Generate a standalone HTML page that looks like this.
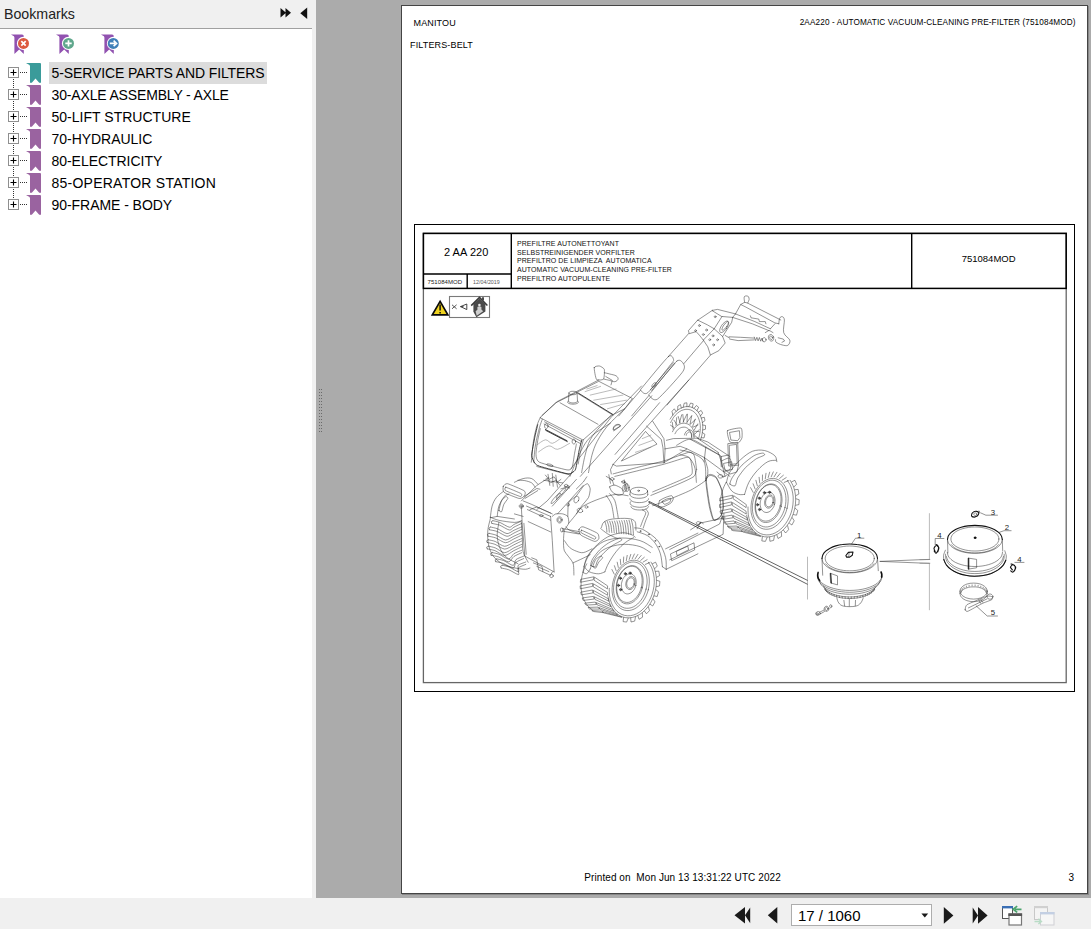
<!DOCTYPE html>
<html>
<head>
<meta charset="utf-8">
<title>Bookmarks</title>
<style>
html,body{margin:0;padding:0;}
body{width:1091px;height:929px;position:relative;overflow:hidden;background:#ababab;font-family:"Liberation Sans",sans-serif;color:#000;}
.abs{position:absolute;}
#side{position:absolute;left:0;top:0;width:312px;height:929px;background:#fff;}
#sidehead{position:absolute;left:0;top:0;width:312px;height:28px;background:#f0f0f0;border-bottom:1px solid #a0a0a0;box-sizing:content-box;}
#sidehead .t{position:absolute;left:4px;top:4.6px;font-size:14.2px;line-height:18px;color:#222;white-space:nowrap;}
#split{position:absolute;left:312px;top:0;width:4px;height:929px;background:#f0f0f0;}
#bottombar{position:absolute;left:0;top:898px;width:1091px;height:31px;background:#f0f0f0;}
.row{position:absolute;left:0;height:22px;width:312px;}
.row .lbl{position:absolute;left:49px;top:0;height:22px;line-height:22px;font-size:14px;padding:0 2px 0 2.5px;white-space:nowrap;color:#000;font-family:"Liberation Sans",sans-serif;}
.row.sel .lbl{background:#dcdcdc;}
#page{position:absolute;left:401px;top:5px;width:685px;height:887px;background:#fff;border:1px solid #444;box-shadow:1px 1px 0 #888;}
.ar{position:absolute;white-space:nowrap;font-family:"Liberation Sans",sans-serif;color:#000;}
</style>
</head>
<body>
<!-- sidebar -->
<div id="side"></div>
<div id="split"></div>
<div id="sidehead"><div class="t">Bookmarks</div></div>
<!-- header arrows -->
<svg class="abs" style="left:276px;top:4px" width="36" height="20" viewBox="276 4 36 20">
<path d="M280.5 8 L286 12.8 L280.5 17.6 Z M285.5 8 L291 12.8 L285.5 17.6 Z" fill="#111"/>
<path d="M307.2 7.6 V19 L300.3 13.3 Z" fill="#111"/>
</svg>
<!-- toolbar icons -->
<svg class="abs" style="left:0;top:30px" width="130" height="28" viewBox="0 30 130 28">
<defs>
<linearGradient id="pg" x1="0" y1="0" x2="1" y2="0"><stop offset="0" stop-color="#8f4fb0"/><stop offset="1" stop-color="#a060b8"/></linearGradient>
<g id="tb"><path d="M0 4.4 H11 Q12.8 4.4 12.8 6.2 V24 L8.2 19.6 L3.4 24 V7.6 Q3.4 5.8 1.6 5.4 Z" fill="#9152b0"/><circle cx="12.5" cy="13.4" r="6.6" fill="#fff"/></g>
</defs>
<use href="#tb" x="11" y="30"/>
<circle cx="23.5" cy="43.4" r="5.5" fill="#dc5a40"/>
<path d="M21.3 41.2 L25.7 45.6 M25.7 41.2 L21.3 45.6" stroke="#fff" stroke-width="1.7" fill="none"/>
<use href="#tb" x="56" y="30"/>
<circle cx="68.5" cy="43.4" r="5.5" fill="#5fa78c"/>
<path d="M65.3 43.4 H71.7 M68.5 40.2 V46.6" stroke="#fff" stroke-width="1.7" fill="none"/>
<use href="#tb" x="101" y="30"/>
<circle cx="113.3" cy="43.4" r="5.5" fill="#3f7fb8"/>
<path d="M109.8 43.4 H115 M113.6 40.6 L116.6 43.4 L113.6 46.2" stroke="#fff" stroke-width="1.6" fill="none"/>
</svg>
<!-- tree -->
<svg class="abs" style="left:0;top:58px" width="60" height="160" viewBox="0 58 60 160">
<defs><g id="rb"><path d="M26 0 H40 Q41 0 41 1 V19.8 L39.2 19.8 L35.5 15.6 L31.8 19.8 L30 19.8 V3.2 Q30 1.6 28.2 1.3 Z"/></g></defs>
<path d="M13.5 79 V205" stroke="#333" stroke-width="1" stroke-dasharray="1 1" fill="none" shape-rendering="crispEdges"/>
<path d="M20 72.5 H27" stroke="#333" stroke-width="1" stroke-dasharray="1 1" fill="none" shape-rendering="crispEdges"/>
<rect x="8.5" y="67.5" width="10" height="10" fill="#fff" stroke="#8f8f8f" stroke-width="1"/>
<path d="M10.5 72.5 H16.5 M13.5 69.5 V75.5" stroke="#000" stroke-width="1.1" fill="none"/>
<use href="#rb" x="0" y="63" fill="#3a9b9a"/>
<path d="M20 94.5 H27" stroke="#333" stroke-width="1" stroke-dasharray="1 1" fill="none" shape-rendering="crispEdges"/>
<rect x="8.5" y="89.5" width="10" height="10" fill="#fff" stroke="#8f8f8f" stroke-width="1"/>
<path d="M10.5 94.5 H16.5 M13.5 91.5 V97.5" stroke="#000" stroke-width="1.1" fill="none"/>
<use href="#rb" x="0" y="85" fill="#9a63a0"/>
<path d="M20 116.5 H27" stroke="#333" stroke-width="1" stroke-dasharray="1 1" fill="none" shape-rendering="crispEdges"/>
<rect x="8.5" y="111.5" width="10" height="10" fill="#fff" stroke="#8f8f8f" stroke-width="1"/>
<path d="M10.5 116.5 H16.5 M13.5 113.5 V119.5" stroke="#000" stroke-width="1.1" fill="none"/>
<use href="#rb" x="0" y="107" fill="#9a63a0"/>
<path d="M20 138.5 H27" stroke="#333" stroke-width="1" stroke-dasharray="1 1" fill="none" shape-rendering="crispEdges"/>
<rect x="8.5" y="133.5" width="10" height="10" fill="#fff" stroke="#8f8f8f" stroke-width="1"/>
<path d="M10.5 138.5 H16.5 M13.5 135.5 V141.5" stroke="#000" stroke-width="1.1" fill="none"/>
<use href="#rb" x="0" y="129" fill="#9a63a0"/>
<path d="M20 160.5 H27" stroke="#333" stroke-width="1" stroke-dasharray="1 1" fill="none" shape-rendering="crispEdges"/>
<rect x="8.5" y="155.5" width="10" height="10" fill="#fff" stroke="#8f8f8f" stroke-width="1"/>
<path d="M10.5 160.5 H16.5 M13.5 157.5 V163.5" stroke="#000" stroke-width="1.1" fill="none"/>
<use href="#rb" x="0" y="151" fill="#9a63a0"/>
<path d="M20 182.5 H27" stroke="#333" stroke-width="1" stroke-dasharray="1 1" fill="none" shape-rendering="crispEdges"/>
<rect x="8.5" y="177.5" width="10" height="10" fill="#fff" stroke="#8f8f8f" stroke-width="1"/>
<path d="M10.5 182.5 H16.5 M13.5 179.5 V185.5" stroke="#000" stroke-width="1.1" fill="none"/>
<use href="#rb" x="0" y="173" fill="#9a63a0"/>
<path d="M20 204.5 H27" stroke="#333" stroke-width="1" stroke-dasharray="1 1" fill="none" shape-rendering="crispEdges"/>
<rect x="8.5" y="199.5" width="10" height="10" fill="#fff" stroke="#8f8f8f" stroke-width="1"/>
<path d="M10.5 204.5 H16.5 M13.5 201.5 V207.5" stroke="#000" stroke-width="1.1" fill="none"/>
<use href="#rb" x="0" y="195" fill="#9a63a0"/>
</svg>
<div class="row sel" style="top:62px"><span class="lbl" style="letter-spacing:-0.112px">5-SERVICE PARTS AND FILTERS</span></div>
<div class="row" style="top:84px"><span class="lbl" style="letter-spacing:-0.153px">30-AXLE ASSEMBLY - AXLE</span></div>
<div class="row" style="top:106px"><span class="lbl" style="letter-spacing:0.019px">50-LIFT STRUCTURE</span></div>
<div class="row" style="top:128px"><span class="lbl" style="letter-spacing:-0.028px">70-HYDRAULIC</span></div>
<div class="row" style="top:150px"><span class="lbl" style="letter-spacing:-0.039px">80-ELECTRICITY</span></div>
<div class="row" style="top:172px"><span class="lbl" style="letter-spacing:0.242px">85-OPERATOR STATION</span></div>
<div class="row" style="top:194px"><span class="lbl" style="letter-spacing:-0.051px">90-FRAME - BODY</span></div>

<!-- page -->
<div id="page"></div>
<div class="ar" style="left:413.5px;top:16.8px;font-size:9px;line-height:12px;letter-spacing:0.137px">MANITOU</div>
<div class="ar" style="left:410px;top:39px;font-size:9px;line-height:12px;letter-spacing:0.143px">FILTERS-BELT</div>
<div class="ar" style="left:799.7px;top:16.6px;font-size:8.2px;line-height:12px;letter-spacing:0.127px">2AA220 - AUTOMATIC VACUUM-CLEANING PRE-FILTER (751084MOD)</div>
<div class="ar" style="left:584.3px;top:870.5px;font-size:10px;line-height:13px;letter-spacing:0.076px;white-space:pre">Printed on  Mon Jun 13 13:31:22 UTC 2022</div>
<div class="ar" style="left:1068.5px;top:870.5px;font-size:10px;line-height:13px">3</div>
<!-- frames -->
<svg class="abs" style="left:410px;top:220px" width="670" height="476" viewBox="410 220 670 476">
<rect x="414.5" y="224.5" width="660" height="467" fill="none" stroke="#000" stroke-width="1"/>
<rect x="423.4" y="233.4" width="642.8" height="449.2" fill="none" stroke="#666" stroke-width="1.3"/>
<rect x="423.4" y="233.4" width="642.8" height="55" fill="none" stroke="#000" stroke-width="1.5"/>
<path d="M511.3 233.4 V288.4 M911.7 233.4 V288.4 M423.4 274 H511.3 M467.2 274 V288.4" stroke="#000" stroke-width="1.4" fill="none"/>
</svg>
<div class="ar" style="left:443.9px;top:245.6px;font-size:11px;line-height:13px;letter-spacing:0.069px;white-space:pre">2 AA 220</div>
<div class="ar" style="left:427.5px;top:277.5px;font-size:6px;line-height:8px;letter-spacing:0.074px;color:#222">751084MOD</div>
<div class="ar" style="left:473px;top:277.8px;font-size:5.3px;line-height:8px;letter-spacing:0.028px;color:#555">12/04/2019</div>
<div class="ar" style="left:961.8px;top:252.6px;font-size:9.5px;line-height:12px;letter-spacing:-0.019px">751084MOD</div>
<div class="ar" style="left:517px;top:240.2px;font-size:7px;line-height:8.62px;letter-spacing:0.063px;white-space:pre;color:#111">PREFILTRE AUTONETTOYANT<br>SELBSTREINIGENDER VORFILTER<br>PREFILTRO DE LIMPIEZA  AUTOMATICA<br>AUTOMATIC VACUUM-CLEANING PRE-FILTER<br>PREFILTRO AUTOPULENTE</div>

<!-- warning icons -->
<svg class="abs" style="left:428px;top:293px" width="66" height="28" viewBox="428 293 66 28">
<path d="M440.1 301.4 L447.9 314.9 H432.3 Z" fill="#efd21f" stroke="#0a0a0a" stroke-width="1.7" stroke-linejoin="miter"/>
<path d="M440.1 304.6 V310.6 M440.1 312 V313.4" stroke="#111" stroke-width="1.5" fill="none"/>
<rect x="449.5" y="296.5" width="40" height="21" fill="#fff" stroke="#7a7a7a" stroke-width="1.1"/>
<path d="M452 304.8 L456.6 308.8 M456.6 304.8 L452 308.8" stroke="#444" stroke-width="0.9" fill="none"/>
<path d="M460.5 306.6 L466.8 304 V309.6 Z M460.5 306.6 H463.5" stroke="#333" stroke-width="0.9" fill="none"/>
<path d="M473.4 304 L479.5 298.4 L485.4 304 V311.6 L476.4 317.3 L473.4 311.8 Z" fill="#4a4a4a"/>
<path d="M471.2 305.6 L479.5 297.4 L487.4 305.6" stroke="#3a3a3a" stroke-width="1.5" fill="none" stroke-linejoin="miter"/>
<path d="M482 297.2 h2 v3.4 h-2 z" fill="#4a4a4a"/>
<path d="M477.4 307 q2 -1.6 4 0 v2.6 l1.8 1.6 L476.7 315.8 L475.6 311.2 l1.8 -1.4 z" fill="#cfcfcf"/>
<circle cx="479.4" cy="305" r="1.3" fill="#e8e8e8"/>
</svg>
<!--DRAW-START-->
<svg class="abs" style="left:424px;top:289px" width="642" height="393" viewBox="424 289 642 393" fill="none" stroke-linecap="round" stroke-linejoin="round">
<path stroke="#303030" stroke-width="0.52" d="M712.3 310.4 L717.5 309.4 L735.5 313.9 L732.7 317.4 L722 316.5Z M712.3 310.4 L697.4 320.4 M697.4 320.4 L688.4 330.7 L689.3 333.7 L696.1 331.6 L699.4 335.2 L703.3 340.1 L714.2 328.8 L707.8 325.1Z M714.2 328.8 L722.6 336.5 L725.2 343 L718.8 350.7 L710.4 355 L707.8 346.8 L703.3 340.1 M714.2 328.8 L722 316.5 M722.6 336.5 L731.7 322.3 L732.7 317.4 M726.5 328.4 C726.2 328.9 725.8 329.4 725.4 329.8 C725.1 330.2 724.7 330.6 724.3 331 C723.9 331.3 723.5 331.6 723.1 331.9 C722.7 332.1 722.3 332.3 722 332.4 C721.7 332.5 721.3 332.6 721.1 332.6 C720.8 332.5 720.5 332.5 720.3 332.3 C720.1 332.2 720 332 719.9 331.7 C719.7 331.4 719.7 331.1 719.7 330.8 C719.7 330.4 719.7 330 719.8 329.6 C719.9 329.1 720 328.6 720.2 328.2 C720.4 327.7 720.7 327.2 720.9 326.7 C721.2 326.2 721.5 325.7 721.8 325.2 C722.2 324.7 722.6 324.2 722.9 323.8 C723.3 323.4 723.7 323 724.1 322.7 C724.5 322.3 724.9 322 725.3 321.8 C725.6 321.5 726 321.3 726.3 321.2 C726.7 321.1 727 321.1 727.3 321.1 C727.6 321.1 727.8 321.2 728 321.3 C728.2 321.5 728.4 321.7 728.5 321.9 C728.6 322.2 728.7 322.5 728.7 322.9 C728.7 323.2 728.6 323.6 728.5 324.1 C728.5 324.5 728.3 325 728.1 325.5 C727.9 326 727.7 326.5 727.4 327 C727.2 327.5 726.8 328 726.5 328.4Z M726.5 326.8 C726.2 327.2 725.9 327.5 725.7 327.9 C725.4 328.2 725.1 328.5 724.8 328.8 C724.6 329.1 724.3 329.3 724 329.5 C723.8 329.7 723.5 329.9 723.3 330 C723.1 330.1 722.8 330.2 722.7 330.2 C722.5 330.2 722.4 330.2 722.2 330.1 C722.1 330.1 722.1 329.9 722 329.8 C722 329.6 722 329.4 722 329.1 C722 328.9 722.1 328.6 722.2 328.3 C722.3 328 722.5 327.6 722.6 327.3 C722.8 326.9 723 326.5 723.2 326.1 C723.4 325.8 723.7 325.4 723.9 325 C724.2 324.7 724.5 324.3 724.8 324 C725 323.6 725.3 323.3 725.6 323 C725.9 322.7 726.1 322.5 726.4 322.3 C726.7 322.1 726.9 321.9 727.1 321.8 C727.4 321.7 727.6 321.6 727.7 321.6 C727.9 321.6 728.1 321.6 728.2 321.7 C728.3 321.8 728.4 321.9 728.4 322.1 C728.4 322.2 728.4 322.4 728.4 322.7 C728.4 322.9 728.3 323.2 728.2 323.5 C728.1 323.9 728 324.2 727.8 324.6 C727.6 324.9 727.4 325.3 727.2 325.7 C727 326 726.7 326.4 726.5 326.8Z M700.3 325.5 C700.3 325.6 700.3 325.7 700.2 325.8 C700.2 325.8 700.2 325.9 700.2 326 C700.1 326 700.1 326.1 700 326.2 C700 326.2 699.9 326.3 699.8 326.3 C699.8 326.3 699.7 326.4 699.6 326.4 C699.5 326.4 699.5 326.4 699.4 326.4 C699.3 326.4 699.2 326.4 699.1 326.4 C699.1 326.4 699 326.3 698.9 326.3 C698.9 326.3 698.8 326.2 698.7 326.2 C698.7 326.1 698.6 326 698.6 326 C698.6 325.9 698.5 325.8 698.5 325.8 C698.5 325.7 698.5 325.6 698.5 325.5 C698.5 325.4 698.5 325.4 698.5 325.3 C698.5 325.2 698.6 325.1 698.6 325.1 C698.6 325 698.7 324.9 698.7 324.9 C698.8 324.8 698.9 324.8 698.9 324.7 C699 324.7 699.1 324.7 699.1 324.6 C699.2 324.6 699.3 324.6 699.4 324.6 C699.5 324.6 699.5 324.6 699.6 324.6 C699.7 324.7 699.8 324.7 699.8 324.7 C699.9 324.8 700 324.8 700 324.9 C700.1 324.9 700.1 325 700.2 325.1 C700.2 325.1 700.2 325.2 700.2 325.3 C700.3 325.4 700.3 325.4 700.3 325.5Z M707.4 330 C707.4 330.1 707.4 330.2 707.4 330.3 C707.3 330.4 707.3 330.4 707.3 330.5 C707.2 330.6 707.2 330.6 707.1 330.7 C707.1 330.7 707 330.8 706.9 330.8 C706.9 330.9 706.8 330.9 706.7 330.9 C706.6 330.9 706.6 330.9 706.5 330.9 C706.4 330.9 706.3 330.9 706.2 330.9 C706.2 330.9 706.1 330.9 706 330.8 C706 330.8 705.9 330.7 705.8 330.7 C705.8 330.6 705.7 330.6 705.7 330.5 C705.7 330.4 705.6 330.4 705.6 330.3 C705.6 330.2 705.6 330.1 705.6 330 C705.6 330 705.6 329.9 705.6 329.8 C705.6 329.7 705.7 329.7 705.7 329.6 C705.7 329.5 705.8 329.5 705.8 329.4 C705.9 329.3 706 329.3 706 329.3 C706.1 329.2 706.2 329.2 706.2 329.2 C706.3 329.1 706.4 329.1 706.5 329.1 C706.6 329.1 706.6 329.1 706.7 329.2 C706.8 329.2 706.9 329.2 706.9 329.3 C707 329.3 707.1 329.3 707.1 329.4 C707.2 329.5 707.2 329.5 707.3 329.6 C707.3 329.7 707.3 329.7 707.4 329.8 C707.4 329.9 707.4 330 707.4 330Z M696.4 330.7 C696.4 330.8 696.4 330.8 696.4 330.9 C696.4 331 696.3 331.1 696.3 331.1 C696.2 331.2 696.2 331.3 696.1 331.3 C696.1 331.4 696 331.4 696 331.5 C695.9 331.5 695.8 331.5 695.7 331.6 C695.7 331.6 695.6 331.6 695.5 331.6 C695.4 331.6 695.3 331.6 695.3 331.6 C695.2 331.5 695.1 331.5 695 331.5 C695 331.4 694.9 331.4 694.9 331.3 C694.8 331.3 694.8 331.2 694.7 331.1 C694.7 331.1 694.6 331 694.6 330.9 C694.6 330.8 694.6 330.8 694.6 330.7 C694.6 330.6 694.6 330.5 694.6 330.5 C694.6 330.4 694.7 330.3 694.7 330.2 C694.8 330.2 694.8 330.1 694.9 330 C694.9 330 695 329.9 695 329.9 C695.1 329.9 695.2 329.8 695.3 329.8 C695.3 329.8 695.4 329.8 695.5 329.8 C695.6 329.8 695.7 329.8 695.7 329.8 C695.8 329.8 695.9 329.9 696 329.9 C696 329.9 696.1 330 696.1 330 C696.2 330.1 696.2 330.2 696.3 330.2 C696.3 330.3 696.4 330.4 696.4 330.5 C696.4 330.5 696.4 330.6 696.4 330.7Z M704.2 334.6 C704.2 334.6 704.1 334.7 704.1 334.8 C704.1 334.9 704.1 334.9 704 335 C704 335.1 703.9 335.1 703.9 335.2 C703.8 335.3 703.8 335.3 703.7 335.3 C703.6 335.4 703.6 335.4 703.5 335.4 C703.4 335.5 703.3 335.5 703.3 335.5 C703.2 335.5 703.1 335.5 703 335.4 C702.9 335.4 702.9 335.4 702.8 335.3 C702.7 335.3 702.7 335.3 702.6 335.2 C702.6 335.1 702.5 335.1 702.5 335 C702.4 334.9 702.4 334.9 702.4 334.8 C702.4 334.7 702.3 334.6 702.3 334.6 C702.3 334.5 702.4 334.4 702.4 334.3 C702.4 334.3 702.4 334.2 702.5 334.1 C702.5 334 702.6 334 702.6 333.9 C702.7 333.9 702.7 333.8 702.8 333.8 C702.9 333.7 702.9 333.7 703 333.7 C703.1 333.7 703.2 333.7 703.3 333.7 C703.3 333.7 703.4 333.7 703.5 333.7 C703.6 333.7 703.6 333.7 703.7 333.8 C703.8 333.8 703.8 333.9 703.9 333.9 C703.9 334 704 334 704 334.1 C704.1 334.2 704.1 334.3 704.1 334.3 C704.1 334.4 704.2 334.5 704.2 334.6Z M713.8 335.9 C713.8 335.9 713.8 336 713.8 336.1 C713.8 336.2 713.8 336.2 713.7 336.3 C713.7 336.4 713.6 336.4 713.6 336.5 C713.5 336.6 713.5 336.6 713.4 336.6 C713.3 336.7 713.2 336.7 713.2 336.7 C713.1 336.7 713 336.8 712.9 336.8 C712.9 336.8 712.8 336.7 712.7 336.7 C712.6 336.7 712.6 336.7 712.5 336.6 C712.4 336.6 712.4 336.6 712.3 336.5 C712.2 336.4 712.2 336.4 712.2 336.3 C712.1 336.2 712.1 336.2 712.1 336.1 C712 336 712 335.9 712 335.9 C712 335.8 712 335.7 712.1 335.6 C712.1 335.5 712.1 335.5 712.2 335.4 C712.2 335.3 712.2 335.3 712.3 335.2 C712.4 335.2 712.4 335.1 712.5 335.1 C712.6 335 712.6 335 712.7 335 C712.8 335 712.9 335 712.9 335 C713 335 713.1 335 713.2 335 C713.2 335 713.3 335 713.4 335.1 C713.5 335.1 713.5 335.2 713.6 335.2 C713.6 335.3 713.7 335.3 713.7 335.4 C713.8 335.5 713.8 335.5 713.8 335.6 C713.8 335.7 713.8 335.8 713.8 335.9Z M718.4 339.7 C718.4 339.8 718.4 339.9 718.3 340 C718.3 340 718.3 340.1 718.2 340.2 C718.2 340.3 718.2 340.3 718.1 340.4 C718 340.4 718 340.5 717.9 340.5 C717.8 340.6 717.8 340.6 717.7 340.6 C717.6 340.6 717.5 340.6 717.5 340.6 C717.4 340.6 717.3 340.6 717.2 340.6 C717.2 340.6 717.1 340.6 717 340.5 C716.9 340.5 716.9 340.4 716.8 340.4 C716.8 340.3 716.7 340.3 716.7 340.2 C716.6 340.1 716.6 340 716.6 340 C716.6 339.9 716.6 339.8 716.6 339.7 C716.6 339.7 716.6 339.6 716.6 339.5 C716.6 339.4 716.6 339.3 716.7 339.3 C716.7 339.2 716.8 339.1 716.8 339.1 C716.9 339 716.9 339 717 338.9 C717.1 338.9 717.2 338.9 717.2 338.9 C717.3 338.8 717.4 338.8 717.5 338.8 C717.5 338.8 717.6 338.8 717.7 338.9 C717.8 338.9 717.8 338.9 717.9 338.9 C718 339 718 339 718.1 339.1 C718.2 339.1 718.2 339.2 718.2 339.3 C718.3 339.3 718.3 339.4 718.3 339.5 C718.4 339.6 718.4 339.7 718.4 339.7Z M710.6 339.7 C710.6 339.8 710.6 339.9 710.6 340 C710.6 340 710.5 340.1 710.5 340.2 C710.5 340.3 710.4 340.3 710.3 340.4 C710.3 340.4 710.2 340.5 710.2 340.5 C710.1 340.6 710 340.6 709.9 340.6 C709.9 340.6 709.8 340.6 709.7 340.6 C709.6 340.6 709.6 340.6 709.5 340.6 C709.4 340.6 709.3 340.6 709.3 340.5 C709.2 340.5 709.1 340.4 709.1 340.4 C709 340.3 709 340.3 708.9 340.2 C708.9 340.1 708.9 340 708.8 340 C708.8 339.9 708.8 339.8 708.8 339.7 C708.8 339.7 708.8 339.6 708.8 339.5 C708.9 339.4 708.9 339.3 708.9 339.3 C709 339.2 709 339.1 709.1 339.1 C709.1 339 709.2 339 709.3 338.9 C709.3 338.9 709.4 338.9 709.5 338.9 C709.6 338.8 709.6 338.8 709.7 338.8 C709.8 338.8 709.9 338.8 709.9 338.9 C710 338.9 710.1 338.9 710.2 338.9 C710.2 339 710.3 339 710.3 339.1 C710.4 339.1 710.5 339.2 710.5 339.3 C710.5 339.3 710.6 339.4 710.6 339.5 C710.6 339.6 710.6 339.7 710.6 339.7Z M714.5 344.9 C714.5 345 714.5 345.1 714.5 345.1 C714.4 345.2 714.4 345.3 714.4 345.3 C714.3 345.4 714.3 345.5 714.2 345.5 C714.2 345.6 714.1 345.6 714 345.7 C714 345.7 713.9 345.8 713.8 345.8 C713.7 345.8 713.7 345.8 713.6 345.8 C713.5 345.8 713.4 345.8 713.4 345.8 C713.3 345.8 713.2 345.7 713.1 345.7 C713.1 345.6 713 345.6 712.9 345.5 C712.9 345.5 712.8 345.4 712.8 345.3 C712.8 345.3 712.7 345.2 712.7 345.1 C712.7 345.1 712.7 345 712.7 344.9 C712.7 344.8 712.7 344.7 712.7 344.7 C712.7 344.6 712.8 344.5 712.8 344.4 C712.8 344.4 712.9 344.3 712.9 344.3 C713 344.2 713.1 344.2 713.1 344.1 C713.2 344.1 713.3 344 713.4 344 C713.4 344 713.5 344 713.6 344 C713.7 344 713.7 344 713.8 344 C713.9 344 714 344.1 714 344.1 C714.1 344.2 714.2 344.2 714.2 344.3 C714.3 344.3 714.3 344.4 714.4 344.4 C714.4 344.5 714.4 344.6 714.5 344.7 C714.5 344.7 714.5 344.8 714.5 344.9Z M716 316.7 C716 316.8 716 316.9 716 317 C716 317 716 317.1 715.9 317.2 C715.9 317.3 715.8 317.3 715.8 317.4 C715.7 317.4 715.7 317.5 715.6 317.5 C715.5 317.6 715.4 317.6 715.4 317.6 C715.3 317.6 715.2 317.6 715.1 317.6 C715.1 317.6 715 317.6 714.9 317.6 C714.8 317.6 714.8 317.6 714.7 317.5 C714.6 317.5 714.6 317.4 714.5 317.4 C714.4 317.3 714.4 317.3 714.4 317.2 C714.3 317.1 714.3 317 714.3 317 C714.2 316.9 714.2 316.8 714.2 316.7 C714.2 316.7 714.2 316.6 714.3 316.5 C714.3 316.4 714.3 316.4 714.4 316.3 C714.4 316.2 714.4 316.2 714.5 316.1 C714.6 316 714.6 316 714.7 316 C714.8 315.9 714.8 315.9 714.9 315.9 C715 315.8 715.1 315.8 715.1 315.8 C715.2 315.8 715.3 315.8 715.4 315.9 C715.4 315.9 715.5 315.9 715.6 316 C715.7 316 715.7 316 715.8 316.1 C715.8 316.2 715.9 316.2 715.9 316.3 C716 316.4 716 316.4 716 316.5 C716 316.6 716 316.7 716 316.7Z M688.8 333.4 L668.4 356.5 M703.5 340.6 L683.9 363.6 M710.4 355.2 L667.1 405 M735.5 313.9 L740.7 304.5 L744.6 302.3 L747.2 302.9 L780.8 320 M740.7 304.5 L745.9 307.1 L774.9 322.9 L778.8 323.8 M732.7 317.4 L752.3 323.8 L769.1 330.7 M735.5 313.9 L754.9 321.6 L770.4 328.8 M744.6 302.3 C744.5 301.4 743.9 298.2 744.2 297.1 C744.5 296 745.4 296 746.1 295.9 C746.8 295.9 748 296.1 748.5 296.7 C749 297.3 749.2 298.7 749.1 299.7 C749 300.7 747.9 302.4 747.7 302.9 M750.4 315.8 L751 317.8 L758.8 319.1 L759.4 321.6 L765.3 321.6 L765.9 323.8 M778.8 323.8 C779 322.9 779.1 319.3 779.7 318.2 C780.3 317 781.5 316.4 782.3 316.7 C783.1 317 784.1 317.3 784.4 320 C784.6 322.6 782.8 329.3 783.7 332.6 C784.6 336 789.1 338 789.8 340.1 C790.5 342.2 789.1 344.5 787.9 345.3 C786.6 346.1 784 345.4 782 344.9 C780.1 344.4 777.3 343.2 776.2 342.3 C775.2 341.5 775.7 340.2 775.6 339.7 M770.4 328.8 L774.9 323.8 M729.1 336.8 L740.7 337.3 L754.3 338.1 M729.7 339.1 L738.1 340.6 L754.3 339.9 M725.2 335.5 L729.7 338.1 M754.3 337.1 L755.6 340.6 L756.9 337.3 L758.1 340.9 L759.4 337.5 L760.7 341.2 L762 338.1 L762.9 341.2 M773.5 336.9 C773.6 337.2 773.7 337.5 773.7 337.8 C773.7 338 773.8 338.3 773.7 338.6 C773.7 338.9 773.7 339.2 773.6 339.4 C773.5 339.6 773.4 339.9 773.3 340.1 C773.1 340.3 773 340.5 772.8 340.6 C772.6 340.8 772.4 340.9 772.2 340.9 C772 341 771.8 341.1 771.5 341.1 C771.3 341.1 771.1 341 770.8 341 C770.6 340.9 770.4 340.8 770.2 340.6 C769.9 340.5 769.7 340.3 769.5 340.1 C769.3 339.9 769.2 339.7 769 339.5 C768.9 339.2 768.7 338.9 768.6 338.7 C768.5 338.4 768.5 338.1 768.4 337.8 C768.4 337.5 768.4 337.3 768.4 337 C768.4 336.7 768.5 336.4 768.5 336.2 C768.6 335.9 768.7 335.7 768.9 335.5 C769 335.3 769.2 335.1 769.3 335 C769.5 334.8 769.7 334.7 769.9 334.6 C770.1 334.6 770.4 334.5 770.6 334.5 C770.8 334.5 771.1 334.5 771.3 334.6 C771.5 334.7 771.8 334.8 772 334.9 C772.2 335.1 772.4 335.3 772.6 335.5 C772.8 335.6 773 335.9 773.1 336.1 C773.3 336.4 773.4 336.6 773.5 336.9Z M772.3 337.4 C772.3 337.5 772.4 337.7 772.4 337.8 C772.4 338 772.4 338.1 772.4 338.3 C772.4 338.4 772.4 338.6 772.4 338.7 C772.3 338.8 772.3 338.9 772.2 339 C772.1 339.2 772.1 339.2 772 339.3 C771.9 339.4 771.8 339.5 771.7 339.5 C771.6 339.5 771.5 339.6 771.3 339.5 C771.2 339.5 771.1 339.5 771 339.5 C770.9 339.4 770.8 339.4 770.6 339.3 C770.5 339.2 770.4 339.1 770.3 339 C770.2 338.9 770.1 338.8 770.1 338.7 C770 338.5 769.9 338.4 769.9 338.2 C769.8 338.1 769.8 337.9 769.7 337.8 C769.7 337.6 769.7 337.5 769.7 337.3 C769.7 337.2 769.7 337 769.8 336.9 C769.8 336.8 769.9 336.6 769.9 336.5 C770 336.4 770.1 336.3 770.2 336.3 C770.2 336.2 770.3 336.1 770.4 336.1 C770.6 336.1 770.7 336 770.8 336 C770.9 336 771 336.1 771.1 336.1 C771.3 336.1 771.4 336.2 771.5 336.3 C771.6 336.4 771.7 336.5 771.8 336.6 C771.9 336.7 772 336.8 772.1 336.9 C772.2 337.1 772.2 337.2 772.3 337.4Z M766 339.7 C766 339.9 766 340.1 766 340.3 C765.9 340.4 765.9 340.6 765.8 340.8 C765.7 340.9 765.6 341.1 765.5 341.2 C765.4 341.3 765.3 341.4 765.1 341.5 C765 341.6 764.8 341.7 764.7 341.7 C764.5 341.8 764.4 341.8 764.2 341.8 C764.1 341.8 763.9 341.8 763.8 341.7 C763.6 341.7 763.5 341.6 763.3 341.5 C763.2 341.4 763.1 341.3 762.9 341.2 C762.8 341.1 762.7 340.9 762.7 340.8 C762.6 340.6 762.5 340.4 762.5 340.3 C762.4 340.1 762.4 339.9 762.4 339.7 C762.4 339.6 762.4 339.4 762.5 339.2 C762.5 339 762.6 338.9 762.7 338.7 C762.7 338.5 762.8 338.4 762.9 338.3 C763.1 338.1 763.2 338 763.3 337.9 C763.5 337.9 763.6 337.8 763.8 337.7 C763.9 337.7 764.1 337.7 764.2 337.7 C764.4 337.7 764.5 337.7 764.7 337.7 C764.8 337.8 765 337.9 765.1 337.9 C765.3 338 765.4 338.1 765.5 338.3 C765.6 338.4 765.7 338.5 765.8 338.7 C765.9 338.9 765.9 339 766 339.2 C766 339.4 766 339.6 766 339.7Z M765.3 332.6 L769.1 330.3 L773 332.6 M778.2 337.8 L783.3 339.1 L784.6 341 L782 342.3 M668.5 356.5 C672 353.4 673.4 358.8 673.6 359.8 C673.9 360.7 673.4 361.1 670.4 364.9 C667.4 368.8 651.3 389.8 647.8 392.7 C644.3 395.6 641.2 390.9 640.7 390.1 C640.2 389.4 640.1 390.2 643.3 386.2 C646.5 382.3 664.9 359.6 668.5 356.5Z M676.9 361 C680.6 358 683.4 363.6 684 364.9 C684.6 366.3 685.1 368.7 682 372.7 C679 376.7 661.3 396.5 657.5 399.1 C653.7 401.8 649.7 396.3 649.1 395.3 C648.5 394.3 649.1 394.7 652.3 390.8 C655.6 386.8 673.2 364.1 676.9 361Z M673.6 362.6 L650.4 389.7 M674.9 363.4 L651.7 390.5 M654.9 385.8 C654.7 386 654.5 386.1 654.4 386.3 C654.2 386.5 654 386.6 653.8 386.7 C653.7 386.9 653.5 387 653.3 387.1 C653.1 387.1 653 387.2 652.8 387.2 C652.6 387.3 652.5 387.3 652.4 387.3 C652.3 387.2 652.1 387.2 652.1 387.1 C652 387 651.9 386.9 651.9 386.8 C651.8 386.7 651.8 386.6 651.8 386.4 C651.8 386.3 651.8 386.1 651.9 385.9 C651.9 385.7 652 385.5 652.1 385.3 C652.2 385.1 652.3 384.9 652.5 384.7 C652.6 384.5 652.7 384.3 652.9 384.1 C653.1 383.9 653.2 383.7 653.4 383.6 C653.6 383.4 653.8 383.3 653.9 383.1 C654.1 383 654.3 382.9 654.5 382.8 C654.6 382.7 654.8 382.7 655 382.6 C655.1 382.6 655.3 382.6 655.4 382.6 C655.5 382.6 655.6 382.7 655.7 382.8 C655.8 382.8 655.9 382.9 655.9 383.1 C655.9 383.2 656 383.3 656 383.5 C656 383.6 655.9 383.8 655.9 384 C655.8 384.2 655.7 384.4 655.7 384.6 C655.6 384.8 655.4 385 655.3 385.2 C655.2 385.4 655 385.6 654.9 385.8Z M640.7 390.1 L618.8 415.9 M649.1 395.3 L631.7 415.9 M594.2 367.5 C594.5 366.2 598.4 365.8 599.4 366 C600.4 366.1 603.9 368.1 604.3 369.4 C604.7 370.8 604.3 378.1 603.5 379.1 C602.7 380.1 597.5 380.5 596.5 379.4 C595.6 378.2 593.9 368.8 594.2 367.5Z M604.3 372.7 C605.2 372.9 607.7 373.4 609.7 374 C611.7 374.5 614.8 375 616.2 375.9 C617.6 376.8 618.3 378.2 618.1 379.1 C617.9 380.1 616.3 381.5 614.9 381.7 C613.5 381.9 611.5 380.9 609.7 380.4 C607.9 380 604.9 379.3 603.9 379.1 M605.8 376.5 L612.3 380.4 L611 384.9 M540.3 417.4 L555.8 402.8 L598.8 381.3 L632.4 398.5 L624.7 408.8 L610.9 415.7 L598.8 426.1 L583.3 439.8Z M560.1 402.8 L598 424.3 M578.5 393.9 L613 415.2 M542 415.4 L557.2 401.6 L598.8 379.9 M577.1 393 C577.1 393.1 577.1 393.3 577 393.4 C576.9 393.6 576.8 393.7 576.6 393.9 C576.4 394 576.2 394.1 575.9 394.2 C575.7 394.3 575.4 394.4 575.1 394.5 C574.8 394.6 574.4 394.6 574.1 394.7 C573.7 394.7 573.4 394.7 573 394.7 C572.6 394.7 572.3 394.7 571.9 394.7 C571.6 394.6 571.2 394.6 570.9 394.5 C570.6 394.4 570.3 394.3 570.1 394.2 C569.8 394.1 569.6 394 569.4 393.9 C569.2 393.7 569.1 393.6 569 393.4 C568.9 393.3 568.9 393.1 568.9 393 C568.9 392.8 568.9 392.7 569 392.5 C569.1 392.4 569.2 392.3 569.4 392.1 C569.6 392 569.8 391.9 570.1 391.8 C570.3 391.7 570.6 391.6 570.9 391.5 C571.2 391.4 571.6 391.4 571.9 391.3 C572.3 391.3 572.6 391.3 573 391.3 C573.4 391.3 573.7 391.3 574.1 391.3 C574.4 391.4 574.8 391.4 575.1 391.5 C575.4 391.6 575.7 391.7 575.9 391.8 C576.2 391.9 576.4 392 576.6 392.1 C576.8 392.3 576.9 392.4 577 392.5 C577.1 392.7 577.1 392.8 577.1 393Z M577.5 401.1 C577.5 401.2 577.4 401.4 577.3 401.6 C577.2 401.7 577.1 401.9 576.9 402 C576.7 402.2 576.4 402.3 576.2 402.4 C575.9 402.5 575.6 402.6 575.2 402.7 C574.9 402.8 574.5 402.9 574.2 402.9 C573.8 403 573.4 403 573 403 C572.6 403 572.2 403 571.8 402.9 C571.5 402.9 571.1 402.8 570.8 402.7 C570.4 402.6 570.1 402.5 569.8 402.4 C569.6 402.3 569.3 402.2 569.1 402 C568.9 401.9 568.8 401.7 568.7 401.6 C568.6 401.4 568.6 401.2 568.5 401.1 M568.9 393 L568.5 401.1 M577.1 393 L577.5 401.1 M578.5 401.9 C578.5 402 578.4 402.3 578.3 402.5 C578.2 402.7 578 402.9 577.8 403.1 C577.5 403.2 577.2 403.4 576.9 403.5 C576.6 403.7 576.2 403.8 575.8 403.9 C575.3 404 574.9 404.1 574.4 404.1 C574 404.2 573.5 404.2 573 404.2 C572.5 404.2 572 404.2 571.6 404.1 C571.1 404.1 570.7 404 570.2 403.9 C569.8 403.8 569.4 403.7 569.1 403.5 C568.8 403.4 568.5 403.2 568.2 403.1 C568 402.9 567.8 402.7 567.7 402.5 C567.6 402.3 567.5 402 567.5 401.9 M540.3 417.4 C539.7 418.9 538 422 536.8 426.1 C535.7 430.1 534.3 435.5 533.4 441.6 C532.5 447.6 531.7 458.8 531.3 462.2 M542.3 419.2 C541.9 420.6 540.6 423.5 539.4 427.8 C538.3 432.1 536.4 439.3 535.5 445 C534.5 450.7 534 459.4 533.7 462.2 M544.6 421.8 L581.6 441.6 M544.1 424 L580.8 443.8 M548 426.1 C548 426.3 548 426.5 548 426.7 C547.9 426.9 547.9 427.1 547.8 427.3 C547.7 427.4 547.6 427.6 547.5 427.8 C547.4 427.9 547.3 428 547.2 428.1 C547 428.3 546.9 428.3 546.8 428.4 C546.6 428.4 546.5 428.5 546.3 428.5 C546.2 428.5 546 428.4 545.9 428.4 C545.7 428.3 545.6 428.3 545.4 428.1 C545.3 428 545.2 427.9 545.1 427.8 C545 427.6 544.9 427.4 544.8 427.3 C544.7 427.1 544.7 426.9 544.6 426.7 C544.6 426.5 544.6 426.3 544.6 426.1 C544.6 425.9 544.6 425.6 544.6 425.4 C544.7 425.2 544.7 425 544.8 424.9 C544.9 424.7 545 424.5 545.1 424.4 C545.2 424.2 545.3 424.1 545.4 424 C545.6 423.9 545.7 423.8 545.9 423.7 C546 423.7 546.2 423.6 546.3 423.6 C546.5 423.6 546.6 423.7 546.8 423.7 C546.9 423.8 547 423.9 547.2 424 C547.3 424.1 547.4 424.2 547.5 424.4 C547.6 424.5 547.7 424.7 547.8 424.9 C547.9 425 547.9 425.2 548 425.4 C548 425.6 548 425.9 548 426.1Z M575.6 441.6 C575.6 441.8 575.6 442 575.5 442.2 C575.5 442.4 575.4 442.6 575.4 442.8 C575.3 442.9 575.2 443.1 575.1 443.3 C575 443.4 574.9 443.5 574.7 443.6 C574.6 443.8 574.5 443.8 574.3 443.9 C574.2 443.9 574 444 573.9 444 C573.7 444 573.6 443.9 573.4 443.9 C573.3 443.8 573.1 443.8 573 443.6 C572.9 443.5 572.8 443.4 572.6 443.3 C572.5 443.1 572.4 442.9 572.4 442.8 C572.3 442.6 572.2 442.4 572.2 442.2 C572.2 442 572.1 441.8 572.1 441.6 C572.1 441.4 572.2 441.1 572.2 440.9 C572.2 440.7 572.3 440.5 572.4 440.4 C572.4 440.2 572.5 440 572.6 439.9 C572.8 439.7 572.9 439.6 573 439.5 C573.1 439.4 573.3 439.3 573.4 439.2 C573.6 439.2 573.7 439.1 573.9 439.1 C574 439.1 574.2 439.2 574.3 439.2 C574.5 439.3 574.6 439.4 574.7 439.5 C574.9 439.6 575 439.7 575.1 439.9 C575.2 440 575.3 440.2 575.4 440.4 C575.4 440.5 575.5 440.7 575.5 440.9 C575.6 441.1 575.6 441.4 575.6 441.6Z M583.3 439.8 C582.9 441.6 581.6 446.2 580.8 450.2 C579.9 454.2 578.6 461.7 578.2 464 M610.9 415.7 C609.2 417.4 604 422 600.6 426.1 C597.1 430.1 592.8 435 590.2 439.8 C587.6 444.7 586.5 449.9 585.1 455.3 C583.6 460.8 582.2 469.7 581.6 472.6 M624.7 408.8 C621.8 411.7 612 420.6 607.4 426.1 C602.9 431.5 599.7 436.7 597.1 441.6 C594.5 446.4 593.4 450.2 591.9 455.3 C590.5 460.5 589.1 469.7 588.5 472.6 M613.6 429.3 C613.6 429.2 613.4 428.9 613.4 428.7 C613.4 428.4 613.4 428.1 613.4 427.9 C613.4 427.6 613.5 427.4 613.6 427.1 C613.7 426.8 613.9 426.6 614.1 426.3 C614.3 426.1 614.5 425.8 614.7 425.6 C615 425.4 615.3 425.2 615.5 425.1 C615.8 424.9 616.1 424.7 616.4 424.6 C616.7 424.5 617.1 424.5 617.4 424.4 C617.7 424.4 618 424.4 618.3 424.4 C618.6 424.4 618.8 424.5 619.1 424.6 C619.3 424.7 619.5 424.8 619.7 425 C619.9 425.1 620.1 425.5 620.2 425.5 M614 429.8 L620.4 426.1 M540.3 428.6 C540 429.8 538.1 438.1 537.7 440.7 C537.3 443.3 535.8 452.3 536 454.4 C536.1 456.6 536.3 460.6 539.4 462.2 C542.5 463.7 563.7 469.4 567 469.9 C570.2 470.5 571.4 468.9 572.1 467.4 C572.9 465.8 574 456.8 574.4 454.4 C574.8 452.1 576.2 445.1 576.4 444.1 M536.8 466.5 L569.6 474.8 M552.7 465.9 C552.7 466 552.7 466.1 552.6 466.2 C552.5 466.2 552.4 466.3 552.2 466.3 C552.1 466.4 551.9 466.4 551.7 466.4 C551.5 466.4 551.3 466.4 551 466.4 C550.8 466.4 550.5 466.3 550.3 466.3 C550 466.3 549.7 466.2 549.5 466.1 C549.2 466.1 549 466 548.7 465.9 C548.5 465.8 548.2 465.7 548 465.6 C547.8 465.5 547.6 465.4 547.4 465.3 C547.3 465.2 547.1 465 547 464.9 C546.9 464.8 546.8 464.7 546.8 464.6 C546.7 464.5 546.7 464.4 546.8 464.3 C546.8 464.2 546.8 464.2 546.9 464.1 C547 464 547.1 464 547.3 463.9 C547.4 463.9 547.6 463.9 547.8 463.9 C548 463.8 548.3 463.8 548.5 463.9 C548.7 463.9 549 463.9 549.2 464 C549.5 464 549.8 464.1 550 464.1 C550.3 464.2 550.5 464.3 550.8 464.4 C551 464.5 551.3 464.6 551.5 464.7 C551.7 464.8 551.9 464.9 552.1 465 C552.2 465.1 552.4 465.2 552.5 465.3 C552.6 465.4 552.7 465.5 552.7 465.6 C552.8 465.7 552.8 465.8 552.7 465.9Z M545.4 475.1 L548.9 479.4 L554.1 476.8 L557.5 482 L560.9 479.4 M546.3 478.6 L550.6 482.9 L555.8 480.3 L560.1 485.4 M548 474.3 L549.8 485.4 M552.3 473.4 L553.2 486.3 M555.8 475.1 L557.5 487.2 M543.7 480.3 L562.7 482.9 M573 471.7 L547.2 500.9 L536.8 509.6 M576.4 479.4 L552.3 506.1 M583.3 485.4 L557.5 513.9 M560.9 488.9 L569.6 486.3 L566.1 490.6 M556.8 499.3 C556.4 499.7 556 500.2 555.6 500.6 C555.2 501 554.8 501.4 554.4 501.7 C554 502.1 553.6 502.4 553.2 502.6 C552.9 502.9 552.6 503.1 552.3 503.3 C552 503.4 551.8 503.5 551.6 503.5 C551.4 503.6 551.3 503.6 551.2 503.5 C551.1 503.4 551 503.3 551.1 503.1 C551.1 502.9 551.2 502.6 551.3 502.3 C551.4 502 551.6 501.7 551.8 501.3 C552 501 552.3 500.5 552.6 500.1 C552.9 499.7 553.2 499.2 553.6 498.8 C554 498.4 554.4 497.9 554.8 497.4 C555.2 497 555.6 496.6 556 496.1 C556.4 495.7 556.8 495.3 557.2 495 C557.6 494.7 558 494.3 558.3 494.1 C558.7 493.8 559 493.6 559.3 493.5 C559.5 493.3 559.8 493.2 560 493.2 C560.2 493.1 560.3 493.2 560.4 493.2 C560.5 493.3 560.5 493.5 560.5 493.7 C560.5 493.8 560.4 494.1 560.3 494.4 C560.2 494.7 560 495 559.8 495.4 C559.5 495.8 559.3 496.2 559 496.6 C558.7 497 558.3 497.5 558 497.9 C557.6 498.4 557.2 498.8 556.8 499.3Z M562 494.1 C561.6 494.6 561.2 495 560.7 495.4 C560.3 495.8 559.9 496.2 559.5 496.6 C559.1 496.9 558.8 497.2 558.4 497.5 C558.1 497.7 557.7 497.9 557.5 498.1 C557.2 498.2 556.9 498.3 556.8 498.4 C556.6 498.4 556.4 498.4 556.3 498.3 C556.2 498.2 556.2 498.1 556.2 497.9 C556.2 497.7 556.3 497.5 556.4 497.2 C556.6 496.9 556.7 496.5 557 496.2 C557.2 495.8 557.5 495.4 557.8 495 C558.1 494.5 558.4 494.1 558.8 493.6 C559.1 493.2 559.5 492.7 559.9 492.3 C560.3 491.8 560.7 491.4 561.2 491 C561.6 490.6 562 490.2 562.4 489.8 C562.8 489.5 563.1 489.2 563.5 488.9 C563.8 488.7 564.2 488.5 564.4 488.3 C564.7 488.2 564.9 488.1 565.1 488 C565.3 488 565.5 488 565.6 488.1 C565.6 488.2 565.7 488.3 565.7 488.5 C565.6 488.7 565.6 488.9 565.5 489.2 C565.3 489.5 565.1 489.9 564.9 490.2 C564.7 490.6 564.4 491 564.1 491.4 C563.8 491.9 563.5 492.3 563.1 492.8 C562.8 493.2 562.4 493.7 562 494.1Z M521.3 500.9 L536.8 485.4 L548.9 477.7 M526.5 506.1 L550.6 516.4 M527.4 509.6 L550.6 520.2 M528.2 521.6 L550.6 531.9 M521.3 506.1 L522.2 523.3 L524.8 556.1 L554.1 571.9 M523.9 523.3 L526.2 554.3 M550.6 516.4 L552.3 540.6 L554.1 571.9 M514.4 513.9 L523.1 516.4 M523.4 506.1 C523.4 506.3 523.4 506.5 523.3 506.6 C523.3 506.8 523.2 507 523.1 507.1 C523 507.3 522.9 507.4 522.8 507.6 C522.7 507.7 522.5 507.8 522.4 507.9 C522.2 508 522 508.1 521.9 508.1 C521.7 508.2 521.5 508.2 521.3 508.2 C521.2 508.2 521 508.2 520.8 508.1 C520.6 508.1 520.5 508 520.3 507.9 C520.1 507.8 520 507.7 519.9 507.6 C519.7 507.4 519.6 507.3 519.5 507.1 C519.5 507 519.4 506.8 519.3 506.6 C519.3 506.5 519.3 506.3 519.3 506.1 C519.3 505.9 519.3 505.8 519.3 505.6 C519.4 505.4 519.5 505.2 519.5 505.1 C519.6 504.9 519.7 504.8 519.9 504.7 C520 504.5 520.1 504.4 520.3 504.3 C520.5 504.2 520.6 504.2 520.8 504.1 C521 504.1 521.2 504 521.3 504 C521.5 504 521.7 504.1 521.9 504.1 C522 504.2 522.2 504.2 522.4 504.3 C522.5 504.4 522.7 504.5 522.8 504.7 C522.9 504.8 523 504.9 523.1 505.1 C523.2 505.2 523.3 505.4 523.3 505.6 C523.4 505.8 523.4 505.9 523.4 506.1Z M522.4 506.1 C522.4 506.2 522.4 506.3 522.3 506.4 C522.3 506.5 522.3 506.6 522.2 506.6 C522.2 506.7 522.1 506.8 522.1 506.8 C522 506.9 521.9 507 521.9 507 C521.8 507.1 521.7 507.1 521.6 507.1 C521.5 507.1 521.4 507.1 521.3 507.1 C521.2 507.1 521.2 507.1 521.1 507.1 C521 507.1 520.9 507.1 520.8 507 C520.7 507 520.7 506.9 520.6 506.8 C520.5 506.8 520.5 506.7 520.4 506.6 C520.4 506.6 520.4 506.5 520.3 506.4 C520.3 506.3 520.3 506.2 520.3 506.1 C520.3 506 520.3 505.9 520.3 505.8 C520.4 505.8 520.4 505.7 520.4 505.6 C520.5 505.5 520.5 505.4 520.6 505.4 C520.7 505.3 520.7 505.3 520.8 505.2 C520.9 505.2 521 505.1 521.1 505.1 C521.2 505.1 521.2 505.1 521.3 505.1 C521.4 505.1 521.5 505.1 521.6 505.1 C521.7 505.1 521.8 505.2 521.9 505.2 C521.9 505.3 522 505.3 522.1 505.4 C522.1 505.4 522.2 505.5 522.2 505.6 C522.3 505.7 522.3 505.8 522.3 505.8 C522.4 505.9 522.4 506 522.4 506.1Z M542.9 515.6 C542.9 515.7 542.8 515.8 542.8 515.9 C542.8 515.9 542.7 516 542.6 516.1 C542.6 516.2 542.5 516.3 542.4 516.3 C542.3 516.4 542.1 516.4 542 516.5 C541.9 516.5 541.7 516.6 541.6 516.6 C541.4 516.6 541.3 516.6 541.1 516.6 C541 516.6 540.8 516.6 540.7 516.6 C540.6 516.6 540.4 516.5 540.3 516.5 C540.2 516.4 540 516.4 539.9 516.3 C539.8 516.3 539.7 516.2 539.6 516.1 C539.6 516 539.5 515.9 539.5 515.9 C539.4 515.8 539.4 515.7 539.4 515.6 C539.4 515.5 539.4 515.4 539.5 515.3 C539.5 515.2 539.6 515.1 539.6 515.1 C539.7 515 539.8 514.9 539.9 514.9 C540 514.8 540.2 514.7 540.3 514.7 C540.4 514.6 540.6 514.6 540.7 514.6 C540.8 514.6 541 514.6 541.1 514.6 C541.3 514.6 541.4 514.6 541.6 514.6 C541.7 514.6 541.9 514.6 542 514.7 C542.1 514.7 542.3 514.8 542.4 514.9 C542.5 514.9 542.6 515 542.6 515.1 C542.7 515.1 542.8 515.2 542.8 515.3 C542.8 515.4 542.9 515.5 542.9 515.6Z M529.9 509.6 L536.8 507 L550.6 513 M523.1 500.9 L531.7 504.4 L552.3 513.9 M531.7 557.8 L536.8 559.8 L538.6 569.8 L550.6 575.3 L552.3 571.9 M533.4 562.9 L542 566.4 L542.9 571.6 M536.8 566.4 L548.9 571.6 M553.2 575.9 C553.2 576 553.2 576.2 553.1 576.3 C553.1 576.5 553 576.6 553 576.7 C552.9 576.9 552.8 577 552.7 577.1 C552.6 577.2 552.5 577.3 552.3 577.4 C552.2 577.4 552.1 577.5 551.9 577.5 C551.8 577.6 551.6 577.6 551.5 577.6 C551.3 577.6 551.2 577.6 551 577.5 C550.9 577.5 550.7 577.4 550.6 577.4 C550.5 577.3 550.4 577.2 550.3 577.1 C550.2 577 550.1 576.9 550 576.7 C549.9 576.6 549.8 576.5 549.8 576.3 C549.8 576.2 549.8 576 549.8 575.9 C549.8 575.7 549.8 575.6 549.8 575.4 C549.8 575.3 549.9 575.1 550 575 C550.1 574.9 550.2 574.8 550.3 574.6 C550.4 574.5 550.5 574.4 550.6 574.4 C550.7 574.3 550.9 574.2 551 574.2 C551.2 574.2 551.3 574.1 551.5 574.1 C551.6 574.1 551.8 574.2 551.9 574.2 C552.1 574.2 552.2 574.3 552.3 574.4 C552.5 574.4 552.6 574.5 552.7 574.6 C552.8 574.8 552.9 574.9 553 575 C553 575.1 553.1 575.3 553.1 575.4 C553.2 575.6 553.2 575.7 553.2 575.9Z M503.3 486.3 C503.6 485.4 505.5 483.3 507.6 483.7 C509.6 484.2 522.2 489.6 523.9 490.6 C525.7 491.6 525.2 493.4 525.1 494.1 C525 494.7 523.7 496.7 523.1 497.2 C522.4 497.6 520.6 498.8 518.8 498.4 C516.9 497.9 505.7 493.5 504.1 492.3 C502.6 491.1 502.9 487.2 503.3 486.3Z M505.8 487.2 C506.9 487.4 520.4 493.1 521.3 493.7 C522.3 494.3 521.5 496.8 520.5 496.6 C519.4 496.4 506.5 491.2 505.5 490.6 C504.5 490 504.8 487 505.8 487.2Z M523.9 496.6 L536.8 488.5 L539.9 489.2 M525.1 498.4 L537.7 490.6 M490.3 517.8 C490.6 515.9 491.1 509.5 492.1 506.1 C493.1 502.7 494.5 499.9 496.4 497.5 C498.2 495.1 502.1 492.5 503.3 491.5 M514.4 482.3 C515.9 481.7 520.2 479.2 523.1 478.6 C525.9 477.9 529.2 477.6 531.7 478.6 C534.1 479.5 536.7 483.2 537.7 484.1 M497.2 516.4 C497.5 514.7 497.8 509.4 498.9 506.1 C500.1 502.8 502.4 498.7 504.1 496.6 C505.8 494.6 508.1 494.5 508.9 494.1 M498.9 510.4 C498.9 509.4 500.8 502.3 501.5 500.9 C502.2 499.6 505.2 496.9 505.8 496.6 C506.5 496.4 508.1 497.6 507.9 498.4 C507.7 499.1 504.4 503.1 503.8 504.4 C503.1 505.7 502.2 511 501.7 511.6 C501.2 512.2 499 511.5 498.9 510.4Z M517.9 480.3 C519 480.3 522.5 480.2 524.8 480.6 C527.1 481.1 529.9 481.8 531.7 482.9 C533.4 484 534.5 486.5 535.1 487.2 M490.3 517.8 L497.2 516.4 L514.4 519 M552.3 516.4 C552.7 516.2 554.7 514.1 555.8 513.9 C556.8 513.6 561.5 513.6 562.7 513.9 C563.9 514.1 567.2 515.5 567.8 516.4 C568.4 517.4 569 522 568.7 523.3 C568.4 524.7 564.9 528.5 564.4 530.2 C563.9 531.9 563.5 538.5 563.5 540.6 C563.5 542.6 563.4 548.7 564.4 550.9 C565.3 553.1 572.1 560.5 573 562.9 C574 565.4 573.8 573.8 573.9 575 M562.2 519.9 C562.2 520.2 562.1 520.4 562.1 520.7 C562 521 561.9 521.2 561.8 521.4 C561.7 521.7 561.6 521.9 561.4 522.1 C561.2 522.3 561.1 522.4 560.9 522.6 C560.7 522.7 560.5 522.8 560.2 522.9 C560 523 559.8 523 559.6 523 C559.3 523 559.1 523 558.9 522.9 C558.7 522.8 558.5 522.7 558.3 522.6 C558.1 522.4 557.9 522.3 557.7 522.1 C557.6 521.9 557.4 521.7 557.3 521.4 C557.2 521.2 557.1 521 557.1 520.7 C557 520.4 557 520.2 557 519.9 C557 519.6 557 519.3 557.1 519.1 C557.1 518.8 557.2 518.6 557.3 518.3 C557.4 518.1 557.6 517.9 557.7 517.7 C557.9 517.5 558.1 517.3 558.3 517.2 C558.5 517.1 558.7 517 558.9 516.9 C559.1 516.8 559.3 516.8 559.6 516.8 C559.8 516.8 560 516.8 560.2 516.9 C560.5 517 560.7 517.1 560.9 517.2 C561.1 517.3 561.2 517.5 561.4 517.7 C561.6 517.9 561.7 518.1 561.8 518.3 C561.9 518.6 562 518.8 562.1 519.1 C562.1 519.3 562.2 519.6 562.2 519.9Z M561.1 519.9 C561.1 520.1 561.1 520.2 561.1 520.4 C561 520.5 561 520.7 560.9 520.8 C560.8 521 560.8 521.1 560.7 521.2 C560.6 521.3 560.5 521.5 560.3 521.5 C560.2 521.6 560.1 521.7 560 521.7 C559.8 521.8 559.7 521.8 559.6 521.8 C559.4 521.8 559.3 521.8 559.2 521.7 C559 521.7 558.9 521.6 558.8 521.5 C558.7 521.5 558.6 521.3 558.5 521.2 C558.4 521.1 558.3 521 558.2 520.8 C558.2 520.7 558.1 520.5 558.1 520.4 C558 520.2 558 520.1 558 519.9 C558 519.7 558 519.6 558.1 519.4 C558.1 519.2 558.2 519.1 558.2 518.9 C558.3 518.8 558.4 518.7 558.5 518.6 C558.6 518.4 558.7 518.3 558.8 518.3 C558.9 518.2 559 518.1 559.2 518.1 C559.3 518 559.4 518 559.6 518 C559.7 518 559.8 518 560 518.1 C560.1 518.1 560.2 518.2 560.3 518.3 C560.5 518.3 560.6 518.4 560.7 518.6 C560.8 518.7 560.8 518.8 560.9 518.9 C561 519.1 561 519.2 561.1 519.4 C561.1 519.6 561.1 519.7 561.1 519.9Z M562.3 528.5 L579 531.6 M562.3 531.1 L579 534 M563.2 529.9 C563.2 530.1 563.2 530.2 563.1 530.4 C563.1 530.6 563.1 530.8 563 530.9 C562.9 531.1 562.9 531.2 562.8 531.3 C562.7 531.5 562.6 531.6 562.5 531.7 C562.4 531.8 562.3 531.8 562.2 531.9 C562.1 531.9 561.9 531.9 561.8 531.9 C561.7 531.9 561.6 531.9 561.5 531.9 C561.3 531.8 561.2 531.8 561.1 531.7 C561 531.6 560.9 531.5 560.8 531.3 C560.8 531.2 560.7 531.1 560.6 530.9 C560.6 530.8 560.5 530.6 560.5 530.4 C560.4 530.2 560.4 530.1 560.4 529.9 C560.4 529.7 560.4 529.5 560.5 529.3 C560.5 529.2 560.6 529 560.6 528.8 C560.7 528.7 560.8 528.5 560.8 528.4 C560.9 528.3 561 528.2 561.1 528.1 C561.2 528 561.3 527.9 561.5 527.9 C561.6 527.8 561.7 527.8 561.8 527.8 C561.9 527.8 562.1 527.8 562.2 527.9 C562.3 527.9 562.4 528 562.5 528.1 C562.6 528.2 562.7 528.3 562.8 528.4 C562.9 528.5 562.9 528.7 563 528.8 C563.1 529 563.1 529.2 563.1 529.3 C563.2 529.5 563.2 529.7 563.2 529.9Z M567.8 516.4 C567.9 515.1 567.8 504.7 568.7 502.7 C569.6 500.6 575 497.4 576.4 495.8 C577.9 494.1 582.2 487.5 583.3 486.3 C584.5 485.1 587 483.5 587.6 483.7 C588.3 484 590.1 487.5 590.2 488.9 C590.3 490.3 589.4 495.8 588.5 497.5 C587.6 499.2 582.8 504.5 581.6 506.1 C580.4 507.8 577.7 512.1 576.4 513.9 C575.2 515.6 569.5 522.4 568.7 523.3 M578.5 500.5 C578.4 500.8 578.2 501.1 578 501.3 C577.9 501.5 577.7 501.8 577.5 501.9 C577.3 502.1 577.1 502.3 576.9 502.4 C576.6 502.6 576.4 502.7 576.2 502.7 C576 502.8 575.8 502.8 575.6 502.8 C575.4 502.8 575.2 502.8 575 502.7 C574.8 502.6 574.7 502.5 574.5 502.3 C574.4 502.2 574.3 502 574.2 501.8 C574.1 501.6 574 501.4 574 501.1 C573.9 500.9 573.9 500.6 574 500.3 C574 500 574 499.7 574.1 499.5 C574.2 499.2 574.3 498.9 574.4 498.6 C574.5 498.4 574.7 498.1 574.9 497.8 C575 497.6 575.2 497.4 575.4 497.2 C575.6 497 575.8 496.8 576 496.7 C576.3 496.6 576.5 496.5 576.7 496.4 C576.9 496.3 577.1 496.3 577.3 496.3 C577.5 496.3 577.7 496.4 577.9 496.4 C578.1 496.5 578.2 496.7 578.4 496.8 C578.5 496.9 578.6 497.1 578.7 497.3 C578.8 497.5 578.9 497.8 578.9 498 C578.9 498.3 579 498.6 578.9 498.8 C578.9 499.1 578.9 499.4 578.8 499.7 C578.7 500 578.6 500.2 578.5 500.5Z M569.1 505.2 C569.1 505.3 569 505.4 568.9 505.5 C568.8 505.6 568.8 505.7 568.7 505.8 C568.6 505.9 568.5 506 568.4 506 C568.3 506.1 568.2 506.1 568.1 506.2 C568 506.2 567.9 506.2 567.8 506.2 C567.7 506.2 567.6 506.2 567.5 506.1 C567.4 506.1 567.4 506 567.3 506 C567.2 505.9 567.2 505.8 567.1 505.7 C567.1 505.6 567.1 505.5 567.1 505.4 C567 505.3 567 505.2 567 505.1 C567.1 504.9 567.1 504.8 567.1 504.7 C567.1 504.6 567.2 504.4 567.2 504.3 C567.3 504.2 567.4 504.1 567.4 504 C567.5 503.8 567.6 503.7 567.7 503.7 C567.8 503.6 567.9 503.5 568 503.4 C568.1 503.4 568.2 503.3 568.3 503.3 C568.4 503.3 568.5 503.3 568.6 503.3 C568.7 503.3 568.8 503.3 568.8 503.3 C568.9 503.4 569 503.4 569.1 503.5 C569.1 503.6 569.2 503.6 569.2 503.7 C569.3 503.8 569.3 503.9 569.3 504.1 C569.3 504.2 569.3 504.3 569.3 504.4 C569.3 504.5 569.3 504.7 569.3 504.8 C569.2 504.9 569.2 505.1 569.1 505.2Z M582.5 511.4 C582.4 511.5 582.3 511.7 582.2 511.8 C582.1 512 581.9 512.1 581.8 512.2 C581.6 512.3 581.4 512.4 581.2 512.5 C581 512.5 580.8 512.6 580.6 512.6 C580.4 512.6 580.1 512.6 579.9 512.5 C579.6 512.5 579.4 512.4 579.2 512.4 C579 512.3 578.7 512.2 578.5 512.1 C578.3 511.9 578.1 511.8 578 511.6 C577.8 511.5 577.7 511.3 577.6 511.1 C577.4 511 577.4 510.8 577.3 510.6 C577.2 510.4 577.2 510.2 577.2 510 C577.2 509.8 577.2 509.6 577.3 509.5 C577.4 509.3 577.5 509.1 577.6 509 C577.7 508.9 577.8 508.7 578 508.6 C578.2 508.5 578.4 508.4 578.6 508.4 C578.8 508.3 579 508.3 579.2 508.3 C579.4 508.3 579.7 508.3 579.9 508.3 C580.1 508.3 580.4 508.4 580.6 508.5 C580.8 508.6 581 508.7 581.2 508.8 C581.4 508.9 581.6 509.1 581.8 509.2 C582 509.4 582.1 509.5 582.2 509.7 C582.3 509.9 582.4 510.1 582.5 510.3 C582.5 510.5 582.6 510.6 582.6 510.8 C582.6 511 582.5 511.2 582.5 511.4Z M587.8 507 C587.8 507.1 587.8 507.2 587.8 507.3 C587.7 507.4 587.7 507.5 587.6 507.6 C587.6 507.7 587.5 507.8 587.4 507.8 C587.3 507.9 587.2 508 587.1 508 C587 508.1 586.9 508.1 586.8 508.1 C586.7 508.2 586.6 508.2 586.4 508.2 C586.3 508.2 586.2 508.2 586.1 508.1 C586 508.1 585.9 508.1 585.7 508 C585.6 508 585.5 507.9 585.5 507.8 C585.4 507.8 585.3 507.7 585.2 507.6 C585.2 507.5 585.1 507.4 585.1 507.3 C585.1 507.2 585.1 507.1 585.1 507 C585.1 506.9 585.1 506.8 585.1 506.7 C585.1 506.6 585.2 506.5 585.2 506.4 C585.3 506.3 585.4 506.2 585.5 506.1 C585.5 506 585.6 506 585.7 505.9 C585.9 505.9 586 505.8 586.1 505.8 C586.2 505.8 586.3 505.8 586.4 505.8 C586.6 505.8 586.7 505.8 586.8 505.8 C586.9 505.8 587 505.9 587.1 505.9 C587.2 506 587.3 506 587.4 506.1 C587.5 506.2 587.6 506.3 587.6 506.4 C587.7 506.5 587.7 506.6 587.8 506.7 C587.8 506.8 587.8 506.9 587.8 507Z M576.4 488.9 L583.3 482 L586.8 476.8 M564.4 486.3 L569.6 488 M567.8 485.4 C567.8 485.5 567.8 485.6 567.8 485.7 C567.7 485.8 567.7 485.9 567.6 486 C567.5 486 567.4 486.1 567.3 486.2 C567.2 486.2 567.1 486.3 567 486.3 C566.8 486.4 566.7 486.4 566.6 486.4 C566.4 486.5 566.3 486.5 566.1 486.5 C566 486.5 565.8 486.5 565.7 486.4 C565.5 486.4 565.4 486.4 565.3 486.3 C565.1 486.3 565 486.2 564.9 486.2 C564.8 486.1 564.7 486 564.6 486 C564.5 485.9 564.5 485.8 564.5 485.7 C564.4 485.6 564.4 485.5 564.4 485.4 C564.4 485.4 564.4 485.3 564.5 485.2 C564.5 485.1 564.5 485 564.6 484.9 C564.7 484.9 564.8 484.8 564.9 484.7 C565 484.7 565.1 484.6 565.3 484.6 C565.4 484.5 565.5 484.5 565.7 484.4 C565.8 484.4 566 484.4 566.1 484.4 C566.3 484.4 566.4 484.4 566.6 484.4 C566.7 484.5 566.8 484.5 567 484.6 C567.1 484.6 567.2 484.7 567.3 484.7 C567.4 484.8 567.5 484.9 567.6 484.9 C567.7 485 567.7 485.1 567.8 485.2 C567.8 485.3 567.8 485.4 567.8 485.4Z M576.4 513.9 C577.6 512.6 579.3 508.7 583.3 506.1 C587.4 503.5 595.1 500.3 600.6 498.4 C606 496.4 611.5 494.8 616.1 494.4 C620.7 494 626.1 495.6 628.1 495.8 M564.4 540.6 C565.3 541.7 567.5 545.7 569.6 547.4 C571.6 549.2 574.2 550.4 576.4 551.2 C578.7 552.1 580.8 553 583.3 552.6 C585.9 552.2 590.5 549.5 591.9 548.8 M573 562.9 C574.7 562.1 580.5 559.5 583.3 558.1 C586.2 556.7 589.1 555.3 590.2 554.7 M566.1 526.8 C566.7 527.4 567.3 529.1 569.6 530.2 C571.9 531.4 578.2 533.1 579.9 533.7 M579 529.4 C579.3 528.5 581.1 526.4 583 526.8 C584.8 527.2 595.9 532.1 597.5 533.3 C599 534.5 599.1 538 598.8 538.8 C598.5 539.6 596.3 541.8 594.5 541.4 C592.7 541 582.3 536.3 580.8 535 C579.2 533.8 578.8 530.2 579 529.4Z M581.6 530.2 C582.6 530.5 594.5 536.2 595.4 536.8 C596.3 537.4 595.5 539.4 594.5 539.2 C593.6 538.9 582.1 533.4 581.3 532.8 C580.4 532.2 580.7 530 581.6 530.2Z M583 572.4 C583.3 570.8 583.6 566.5 585.1 562.9 C586.6 559.4 588.8 554.5 591.9 550.9 C595.1 547.3 599.1 543.6 604 541.4 C608.9 539.3 615.2 538.1 621.2 538 C627.2 537.8 634.8 539 640 540.6 C645.2 542.1 650.2 546.3 652.2 547.4 M590.2 569 C590.8 567.5 591.9 563.2 593.7 560.4 C595.4 557.5 597.7 554.1 600.6 551.8 C603.4 549.5 606.9 547.8 610.9 546.6 C614.9 545.4 619.8 544.3 624.7 544.3 C629.5 544.3 635.7 545.2 640 546.6 C644.3 548 648.8 551.6 650.5 552.6 M583 572.4 C583.6 572.6 585.6 574.2 586.8 573.6 C588 573.1 589.7 569.8 590.2 569 M592.8 566.4 C592.8 565.5 595 560.5 595.7 559.5 C596.5 558.5 599.9 556.2 600.6 556.1 C601.2 555.9 602.8 557.2 602.6 557.8 C602.5 558.4 599.5 561.1 598.8 562.1 C598.1 563.1 596.3 567.7 595.7 568.1 C595.1 568.5 592.8 567.3 592.8 566.4Z M601.4 527.6 C601.9 526.7 602.1 523.4 604 522 C605.9 520.5 608.6 519.6 612.6 519 C616.6 518.5 624.4 518.1 628.1 518.5 C631.8 518.9 633.7 519.7 635 521.6 C636.3 523.6 635.7 528.8 635.9 530.2 M604.9 521.6 C605.1 522.3 605.9 524.2 606.2 525.9 C606.6 527.6 606.8 530.9 606.9 531.9 M607.3 521.5 C607.5 522.2 608.3 524.1 608.7 525.9 C609 527.7 609.2 531.2 609.3 532.2 M609.7 521.3 C609.9 522.1 610.7 524.1 611.1 525.9 C611.4 527.8 611.6 531.4 611.8 532.5 M612.1 521.2 C612.3 522 613.1 524 613.5 525.9 C613.8 527.8 614.1 531.6 614.2 532.7 M614.5 521.1 C614.7 521.9 615.5 523.9 615.9 525.9 C616.2 527.9 616.5 531.8 616.6 533 M616.9 520.9 C617.2 521.8 618 523.9 618.3 525.9 C618.6 528 618.9 532 619 533.2 M619.3 520.8 C619.6 521.6 620.4 523.8 620.7 525.9 C621.1 528 621.3 532.2 621.4 533.5 M621.7 520.7 C622 521.5 622.8 523.7 623.1 525.9 C623.5 528.1 623.7 532.5 623.8 533.8 M624.2 520.5 C624.4 521.4 625.2 523.7 625.5 525.9 C625.9 528.2 626.1 532.7 626.2 534 M626.6 520.4 C626.8 521.3 627.6 523.6 627.9 525.9 C628.3 528.2 628.5 532.9 628.6 534.3 M629 520.2 C629.2 521.2 630 523.5 630.4 525.9 C630.7 528.3 630.9 533.1 631 534.5 M631.4 520.1 C631.6 521.1 632.4 523.5 632.8 525.9 C633.1 528.4 633.3 533.3 633.5 534.8 M600.6 528.5 C601.7 529.4 604.6 531.9 607.4 533.7 C610.3 535.4 616.1 538 617.8 538.8 M648.3 589.8 C647.7 591.9 647 594.1 646.1 596 C645.2 598 644 599.9 642.8 601.6 C641.6 603.3 640.2 604.8 638.7 606 C637.3 607.3 635.7 608.3 634.1 609.1 C632.5 609.8 630.9 610.3 629.3 610.5 C627.7 610.7 626 610.6 624.5 610.2 C623 609.8 621.5 609.2 620.2 608.2 C618.9 607.3 617.6 606.1 616.6 604.7 C615.5 603.3 614.6 601.6 613.9 599.9 C613.2 598.1 612.7 596.1 612.4 594 C612.1 592 612 589.8 612.2 587.6 C612.3 585.4 612.6 583.2 613.2 581 C613.7 578.9 614.5 576.7 615.4 574.7 C616.3 572.8 617.4 570.9 618.6 569.2 C619.8 567.5 621.2 566 622.7 564.8 C624.1 563.5 625.7 562.5 627.3 561.7 C628.9 561 630.5 560.5 632.1 560.3 C633.7 560.1 635.4 560.2 636.9 560.6 C638.4 561 639.9 561.6 641.2 562.6 C642.6 563.5 643.8 564.7 644.8 566.1 C645.9 567.5 646.8 569.2 647.5 570.9 C648.2 572.7 648.7 574.7 649 576.8 C649.3 578.8 649.4 581 649.3 583.2 C649.1 585.4 648.8 587.6 648.3 589.8Z M646.1 589.1 C645.6 591 644.9 593 644.1 594.9 C643.3 596.7 642.3 598.4 641.2 600 C640 601.5 638.8 602.9 637.5 604.1 C636.2 605.2 634.7 606.2 633.3 606.9 C631.9 607.6 630.4 608 628.9 608.2 C627.5 608.4 626 608.3 624.6 608 C623.3 607.6 621.9 607 620.7 606.2 C619.5 605.3 618.4 604.2 617.5 602.9 C616.6 601.7 615.7 600.1 615.1 598.5 C614.5 596.9 614.1 595 613.8 593.1 C613.5 591.3 613.5 589.2 613.6 587.2 C613.7 585.3 614 583.2 614.5 581.2 C615 579.2 615.7 577.2 616.5 575.4 C617.4 573.6 618.4 571.9 619.5 570.3 C620.6 568.8 621.9 567.4 623.2 566.2 C624.5 565.1 625.9 564.1 627.4 563.4 C628.8 562.7 630.3 562.2 631.7 562.1 C633.2 561.9 634.7 562 636 562.3 C637.4 562.6 638.7 563.3 639.9 564.1 C641.1 564.9 642.2 566.1 643.1 567.3 C644.1 568.6 644.9 570.1 645.5 571.8 C646.1 573.4 646.6 575.3 646.8 577.1 C647.1 579 647.2 581 647.1 583 C646.9 585 646.6 587.1 646.1 589.1Z M642.3 587.9 C641.9 589.5 641.3 591.2 640.7 592.7 C640 594.2 639.2 595.6 638.3 596.9 C637.4 598.2 636.3 599.4 635.3 600.3 C634.2 601.3 633.1 602.1 631.9 602.7 C630.8 603.2 629.6 603.6 628.4 603.8 C627.2 603.9 626.1 603.9 625 603.6 C623.9 603.3 622.8 602.8 621.9 602.2 C620.9 601.5 620 600.6 619.3 599.5 C618.5 598.5 617.9 597.2 617.4 595.9 C616.9 594.5 616.6 593 616.4 591.5 C616.2 589.9 616.1 588.2 616.3 586.6 C616.4 584.9 616.6 583.2 617 581.6 C617.4 580 618 578.3 618.7 576.8 C619.4 575.3 620.2 573.9 621.1 572.6 C622 571.3 623 570.1 624.1 569.2 C625.1 568.2 626.3 567.4 627.4 566.8 C628.6 566.3 629.8 565.9 630.9 565.7 C632.1 565.6 633.3 565.6 634.4 565.9 C635.5 566.2 636.5 566.7 637.5 567.4 C638.4 568 639.3 568.9 640.1 570 C640.8 571 641.5 572.3 641.9 573.6 C642.4 575 642.8 576.5 643 578.1 C643.2 579.6 643.2 581.3 643.1 582.9 C643 584.6 642.7 586.3 642.3 587.9Z M641.4 587.3 C641 588.9 640.4 590.4 639.8 591.9 C639.2 593.3 638.4 594.7 637.5 595.9 C636.7 597.1 635.7 598.2 634.7 599.1 C633.7 600 632.6 600.8 631.5 601.3 C630.4 601.9 629.3 602.2 628.2 602.4 C627.1 602.5 626 602.5 625 602.2 C623.9 602 622.9 601.5 622 600.9 C621.1 600.2 620.3 599.3 619.6 598.4 C618.9 597.4 618.3 596.2 617.8 594.9 C617.4 593.6 617 592.2 616.9 590.7 C616.7 589.3 616.6 587.7 616.7 586.1 C616.8 584.6 617.1 582.9 617.5 581.4 C617.9 579.8 618.4 578.3 619 576.9 C619.7 575.4 620.5 574.1 621.3 572.9 C622.2 571.6 623.1 570.5 624.1 569.6 C625.1 568.7 626.2 568 627.3 567.4 C628.4 566.9 629.5 566.5 630.6 566.3 C631.7 566.2 632.8 566.2 633.9 566.5 C634.9 566.8 635.9 567.2 636.8 567.9 C637.7 568.5 638.5 569.4 639.2 570.4 C639.9 571.4 640.5 572.6 641 573.8 C641.5 575.1 641.8 576.5 642 578 C642.2 579.5 642.2 581.1 642.1 582.6 C642 584.2 641.7 585.8 641.4 587.3Z M635.8 585.6 C635.6 586.5 635.3 587.3 634.9 588.1 C634.5 588.9 634.1 589.7 633.6 590.3 C633.1 591 632.6 591.6 632 592.1 C631.4 592.6 630.8 593 630.1 593.3 C629.5 593.6 628.8 593.8 628.2 593.9 C627.6 594 626.9 593.9 626.3 593.8 C625.7 593.6 625.1 593.4 624.6 593 C624 592.6 623.5 592.1 623.1 591.6 C622.7 591 622.3 590.3 622.1 589.6 C621.8 588.9 621.6 588.1 621.5 587.3 C621.3 586.5 621.3 585.6 621.4 584.7 C621.4 583.9 621.5 583 621.8 582.1 C622 581.2 622.3 580.4 622.6 579.6 C623 578.8 623.4 578 623.9 577.4 C624.4 576.7 625 576.1 625.6 575.6 C626.1 575.1 626.8 574.7 627.4 574.4 C628 574.1 628.7 573.9 629.3 573.8 C630 573.7 630.6 573.8 631.2 573.9 C631.9 574.1 632.5 574.3 633 574.7 C633.5 575.1 634 575.6 634.4 576.1 C634.8 576.7 635.2 577.4 635.5 578.1 C635.8 578.8 636 579.6 636.1 580.4 C636.2 581.2 636.2 582.1 636.2 583 C636.1 583.8 636 584.7 635.8 585.6Z M634.8 584.2 C634.7 584.7 634.5 585.3 634.3 585.8 C634 586.3 633.8 586.8 633.4 587.2 C633.1 587.7 632.8 588.1 632.4 588.4 C632.1 588.7 631.6 589 631.3 589.2 C630.9 589.4 630.4 589.5 630 589.6 C629.6 589.6 629.2 589.6 628.8 589.5 C628.5 589.4 628.1 589.3 627.8 589 C627.4 588.8 627.1 588.5 626.9 588.1 C626.6 587.8 626.4 587.3 626.2 586.9 C626 586.4 625.9 585.9 625.8 585.4 C625.8 584.8 625.8 584.2 625.8 583.7 C625.8 583.1 625.9 582.5 626.1 582 C626.2 581.4 626.4 580.9 626.6 580.3 C626.9 579.8 627.1 579.3 627.5 578.9 C627.8 578.5 628.1 578.1 628.5 577.7 C628.9 577.4 629.3 577.1 629.7 576.9 C630 576.7 630.5 576.6 630.9 576.6 C631.3 576.5 631.7 576.5 632.1 576.6 C632.4 576.7 632.8 576.9 633.1 577.1 C633.5 577.4 633.8 577.7 634 578 C634.3 578.4 634.5 578.8 634.7 579.3 C634.9 579.7 635 580.3 635.1 580.8 C635.1 581.3 635.1 581.9 635.1 582.5 C635.1 583 635 583.6 634.8 584.2Z M634 583.9 C633.8 584.4 633.7 584.9 633.5 585.3 C633.3 585.7 633.1 586.1 632.8 586.4 C632.6 586.8 632.3 587.1 632 587.4 C631.7 587.6 631.4 587.9 631.1 588 C630.8 588.2 630.4 588.3 630.1 588.3 C629.8 588.4 629.5 588.4 629.2 588.3 C628.8 588.2 628.6 588.1 628.3 587.9 C628 587.7 627.8 587.4 627.6 587.1 C627.4 586.9 627.2 586.5 627.1 586.1 C626.9 585.8 626.8 585.3 626.8 584.9 C626.7 584.5 626.7 584 626.7 583.6 C626.8 583.1 626.8 582.6 626.9 582.2 C627.1 581.7 627.2 581.3 627.4 580.9 C627.6 580.5 627.8 580.1 628.1 579.7 C628.3 579.4 628.6 579 628.9 578.8 C629.2 578.5 629.5 578.3 629.8 578.1 C630.1 578 630.5 577.9 630.8 577.8 C631.1 577.8 631.4 577.8 631.8 577.9 C632.1 577.9 632.4 578.1 632.6 578.3 C632.9 578.5 633.1 578.7 633.3 579 C633.5 579.3 633.7 579.6 633.9 580 C634 580.4 634.1 580.8 634.1 581.2 C634.2 581.7 634.2 582.1 634.2 582.6 C634.1 583 634.1 583.5 634 583.9Z M626.4 573.8 C626.4 573.9 626.4 574 626.4 574.1 C626.4 574.2 626.3 574.3 626.3 574.4 C626.2 574.4 626.2 574.5 626.1 574.6 C626 574.7 626 574.7 625.9 574.8 C625.8 574.8 625.7 574.9 625.6 574.9 C625.5 574.9 625.4 574.9 625.3 574.9 C625.2 574.9 625.1 574.9 625 574.9 C624.9 574.9 624.8 574.8 624.7 574.8 C624.6 574.7 624.5 574.7 624.5 574.6 C624.4 574.5 624.3 574.4 624.3 574.4 C624.2 574.3 624.2 574.2 624.2 574.1 C624.1 574 624.1 573.9 624.1 573.8 C624.1 573.7 624.1 573.6 624.2 573.5 C624.2 573.4 624.2 573.3 624.3 573.2 C624.3 573.1 624.4 573 624.5 573 C624.5 572.9 624.6 572.8 624.7 572.8 C624.8 572.7 624.9 572.7 625 572.6 C625.1 572.6 625.2 572.6 625.3 572.6 C625.4 572.6 625.5 572.6 625.6 572.6 C625.7 572.7 625.8 572.7 625.9 572.8 C626 572.8 626 572.9 626.1 573 C626.2 573 626.2 573.1 626.3 573.2 C626.3 573.3 626.4 573.4 626.4 573.5 C626.4 573.6 626.4 573.7 626.4 573.8Z M625.8 573.8 C625.8 573.8 625.8 573.9 625.8 573.9 C625.8 573.9 625.8 574 625.7 574 C625.7 574.1 625.7 574.1 625.7 574.1 C625.6 574.2 625.6 574.2 625.5 574.2 C625.5 574.2 625.5 574.3 625.4 574.3 C625.4 574.3 625.3 574.3 625.3 574.3 C625.2 574.3 625.2 574.3 625.2 574.3 C625.1 574.3 625.1 574.2 625 574.2 C625 574.2 625 574.2 624.9 574.1 C624.9 574.1 624.9 574.1 624.8 574 C624.8 574 624.8 573.9 624.8 573.9 C624.8 573.9 624.8 573.8 624.8 573.8 C624.8 573.7 624.8 573.7 624.8 573.6 C624.8 573.6 624.8 573.6 624.8 573.5 C624.9 573.5 624.9 573.4 624.9 573.4 C625 573.4 625 573.3 625 573.3 C625.1 573.3 625.1 573.3 625.2 573.3 C625.2 573.3 625.2 573.3 625.3 573.3 C625.3 573.3 625.4 573.3 625.4 573.3 C625.5 573.3 625.5 573.3 625.5 573.3 C625.6 573.3 625.6 573.4 625.7 573.4 C625.7 573.4 625.7 573.5 625.7 573.5 C625.8 573.6 625.8 573.6 625.8 573.6 C625.8 573.7 625.8 573.7 625.8 573.8Z M626.1 573.8 C626.1 573.8 626.1 573.9 626 574 C626 574 626 574.1 626 574.2 C625.9 574.2 625.9 574.3 625.8 574.3 C625.8 574.4 625.7 574.4 625.7 574.4 C625.6 574.5 625.6 574.5 625.5 574.5 C625.4 574.5 625.4 574.5 625.3 574.5 C625.2 574.5 625.1 574.5 625.1 574.5 C625 574.5 625 574.5 624.9 574.4 C624.8 574.4 624.8 574.4 624.7 574.3 C624.7 574.3 624.6 574.2 624.6 574.2 C624.6 574.1 624.6 574 624.5 574 C624.5 573.9 624.5 573.8 624.5 573.8 C624.5 573.7 624.5 573.6 624.5 573.6 C624.6 573.5 624.6 573.4 624.6 573.4 C624.6 573.3 624.7 573.3 624.7 573.2 C624.8 573.2 624.8 573.1 624.9 573.1 C625 573.1 625 573 625.1 573 C625.1 573 625.2 573 625.3 573 C625.4 573 625.4 573 625.5 573 C625.6 573 625.6 573.1 625.7 573.1 C625.7 573.1 625.8 573.2 625.8 573.2 C625.9 573.3 625.9 573.3 626 573.4 C626 573.4 626 573.5 626 573.6 C626.1 573.6 626.1 573.7 626.1 573.8Z M631.2 573.1 C631.2 573.2 631.2 573.3 631.2 573.4 C631.2 573.5 631.1 573.6 631.1 573.7 C631 573.8 631 573.9 630.9 573.9 C630.8 574 630.7 574.1 630.6 574.1 C630.6 574.2 630.5 574.2 630.4 574.2 C630.3 574.3 630.2 574.3 630.1 574.3 C630 574.3 629.9 574.3 629.8 574.2 C629.7 574.2 629.6 574.2 629.5 574.1 C629.4 574.1 629.3 574 629.2 573.9 C629.2 573.9 629.1 573.8 629.1 573.7 C629 573.6 629 573.5 628.9 573.4 C628.9 573.3 628.9 573.2 628.9 573.1 C628.9 573 628.9 572.9 628.9 572.8 C629 572.7 629 572.6 629.1 572.5 C629.1 572.5 629.2 572.4 629.2 572.3 C629.3 572.2 629.4 572.2 629.5 572.1 C629.6 572.1 629.7 572 629.8 572 C629.9 572 630 572 630.1 572 C630.2 572 630.3 572 630.4 572 C630.5 572 630.6 572.1 630.6 572.1 C630.7 572.2 630.8 572.2 630.9 572.3 C631 572.4 631 572.5 631.1 572.5 C631.1 572.6 631.2 572.7 631.2 572.8 C631.2 572.9 631.2 573 631.2 573.1Z M630.6 573.1 C630.6 573.2 630.6 573.2 630.6 573.3 C630.6 573.3 630.5 573.3 630.5 573.4 C630.5 573.4 630.5 573.5 630.4 573.5 C630.4 573.5 630.4 573.6 630.3 573.6 C630.3 573.6 630.2 573.6 630.2 573.6 C630.2 573.6 630.1 573.6 630.1 573.6 C630 573.6 630 573.6 629.9 573.6 C629.9 573.6 629.8 573.6 629.8 573.6 C629.8 573.6 629.7 573.5 629.7 573.5 C629.7 573.5 629.6 573.4 629.6 573.4 C629.6 573.3 629.6 573.3 629.6 573.3 C629.6 573.2 629.5 573.2 629.5 573.1 C629.5 573.1 629.6 573 629.6 573 C629.6 573 629.6 572.9 629.6 572.9 C629.6 572.8 629.7 572.8 629.7 572.8 C629.7 572.7 629.8 572.7 629.8 572.7 C629.8 572.7 629.9 572.6 629.9 572.6 C630 572.6 630 572.6 630.1 572.6 C630.1 572.6 630.2 572.6 630.2 572.6 C630.2 572.6 630.3 572.7 630.3 572.7 C630.4 572.7 630.4 572.7 630.4 572.8 C630.5 572.8 630.5 572.8 630.5 572.9 C630.5 572.9 630.6 573 630.6 573 C630.6 573 630.6 573.1 630.6 573.1Z M630.8 573.1 C630.8 573.2 630.8 573.3 630.8 573.3 C630.8 573.4 630.8 573.5 630.7 573.5 C630.7 573.6 630.7 573.6 630.6 573.7 C630.6 573.7 630.5 573.8 630.5 573.8 C630.4 573.8 630.3 573.9 630.3 573.9 C630.2 573.9 630.1 573.9 630.1 573.9 C630 573.9 629.9 573.9 629.9 573.9 C629.8 573.9 629.7 573.8 629.7 573.8 C629.6 573.8 629.6 573.7 629.5 573.7 C629.5 573.6 629.4 573.6 629.4 573.5 C629.4 573.5 629.3 573.4 629.3 573.3 C629.3 573.3 629.3 573.2 629.3 573.1 C629.3 573.1 629.3 573 629.3 572.9 C629.3 572.9 629.4 572.8 629.4 572.7 C629.4 572.7 629.5 572.6 629.5 572.6 C629.6 572.5 629.6 572.5 629.7 572.5 C629.7 572.4 629.8 572.4 629.9 572.4 C629.9 572.4 630 572.4 630.1 572.4 C630.1 572.4 630.2 572.4 630.3 572.4 C630.3 572.4 630.4 572.4 630.5 572.5 C630.5 572.5 630.6 572.5 630.6 572.6 C630.7 572.6 630.7 572.7 630.7 572.7 C630.8 572.8 630.8 572.9 630.8 572.9 C630.8 573 630.8 573.1 630.8 573.1Z M621.5 578.3 C621.5 578.4 621.5 578.5 621.5 578.6 C621.5 578.7 621.4 578.8 621.4 578.9 C621.3 579 621.3 579 621.2 579.1 C621.1 579.2 621 579.3 621 579.3 C620.9 579.4 620.8 579.4 620.7 579.4 C620.6 579.4 620.5 579.5 620.4 579.5 C620.3 579.5 620.2 579.4 620.1 579.4 C620 579.4 619.9 579.4 619.8 579.3 C619.7 579.3 619.6 579.2 619.6 579.1 C619.5 579 619.4 579 619.4 578.9 C619.3 578.8 619.3 578.7 619.3 578.6 C619.2 578.5 619.2 578.4 619.2 578.3 C619.2 578.2 619.2 578.1 619.3 578 C619.3 577.9 619.3 577.8 619.4 577.7 C619.4 577.6 619.5 577.5 619.6 577.5 C619.6 577.4 619.7 577.3 619.8 577.3 C619.9 577.2 620 577.2 620.1 577.2 C620.2 577.1 620.3 577.1 620.4 577.1 C620.5 577.1 620.6 577.1 620.7 577.2 C620.8 577.2 620.9 577.2 621 577.3 C621 577.3 621.1 577.4 621.2 577.5 C621.3 577.5 621.3 577.6 621.4 577.7 C621.4 577.8 621.5 577.9 621.5 578 C621.5 578.1 621.5 578.2 621.5 578.3Z M620.9 578.3 C620.9 578.3 620.9 578.4 620.9 578.4 C620.9 578.5 620.8 578.5 620.8 578.6 C620.8 578.6 620.8 578.6 620.7 578.7 C620.7 578.7 620.7 578.7 620.6 578.7 C620.6 578.8 620.6 578.8 620.5 578.8 C620.5 578.8 620.4 578.8 620.4 578.8 C620.3 578.8 620.3 578.8 620.2 578.8 C620.2 578.8 620.2 578.8 620.1 578.7 C620.1 578.7 620 578.7 620 578.7 C620 578.6 620 578.6 619.9 578.6 C619.9 578.5 619.9 578.5 619.9 578.4 C619.9 578.4 619.9 578.3 619.9 578.3 C619.9 578.2 619.9 578.2 619.9 578.2 C619.9 578.1 619.9 578.1 619.9 578 C620 578 620 578 620 577.9 C620 577.9 620.1 577.9 620.1 577.8 C620.2 577.8 620.2 577.8 620.2 577.8 C620.3 577.8 620.3 577.8 620.4 577.8 C620.4 577.8 620.5 577.8 620.5 577.8 C620.6 577.8 620.6 577.8 620.6 577.8 C620.7 577.9 620.7 577.9 620.7 577.9 C620.8 578 620.8 578 620.8 578 C620.8 578.1 620.9 578.1 620.9 578.2 C620.9 578.2 620.9 578.2 620.9 578.3Z M621.2 578.3 C621.2 578.4 621.1 578.4 621.1 578.5 C621.1 578.6 621.1 578.6 621 578.7 C621 578.7 621 578.8 620.9 578.8 C620.9 578.9 620.8 578.9 620.8 579 C620.7 579 620.6 579 620.6 579 C620.5 579.1 620.4 579.1 620.4 579.1 C620.3 579.1 620.2 579.1 620.2 579 C620.1 579 620 579 620 579 C619.9 578.9 619.9 578.9 619.8 578.8 C619.8 578.8 619.7 578.7 619.7 578.7 C619.7 578.6 619.6 578.6 619.6 578.5 C619.6 578.4 619.6 578.4 619.6 578.3 C619.6 578.2 619.6 578.2 619.6 578.1 C619.6 578 619.7 578 619.7 577.9 C619.7 577.8 619.8 577.8 619.8 577.7 C619.9 577.7 619.9 577.7 620 577.6 C620 577.6 620.1 577.6 620.2 577.5 C620.2 577.5 620.3 577.5 620.4 577.5 C620.4 577.5 620.5 577.5 620.6 577.5 C620.6 577.6 620.7 577.6 620.8 577.6 C620.8 577.7 620.9 577.7 620.9 577.7 C621 577.8 621 577.8 621 577.9 C621.1 578 621.1 578 621.1 578.1 C621.1 578.2 621.2 578.2 621.2 578.3Z M619.6 585.4 C619.6 585.5 619.6 585.6 619.6 585.7 C619.5 585.8 619.5 585.9 619.4 586 C619.4 586.1 619.3 586.1 619.3 586.2 C619.2 586.3 619.1 586.4 619 586.4 C618.9 586.5 618.8 586.5 618.7 586.5 C618.6 586.5 618.5 586.6 618.4 586.6 C618.3 586.6 618.2 586.5 618.1 586.5 C618 586.5 617.9 586.5 617.9 586.4 C617.8 586.4 617.7 586.3 617.6 586.2 C617.5 586.1 617.5 586.1 617.4 586 C617.4 585.9 617.3 585.8 617.3 585.7 C617.3 585.6 617.3 585.5 617.3 585.4 C617.3 585.3 617.3 585.2 617.3 585.1 C617.3 585 617.4 584.9 617.4 584.8 C617.5 584.7 617.5 584.6 617.6 584.6 C617.7 584.5 617.8 584.4 617.9 584.4 C617.9 584.3 618 584.3 618.1 584.3 C618.2 584.2 618.3 584.2 618.4 584.2 C618.5 584.2 618.6 584.2 618.7 584.3 C618.8 584.3 618.9 584.3 619 584.4 C619.1 584.4 619.2 584.5 619.3 584.6 C619.3 584.6 619.4 584.7 619.4 584.8 C619.5 584.9 619.5 585 619.6 585.1 C619.6 585.2 619.6 585.3 619.6 585.4Z M619 585.4 C619 585.4 618.9 585.5 618.9 585.5 C618.9 585.6 618.9 585.6 618.9 585.7 C618.9 585.7 618.8 585.7 618.8 585.8 C618.8 585.8 618.7 585.8 618.7 585.8 C618.7 585.9 618.6 585.9 618.6 585.9 C618.5 585.9 618.5 585.9 618.4 585.9 C618.4 585.9 618.3 585.9 618.3 585.9 C618.3 585.9 618.2 585.9 618.2 585.8 C618.1 585.8 618.1 585.8 618.1 585.8 C618 585.7 618 585.7 618 585.7 C618 585.6 618 585.6 617.9 585.5 C617.9 585.5 617.9 585.4 617.9 585.4 C617.9 585.4 617.9 585.3 617.9 585.3 C618 585.2 618 585.2 618 585.1 C618 585.1 618 585.1 618.1 585 C618.1 585 618.1 585 618.2 585 C618.2 584.9 618.3 584.9 618.3 584.9 C618.3 584.9 618.4 584.9 618.4 584.9 C618.5 584.9 618.5 584.9 618.6 584.9 C618.6 584.9 618.7 584.9 618.7 585 C618.7 585 618.8 585 618.8 585 C618.8 585.1 618.9 585.1 618.9 585.1 C618.9 585.2 618.9 585.2 618.9 585.3 C618.9 585.3 619 585.4 619 585.4Z M619.2 585.4 C619.2 585.5 619.2 585.5 619.2 585.6 C619.2 585.7 619.1 585.7 619.1 585.8 C619.1 585.8 619 585.9 619 585.9 C618.9 586 618.9 586 618.8 586.1 C618.8 586.1 618.7 586.1 618.6 586.1 C618.6 586.2 618.5 586.2 618.4 586.2 C618.4 586.2 618.3 586.2 618.2 586.1 C618.2 586.1 618.1 586.1 618.1 586.1 C618 586 617.9 586 617.9 585.9 C617.8 585.9 617.8 585.8 617.8 585.8 C617.7 585.7 617.7 585.7 617.7 585.6 C617.7 585.5 617.7 585.5 617.7 585.4 C617.7 585.3 617.7 585.3 617.7 585.2 C617.7 585.1 617.7 585.1 617.8 585 C617.8 585 617.8 584.9 617.9 584.9 C617.9 584.8 618 584.8 618.1 584.7 C618.1 584.7 618.2 584.7 618.2 584.6 C618.3 584.6 618.4 584.6 618.4 584.6 C618.5 584.6 618.6 584.6 618.6 584.6 C618.7 584.7 618.8 584.7 618.8 584.7 C618.9 584.8 618.9 584.8 619 584.9 C619 584.9 619.1 585 619.1 585 C619.1 585.1 619.2 585.1 619.2 585.2 C619.2 585.3 619.2 585.3 619.2 585.4Z M621.8 589.7 C621.8 589.8 621.8 589.9 621.8 590 C621.7 590.1 621.7 590.2 621.6 590.2 C621.6 590.3 621.5 590.4 621.5 590.5 C621.4 590.6 621.3 590.6 621.2 590.7 C621.1 590.7 621 590.8 620.9 590.8 C620.8 590.8 620.7 590.8 620.6 590.8 C620.5 590.8 620.4 590.8 620.3 590.8 C620.2 590.8 620.1 590.7 620.1 590.7 C620 590.6 619.9 590.6 619.8 590.5 C619.7 590.4 619.7 590.3 619.6 590.2 C619.6 590.2 619.5 590.1 619.5 590 C619.5 589.9 619.5 589.8 619.5 589.7 C619.5 589.6 619.5 589.5 619.5 589.4 C619.5 589.3 619.6 589.2 619.6 589.1 C619.7 589 619.7 588.9 619.8 588.8 C619.9 588.8 620 588.7 620.1 588.7 C620.1 588.6 620.2 588.6 620.3 588.5 C620.4 588.5 620.5 588.5 620.6 588.5 C620.7 588.5 620.8 588.5 620.9 588.5 C621 588.6 621.1 588.6 621.2 588.7 C621.3 588.7 621.4 588.8 621.5 588.8 C621.5 588.9 621.6 589 621.6 589.1 C621.7 589.2 621.7 589.3 621.8 589.4 C621.8 589.5 621.8 589.6 621.8 589.7Z M621.2 589.7 C621.2 589.7 621.1 589.8 621.1 589.8 C621.1 589.8 621.1 589.9 621.1 589.9 C621.1 590 621 590 621 590 C621 590.1 620.9 590.1 620.9 590.1 C620.9 590.1 620.8 590.1 620.8 590.2 C620.7 590.2 620.7 590.2 620.6 590.2 C620.6 590.2 620.5 590.2 620.5 590.2 C620.5 590.1 620.4 590.1 620.4 590.1 C620.3 590.1 620.3 590.1 620.3 590 C620.2 590 620.2 590 620.2 589.9 C620.2 589.9 620.1 589.8 620.1 589.8 C620.1 589.8 620.1 589.7 620.1 589.7 C620.1 589.6 620.1 589.6 620.1 589.5 C620.1 589.5 620.2 589.4 620.2 589.4 C620.2 589.4 620.2 589.3 620.3 589.3 C620.3 589.3 620.3 589.2 620.4 589.2 C620.4 589.2 620.5 589.2 620.5 589.2 C620.5 589.2 620.6 589.1 620.6 589.1 C620.7 589.1 620.7 589.2 620.8 589.2 C620.8 589.2 620.9 589.2 620.9 589.2 C620.9 589.2 621 589.3 621 589.3 C621 589.3 621.1 589.4 621.1 589.4 C621.1 589.4 621.1 589.5 621.1 589.5 C621.1 589.6 621.2 589.6 621.2 589.7Z M621.4 589.7 C621.4 589.7 621.4 589.8 621.4 589.9 C621.4 589.9 621.3 590 621.3 590 C621.3 590.1 621.2 590.2 621.2 590.2 C621.1 590.3 621.1 590.3 621 590.3 C621 590.4 620.9 590.4 620.8 590.4 C620.8 590.4 620.7 590.4 620.6 590.4 C620.6 590.4 620.5 590.4 620.4 590.4 C620.4 590.4 620.3 590.4 620.2 590.3 C620.2 590.3 620.1 590.3 620.1 590.2 C620 590.2 620 590.1 620 590 C619.9 590 619.9 589.9 619.9 589.9 C619.9 589.8 619.9 589.7 619.9 589.7 C619.9 589.6 619.9 589.5 619.9 589.5 C619.9 589.4 619.9 589.3 620 589.3 C620 589.2 620 589.2 620.1 589.1 C620.1 589.1 620.2 589 620.2 589 C620.3 589 620.4 588.9 620.4 588.9 C620.5 588.9 620.6 588.9 620.6 588.9 C620.7 588.9 620.8 588.9 620.8 588.9 C620.9 588.9 621 589 621 589 C621.1 589 621.1 589.1 621.2 589.1 C621.2 589.2 621.3 589.2 621.3 589.3 C621.3 589.3 621.4 589.4 621.4 589.5 C621.4 589.5 621.4 589.6 621.4 589.7Z M651 562.1 C651.6 563.2 653.6 566.4 654.5 568.9 C655.4 571.5 656 574.3 656.3 577.1 C656.6 580 656.5 583 656.2 586 C655.9 588.9 655.2 592 654.2 594.8 C653.3 597.7 652 600.5 650.6 603 C649.1 605.5 647.3 607.8 645.4 609.8 C643.5 611.7 641.4 613.5 639.3 614.7 C637.1 616 634.8 616.9 632.5 617.4 C630.3 617.9 627.9 618 625.8 617.7 C623.6 617.4 621.4 616.6 619.5 615.5 C617.5 614.4 615.7 612.8 614.2 611 C612.6 609.1 611.3 606.9 610.2 604.5 C609.2 602.1 608.4 597.9 608 596.6 M648.3 562.2 C648.8 563.1 650.8 565.7 651.7 567.8 C652.6 569.9 653.3 572.3 653.7 574.7 C654.2 577.2 654.4 579.8 654.3 582.4 C654.2 585 653.8 587.8 653.2 590.3 C652.6 592.9 651.8 595.5 650.7 597.9 C649.6 600.3 648.3 602.7 646.9 604.7 C645.4 606.7 643.7 608.6 642 610.1 C640.2 611.7 638.3 613 636.4 613.9 C634.5 614.8 632.4 615.4 630.4 615.7 C628.5 615.9 626.5 615.9 624.6 615.4 C622.8 615 620.9 614.2 619.3 613.1 C617.6 612 616.1 610.6 614.8 608.9 C613.5 607.2 612.4 605.2 611.5 603.1 C610.6 600.9 610 598.5 609.6 596 C609.2 593.6 609.3 589.6 609.3 588.3 M652.5 563.7 L655.6 562.2 L657.3 566 L654.8 568.6 M655.7 571.4 L658.8 571.1 L659.6 575.6 L656.7 577.2 M656.9 580.4 L659.9 581.3 L659.5 586 L656.5 586.6 M656 589.8 L658.5 591.8 L657.2 596.5 L654.3 595.9 M653.1 598.9 L655 601.9 L652.7 606 L650.2 604.3 M648.4 606.9 L649.5 610.6 L646.5 613.8 L644.6 611.2 M642.4 613.1 L642.5 617.2 L639 619.3 L637.9 615.9 M635.5 617 L634.7 621.1 L631 622 L630.7 618.1 M628.2 618.3 L626.6 622.1 L623.1 621.6 L623.6 617.6 M614.2 574.1 L611.9 569.5 M616.1 570.6 L614.4 565.7 M618.3 567.4 L617.2 562.2 M620.8 564.7 L620.3 559.3 M623.4 562.4 L623.7 557 M626.3 560.6 L627.2 555.4 M629.2 559.4 L630.8 554.4 M632.2 558.8 L634.4 554 M635.2 558.7 L637.9 554.4 M638 559.3 L641.2 555.5 M640.7 560.4 L644.3 557.3 M643.1 562.1 L647.1 559.7 M645.3 564.4 L649.6 562.6 M592.3 609.9 C591.6 609.3 589.5 607.8 588.2 606.4 C587 605.1 585.9 603.5 585 601.8 C584 600.2 583.3 598.3 582.6 596.3 C582 594.3 581.6 592.2 581.3 590.1 C581.1 587.9 581 585.7 581.1 583.4 C581.2 581.2 581.5 578.9 581.9 576.6 C582.4 574.4 583 572.2 583.8 570 C584.6 567.9 586.2 564.9 586.7 563.9 M621.5 617.2 L604.1 613 L602.3 611.6 L619.6 616.3Z M594.2 611.6 L603.4 612.7 L601.6 611.2 L592.2 610.6Z M617.3 614.8 L600.3 609.5 L598.8 607.5 L615.5 613.3Z M590 609 L599.5 609.1 L598 607.1 L588.3 607.4Z M613.6 611.2 L597.2 604.9 L596.1 602.5 L612.1 609.2Z M586.4 605.1 L596.4 604.5 L595.3 602.1 L585.1 603.1Z M610.6 606.5 L594.9 599.4 L594.2 596.7 L609.5 604.2Z M583.6 600.4 L594.2 599 L593.4 596.4 L582.6 597.9Z M608.5 601.1 L593.6 593.3 L593.4 590.4 L607.8 598.5Z M581.7 594.8 L592.9 592.9 L592.6 590 L581.1 592.1Z M607.3 595.1 L593.3 586.8 L593.5 583.8 L607.1 592.2Z M580.7 588.7 L592.5 586.4 L592.7 583.4 L580.5 585.8Z M607.1 588.7 L594 580.2 L594.6 577.2 L607.3 585.7Z M580.7 582.2 L593.2 579.8 L593.9 576.8 L581 579.3Z M584.2 566.7 C584.6 565.2 585.1 560.9 586.8 557.6 C588.5 554.4 591.1 550.7 594.5 547.3 C598 543.8 602.9 539.4 607.5 537 C612 534.5 617.8 533.3 621.7 532.8 C625.5 532.4 628.4 533.6 630.7 534.4 C633 535.1 634.5 536.7 635.2 537.2 M604.9 571.8 C605.5 570.3 606.8 566.2 608.8 562.8 C610.7 559.3 613.7 554.6 616.5 551.2 C619.3 547.8 622.7 544.6 625.5 542.4 C628.4 540.1 632.2 538.5 633.6 537.7 M584.2 566.7 C585.1 567.5 587 570.7 589.4 571.8 C591.7 573 595.8 573.8 598.4 573.8 C601 573.8 603.8 572.2 604.9 571.8 M590.7 565.4 C590.4 564.5 591.6 560.7 592.6 558.9 C593.7 557.1 597.8 551.8 599.7 549.9 C601.6 548 606.5 544.1 608.8 542.8 C611 541.4 617.6 538.6 619.1 538.3 C620.6 537.9 622.4 539.4 621.7 540.2 C620.9 541 614.7 543.9 612.6 545.4 C610.6 546.8 606 550.7 604.2 552.5 C602.5 554.2 598.8 558.6 597.8 560.2 C596.7 561.9 596 566.1 595.2 566.7 C594.4 567.3 591 566.3 590.7 565.4Z M634.6 527.9 C635.9 528.1 639.1 527.7 642.3 529.2 C645.6 530.7 650.9 534.4 654 537 C657 539.5 658.5 541.3 660.4 544.7 C662.4 548.2 664.6 553.5 665.6 557.6 C666.6 561.7 666.1 567.3 666.2 569.3 M637.2 531.8 C638.9 532.4 644.5 533.7 647.5 535.7 C650.5 537.6 653.1 540.4 655.3 543.4 C657.4 546.4 659.2 549.9 660.4 553.8 C661.6 557.6 662 564.5 662.4 566.7 M666.2 569.3 L662.4 566.7 M666.2 569.3 L697.9 553.8 M665.6 548.8 L697.9 533.1 M670.8 553.8 L694 542.8 L694.7 549.9 L672 560.5Z M640.9 531.1 C640.9 531.2 640.9 531.2 640.9 531.3 C640.9 531.3 640.9 531.4 640.8 531.4 C640.8 531.4 640.8 531.5 640.8 531.5 C640.7 531.5 640.7 531.6 640.7 531.6 C640.6 531.6 640.6 531.6 640.5 531.6 C640.5 531.7 640.4 531.7 640.4 531.7 C640.4 531.7 640.3 531.7 640.3 531.6 C640.2 531.6 640.2 531.6 640.1 531.6 C640.1 531.6 640.1 531.5 640 531.5 C640 531.5 640 531.4 640 531.4 C639.9 531.4 639.9 531.3 639.9 531.3 C639.9 531.2 639.9 531.2 639.9 531.1 C639.9 531.1 639.9 531.1 639.9 531 C639.9 531 639.9 530.9 640 530.9 C640 530.8 640 530.8 640 530.8 C640.1 530.7 640.1 530.7 640.1 530.7 C640.2 530.7 640.2 530.7 640.3 530.6 C640.3 530.6 640.4 530.6 640.4 530.6 C640.4 530.6 640.5 530.6 640.5 530.6 C640.6 530.7 640.6 530.7 640.7 530.7 C640.7 530.7 640.7 530.7 640.8 530.8 C640.8 530.8 640.8 530.8 640.8 530.9 C640.9 530.9 640.9 531 640.9 531 C640.9 531.1 640.9 531.1 640.9 531.1Z M649.3 534.4 C649.3 534.4 649.3 534.5 649.3 534.5 C649.3 534.6 649.3 534.6 649.2 534.6 C649.2 534.7 649.2 534.7 649.2 534.7 C649.1 534.8 649.1 534.8 649.1 534.8 C649 534.8 649 534.9 648.9 534.9 C648.9 534.9 648.8 534.9 648.8 534.9 C648.7 534.9 648.7 534.9 648.7 534.9 C648.6 534.9 648.6 534.8 648.5 534.8 C648.5 534.8 648.5 534.8 648.4 534.7 C648.4 534.7 648.4 534.7 648.3 534.6 C648.3 534.6 648.3 534.6 648.3 534.5 C648.3 534.5 648.3 534.4 648.3 534.4 C648.3 534.3 648.3 534.3 648.3 534.2 C648.3 534.2 648.3 534.2 648.3 534.1 C648.4 534.1 648.4 534 648.4 534 C648.5 534 648.5 534 648.5 533.9 C648.6 533.9 648.6 533.9 648.7 533.9 C648.7 533.9 648.7 533.9 648.8 533.9 C648.8 533.9 648.9 533.9 648.9 533.9 C649 533.9 649 533.9 649.1 533.9 C649.1 534 649.1 534 649.2 534 C649.2 534 649.2 534.1 649.2 534.1 C649.3 534.2 649.3 534.2 649.3 534.2 C649.3 534.3 649.3 534.3 649.3 534.4Z M655.8 540.8 C655.8 540.9 655.8 540.9 655.8 541 C655.7 541 655.7 541.1 655.7 541.1 C655.7 541.1 655.6 541.2 655.6 541.2 C655.6 541.2 655.5 541.3 655.5 541.3 C655.5 541.3 655.4 541.3 655.4 541.3 C655.3 541.3 655.3 541.4 655.3 541.4 C655.2 541.4 655.2 541.3 655.1 541.3 C655.1 541.3 655 541.3 655 541.3 C655 541.3 654.9 541.2 654.9 541.2 C654.9 541.2 654.8 541.1 654.8 541.1 C654.8 541.1 654.8 541 654.8 541 C654.7 540.9 654.7 540.9 654.7 540.8 C654.7 540.8 654.7 540.7 654.8 540.7 C654.8 540.7 654.8 540.6 654.8 540.6 C654.8 540.5 654.9 540.5 654.9 540.5 C654.9 540.4 655 540.4 655 540.4 C655 540.4 655.1 540.3 655.1 540.3 C655.2 540.3 655.2 540.3 655.3 540.3 C655.3 540.3 655.3 540.3 655.4 540.3 C655.4 540.3 655.5 540.4 655.5 540.4 C655.5 540.4 655.6 540.4 655.6 540.5 C655.6 540.5 655.7 540.5 655.7 540.6 C655.7 540.6 655.7 540.7 655.8 540.7 C655.8 540.7 655.8 540.8 655.8 540.8Z M659.6 546.6 C659.6 546.7 659.6 546.7 659.6 546.8 C659.6 546.8 659.6 546.9 659.6 546.9 C659.6 546.9 659.5 547 659.5 547 C659.5 547 659.4 547.1 659.4 547.1 C659.3 547.1 659.3 547.1 659.3 547.1 C659.2 547.2 659.2 547.2 659.1 547.2 C659.1 547.2 659 547.2 659 547.1 C659 547.1 658.9 547.1 658.9 547.1 C658.8 547.1 658.8 547 658.8 547 C658.7 547 658.7 546.9 658.7 546.9 C658.7 546.9 658.6 546.8 658.6 546.8 C658.6 546.7 658.6 546.7 658.6 546.6 C658.6 546.6 658.6 546.6 658.6 546.5 C658.6 546.5 658.7 546.4 658.7 546.4 C658.7 546.3 658.7 546.3 658.8 546.3 C658.8 546.3 658.8 546.2 658.9 546.2 C658.9 546.2 659 546.2 659 546.1 C659 546.1 659.1 546.1 659.1 546.1 C659.2 546.1 659.2 546.1 659.3 546.1 C659.3 546.2 659.3 546.2 659.4 546.2 C659.4 546.2 659.5 546.3 659.5 546.3 C659.5 546.3 659.6 546.3 659.6 546.4 C659.6 546.4 659.6 546.5 659.6 546.5 C659.6 546.6 659.6 546.6 659.6 546.6Z M787.1 508.2 C786.6 510.4 785.8 512.6 784.9 514.6 C784 516.6 782.9 518.5 781.6 520.2 C780.4 521.9 779 523.4 777.5 524.7 C776.1 525.9 774.5 527 772.9 527.8 C771.3 528.5 769.7 529 768.1 529.2 C766.5 529.4 764.8 529.3 763.3 528.9 C761.8 528.6 760.3 527.9 759 526.9 C757.7 526 756.4 524.8 755.4 523.4 C754.3 522 753.4 520.3 752.7 518.5 C752 516.7 751.5 514.7 751.2 512.6 C750.9 510.5 750.9 508.3 751 506.1 C751.1 503.9 751.5 501.7 752 499.5 C752.6 497.3 753.3 495.1 754.2 493.2 C755.1 491.2 756.3 489.2 757.5 487.5 C758.7 485.9 760.1 484.3 761.6 483 C763 481.8 764.6 480.7 766.2 480 C767.8 479.2 769.5 478.7 771.1 478.5 C772.7 478.3 774.3 478.4 775.8 478.8 C777.3 479.2 778.8 479.9 780.1 480.8 C781.5 481.7 782.7 482.9 783.7 484.3 C784.8 485.8 785.7 487.4 786.4 489.2 C787.1 491 787.6 493.1 787.9 495.1 C788.2 497.2 788.3 499.4 788.1 501.6 C788 503.8 787.6 506.1 787.1 508.2Z M785 507.5 C784.5 509.5 783.8 511.5 782.9 513.4 C782.1 515.2 781.1 517 780 518.5 C778.9 520.1 777.6 521.5 776.3 522.7 C775 523.9 773.5 524.8 772.1 525.5 C770.7 526.2 769.1 526.7 767.7 526.9 C766.3 527.1 764.8 527 763.4 526.7 C762.1 526.3 760.7 525.7 759.5 524.9 C758.3 524 757.2 522.9 756.3 521.6 C755.4 520.3 754.6 518.8 753.9 517.1 C753.3 515.5 752.9 513.6 752.6 511.7 C752.4 509.8 752.3 507.8 752.4 505.8 C752.6 503.8 752.9 501.7 753.4 499.7 C753.9 497.7 754.6 495.7 755.4 493.8 C756.2 492 757.3 490.2 758.4 488.7 C759.5 487.1 760.8 485.7 762.1 484.5 C763.4 483.3 764.8 482.4 766.3 481.7 C767.7 481 769.2 480.5 770.6 480.3 C772.1 480.1 773.6 480.2 774.9 480.5 C776.3 480.9 777.6 481.5 778.8 482.3 C780 483.2 781.1 484.3 782 485.6 C783 486.9 783.8 488.4 784.4 490.1 C785 491.7 785.5 493.6 785.7 495.5 C786 497.4 786 499.4 785.9 501.4 C785.8 503.5 785.5 505.6 785 507.5Z M781.2 506.4 C780.7 508 780.2 509.7 779.5 511.2 C778.8 512.7 778 514.2 777.1 515.5 C776.2 516.8 775.2 517.9 774.1 518.9 C773 519.9 771.9 520.7 770.7 521.3 C769.6 521.9 768.4 522.3 767.2 522.4 C766 522.6 764.9 522.5 763.8 522.3 C762.7 522 761.6 521.5 760.7 520.8 C759.7 520.1 758.8 519.2 758.1 518.1 C757.4 517.1 756.7 515.8 756.2 514.5 C755.8 513.1 755.4 511.6 755.2 510 C755 508.5 755 506.8 755.1 505.1 C755.2 503.4 755.5 501.7 755.9 500.1 C756.3 498.4 756.9 496.8 757.6 495.2 C758.2 493.7 759.1 492.3 760 491 C760.9 489.7 761.9 488.5 763 487.5 C764 486.6 765.2 485.7 766.3 485.1 C767.5 484.6 768.7 484.2 769.8 484 C771 483.8 772.2 483.9 773.3 484.2 C774.4 484.4 775.4 484.9 776.4 485.6 C777.3 486.3 778.2 487.2 779 488.3 C779.7 489.4 780.3 490.6 780.8 492 C781.3 493.3 781.7 494.9 781.8 496.4 C782 498 782.1 499.7 782 501.3 C781.8 503 781.6 504.7 781.2 506.4Z M780.2 505.8 C779.8 507.4 779.3 508.9 778.6 510.4 C778 511.8 777.2 513.2 776.4 514.4 C775.5 515.7 774.5 516.8 773.5 517.7 C772.5 518.6 771.4 519.4 770.3 519.9 C769.3 520.5 768.1 520.9 767 521 C765.9 521.2 764.8 521.1 763.8 520.9 C762.7 520.6 761.7 520.1 760.8 519.5 C759.9 518.8 759.1 518 758.4 517 C757.7 516 757.1 514.8 756.6 513.5 C756.2 512.2 755.9 510.8 755.7 509.3 C755.5 507.8 755.5 506.2 755.6 504.6 C755.7 503.1 755.9 501.4 756.3 499.9 C756.7 498.3 757.3 496.7 757.9 495.3 C758.5 493.8 759.3 492.5 760.2 491.2 C761 490 762 488.9 763 488 C764 487 765.1 486.3 766.2 485.7 C767.3 485.2 768.4 484.8 769.5 484.6 C770.6 484.5 771.7 484.5 772.8 484.8 C773.8 485 774.8 485.5 775.7 486.2 C776.6 486.8 777.4 487.7 778.1 488.7 C778.8 489.7 779.4 490.9 779.9 492.2 C780.3 493.5 780.7 494.9 780.9 496.4 C781 497.9 781.1 499.5 781 501 C780.8 502.6 780.6 504.2 780.2 505.8Z M774.6 504.1 C774.4 504.9 774.1 505.8 773.8 506.6 C773.4 507.4 772.9 508.2 772.4 508.8 C772 509.5 771.4 510.1 770.8 510.6 C770.2 511.1 769.6 511.6 769 511.9 C768.3 512.2 767.7 512.4 767 512.5 C766.4 512.5 765.7 512.5 765.1 512.3 C764.5 512.2 763.9 511.9 763.4 511.5 C762.9 511.2 762.4 510.7 761.9 510.1 C761.5 509.6 761.2 508.9 760.9 508.2 C760.6 507.4 760.4 506.6 760.3 505.8 C760.2 505 760.1 504.1 760.2 503.2 C760.2 502.3 760.4 501.4 760.6 500.6 C760.8 499.7 761.1 498.8 761.5 498 C761.9 497.2 762.3 496.5 762.8 495.8 C763.3 495.1 763.8 494.5 764.4 494 C765 493.5 765.6 493.1 766.3 492.8 C766.9 492.5 767.6 492.3 768.2 492.2 C768.9 492.1 769.5 492.1 770.1 492.3 C770.7 492.4 771.3 492.7 771.9 493.1 C772.4 493.5 772.9 493.9 773.3 494.5 C773.7 495.1 774.1 495.7 774.4 496.5 C774.6 497.2 774.8 498 774.9 498.8 C775.1 499.6 775.1 500.5 775 501.4 C775 502.3 774.9 503.2 774.6 504.1Z M773.7 502.6 C773.5 503.2 773.4 503.8 773.1 504.3 C772.9 504.8 772.6 505.3 772.3 505.7 C772 506.2 771.6 506.6 771.3 506.9 C770.9 507.3 770.5 507.5 770.1 507.7 C769.7 507.9 769.3 508.1 768.9 508.1 C768.5 508.2 768.1 508.2 767.7 508.1 C767.3 508 766.9 507.8 766.6 507.6 C766.3 507.3 766 507 765.7 506.6 C765.4 506.3 765.2 505.8 765 505.4 C764.9 504.9 764.8 504.4 764.7 503.9 C764.6 503.3 764.6 502.7 764.6 502.2 C764.7 501.6 764.8 501 764.9 500.4 C765.1 499.9 765.3 499.3 765.5 498.8 C765.7 498.3 766 497.8 766.3 497.3 C766.6 496.9 767 496.5 767.3 496.2 C767.7 495.8 768.1 495.5 768.5 495.3 C768.9 495.1 769.3 495 769.7 495 C770.1 494.9 770.5 494.9 770.9 495 C771.3 495.1 771.7 495.3 772 495.5 C772.3 495.8 772.6 496.1 772.9 496.4 C773.2 496.8 773.4 497.2 773.6 497.7 C773.7 498.2 773.8 498.7 773.9 499.2 C774 499.8 774 500.3 774 500.9 C773.9 501.5 773.8 502.1 773.7 502.6Z M772.8 502.4 C772.7 502.9 772.5 503.3 772.4 503.7 C772.2 504.2 771.9 504.6 771.7 504.9 C771.4 505.3 771.1 505.6 770.9 505.9 C770.6 506.1 770.2 506.4 769.9 506.5 C769.6 506.7 769.3 506.8 768.9 506.9 C768.6 506.9 768.3 506.9 768 506.8 C767.7 506.7 767.4 506.6 767.1 506.4 C766.9 506.2 766.6 506 766.4 505.7 C766.2 505.4 766 505 765.9 504.6 C765.8 504.3 765.7 503.8 765.6 503.4 C765.6 503 765.5 502.5 765.6 502.1 C765.6 501.6 765.7 501.1 765.8 500.7 C765.9 500.2 766.1 499.8 766.3 499.3 C766.4 498.9 766.7 498.5 766.9 498.1 C767.2 497.8 767.5 497.5 767.7 497.2 C768 496.9 768.4 496.7 768.7 496.5 C769 496.4 769.3 496.3 769.7 496.2 C770 496.2 770.3 496.2 770.6 496.3 C770.9 496.4 771.2 496.5 771.5 496.7 C771.7 496.9 772 497.1 772.2 497.4 C772.4 497.7 772.6 498.1 772.7 498.4 C772.8 498.8 772.9 499.2 773 499.7 C773 500.1 773.1 500.6 773 501 C773 501.5 772.9 502 772.8 502.4Z M765.6 492.7 C765.6 492.8 765.5 492.9 765.5 493 C765.5 493.1 765.4 493.2 765.4 493.3 C765.3 493.3 765.3 493.4 765.2 493.5 C765.1 493.6 765.1 493.6 765 493.7 C764.9 493.7 764.8 493.8 764.7 493.8 C764.6 493.8 764.5 493.8 764.4 493.8 C764.3 493.8 764.2 493.8 764.1 493.8 C764 493.8 763.9 493.7 763.8 493.7 C763.7 493.6 763.6 493.6 763.6 493.5 C763.5 493.4 763.4 493.3 763.4 493.3 C763.3 493.2 763.3 493.1 763.3 493 C763.2 492.9 763.2 492.8 763.2 492.7 C763.2 492.6 763.2 492.5 763.3 492.4 C763.3 492.3 763.3 492.2 763.4 492.1 C763.4 492 763.5 491.9 763.6 491.8 C763.6 491.8 763.7 491.7 763.8 491.7 C763.9 491.6 764 491.6 764.1 491.5 C764.2 491.5 764.3 491.5 764.4 491.5 C764.5 491.5 764.6 491.5 764.7 491.5 C764.8 491.6 764.9 491.6 765 491.7 C765.1 491.7 765.1 491.8 765.2 491.8 C765.3 491.9 765.3 492 765.4 492.1 C765.4 492.2 765.5 492.3 765.5 492.4 C765.5 492.5 765.6 492.6 765.6 492.7Z M764.9 492.7 C764.9 492.7 764.9 492.8 764.9 492.8 C764.9 492.8 764.9 492.9 764.8 492.9 C764.8 493 764.8 493 764.8 493 C764.7 493.1 764.7 493.1 764.7 493.1 C764.6 493.1 764.6 493.2 764.5 493.2 C764.5 493.2 764.4 493.2 764.4 493.2 C764.3 493.2 764.3 493.2 764.3 493.2 C764.2 493.2 764.2 493.1 764.1 493.1 C764.1 493.1 764.1 493.1 764 493 C764 493 764 493 763.9 492.9 C763.9 492.9 763.9 492.8 763.9 492.8 C763.9 492.8 763.9 492.7 763.9 492.7 C763.9 492.6 763.9 492.6 763.9 492.5 C763.9 492.5 763.9 492.4 763.9 492.4 C764 492.4 764 492.3 764 492.3 C764.1 492.3 764.1 492.2 764.1 492.2 C764.2 492.2 764.2 492.2 764.3 492.2 C764.3 492.2 764.3 492.2 764.4 492.2 C764.4 492.2 764.5 492.2 764.5 492.2 C764.6 492.2 764.6 492.2 764.7 492.2 C764.7 492.2 764.7 492.3 764.8 492.3 C764.8 492.3 764.8 492.4 764.8 492.4 C764.9 492.4 764.9 492.5 764.9 492.5 C764.9 492.6 764.9 492.6 764.9 492.7Z M765.2 492.7 C765.2 492.7 765.2 492.8 765.1 492.9 C765.1 492.9 765.1 493 765.1 493.1 C765 493.1 765 493.2 764.9 493.2 C764.9 493.3 764.8 493.3 764.8 493.3 C764.7 493.4 764.7 493.4 764.6 493.4 C764.5 493.4 764.5 493.4 764.4 493.4 C764.3 493.4 764.3 493.4 764.2 493.4 C764.1 493.4 764.1 493.4 764 493.3 C763.9 493.3 763.9 493.3 763.8 493.2 C763.8 493.2 763.8 493.1 763.7 493.1 C763.7 493 763.7 492.9 763.6 492.9 C763.6 492.8 763.6 492.7 763.6 492.7 C763.6 492.6 763.6 492.5 763.6 492.5 C763.7 492.4 763.7 492.3 763.7 492.3 C763.8 492.2 763.8 492.2 763.8 492.1 C763.9 492.1 763.9 492 764 492 C764.1 492 764.1 491.9 764.2 491.9 C764.3 491.9 764.3 491.9 764.4 491.9 C764.5 491.9 764.5 491.9 764.6 491.9 C764.7 491.9 764.7 492 764.8 492 C764.8 492 764.9 492.1 764.9 492.1 C765 492.2 765 492.2 765.1 492.3 C765.1 492.3 765.1 492.4 765.1 492.5 C765.2 492.5 765.2 492.6 765.2 492.7Z M770.7 492.3 C770.7 492.4 770.7 492.5 770.7 492.6 C770.7 492.7 770.6 492.8 770.6 492.9 C770.5 493 770.5 493.1 770.4 493.1 C770.3 493.2 770.2 493.3 770.1 493.3 C770.1 493.4 770 493.4 769.9 493.4 C769.8 493.5 769.7 493.5 769.6 493.5 C769.5 493.5 769.4 493.5 769.3 493.4 C769.2 493.4 769.1 493.4 769 493.3 C768.9 493.3 768.8 493.2 768.7 493.1 C768.7 493.1 768.6 493 768.6 492.9 C768.5 492.8 768.5 492.7 768.4 492.6 C768.4 492.5 768.4 492.4 768.4 492.3 C768.4 492.2 768.4 492.1 768.4 492 C768.5 491.9 768.5 491.8 768.6 491.7 C768.6 491.7 768.7 491.6 768.7 491.5 C768.8 491.4 768.9 491.4 769 491.3 C769.1 491.3 769.2 491.2 769.3 491.2 C769.4 491.2 769.5 491.2 769.6 491.2 C769.7 491.2 769.8 491.2 769.9 491.2 C770 491.2 770.1 491.3 770.1 491.3 C770.2 491.4 770.3 491.4 770.4 491.5 C770.5 491.6 770.5 491.7 770.6 491.7 C770.6 491.8 770.7 491.9 770.7 492 C770.7 492.1 770.7 492.2 770.7 492.3Z M770.1 492.3 C770.1 492.4 770.1 492.4 770.1 492.5 C770 492.5 770 492.5 770 492.6 C770 492.6 770 492.7 769.9 492.7 C769.9 492.7 769.9 492.8 769.8 492.8 C769.8 492.8 769.7 492.8 769.7 492.8 C769.6 492.8 769.6 492.8 769.6 492.8 C769.5 492.8 769.5 492.8 769.4 492.8 C769.4 492.8 769.3 492.8 769.3 492.8 C769.3 492.8 769.2 492.7 769.2 492.7 C769.2 492.7 769.1 492.6 769.1 492.6 C769.1 492.5 769.1 492.5 769.1 492.5 C769 492.4 769 492.4 769 492.3 C769 492.3 769 492.2 769.1 492.2 C769.1 492.1 769.1 492.1 769.1 492.1 C769.1 492 769.2 492 769.2 492 C769.2 491.9 769.3 491.9 769.3 491.9 C769.3 491.9 769.4 491.8 769.4 491.8 C769.5 491.8 769.5 491.8 769.6 491.8 C769.6 491.8 769.6 491.8 769.7 491.8 C769.7 491.8 769.8 491.9 769.8 491.9 C769.9 491.9 769.9 491.9 769.9 492 C770 492 770 492 770 492.1 C770 492.1 770 492.1 770.1 492.2 C770.1 492.2 770.1 492.3 770.1 492.3Z M770.3 492.3 C770.3 492.4 770.3 492.5 770.3 492.5 C770.3 492.6 770.3 492.7 770.2 492.7 C770.2 492.8 770.2 492.8 770.1 492.9 C770.1 492.9 770 493 769.9 493 C769.9 493 769.8 493.1 769.8 493.1 C769.7 493.1 769.6 493.1 769.6 493.1 C769.5 493.1 769.4 493.1 769.4 493.1 C769.3 493.1 769.2 493 769.2 493 C769.1 493 769.1 492.9 769 492.9 C769 492.8 768.9 492.8 768.9 492.7 C768.9 492.7 768.8 492.6 768.8 492.5 C768.8 492.5 768.8 492.4 768.8 492.3 C768.8 492.3 768.8 492.2 768.8 492.1 C768.8 492.1 768.9 492 768.9 491.9 C768.9 491.9 769 491.8 769 491.8 C769.1 491.7 769.1 491.7 769.2 491.7 C769.2 491.6 769.3 491.6 769.4 491.6 C769.4 491.6 769.5 491.6 769.6 491.6 C769.6 491.6 769.7 491.6 769.8 491.6 C769.8 491.6 769.9 491.6 769.9 491.7 C770 491.7 770.1 491.7 770.1 491.8 C770.2 491.8 770.2 491.9 770.2 491.9 C770.3 492 770.3 492.1 770.3 492.1 C770.3 492.2 770.3 492.3 770.3 492.3Z M760.4 498.2 C760.4 498.3 760.4 498.4 760.3 498.5 C760.3 498.6 760.3 498.7 760.2 498.8 C760.2 498.8 760.1 498.9 760 499 C760 499.1 759.9 499.1 759.8 499.2 C759.7 499.2 759.6 499.3 759.5 499.3 C759.4 499.3 759.3 499.3 759.2 499.3 C759.1 499.3 759 499.3 758.9 499.3 C758.8 499.3 758.7 499.2 758.6 499.2 C758.6 499.1 758.5 499.1 758.4 499 C758.3 498.9 758.3 498.8 758.2 498.8 C758.2 498.7 758.1 498.6 758.1 498.5 C758.1 498.4 758.1 498.3 758.1 498.2 C758.1 498.1 758.1 498 758.1 497.9 C758.1 497.8 758.2 497.7 758.2 497.6 C758.3 497.5 758.3 497.4 758.4 497.4 C758.5 497.3 758.6 497.2 758.6 497.2 C758.7 497.1 758.8 497.1 758.9 497.1 C759 497 759.1 497 759.2 497 C759.3 497 759.4 497 759.5 497.1 C759.6 497.1 759.7 497.1 759.8 497.2 C759.9 497.2 760 497.3 760 497.4 C760.1 497.4 760.2 497.5 760.2 497.6 C760.3 497.7 760.3 497.8 760.3 497.9 C760.4 498 760.4 498.1 760.4 498.2Z M759.7 498.2 C759.7 498.2 759.7 498.3 759.7 498.3 C759.7 498.4 759.7 498.4 759.7 498.4 C759.7 498.5 759.6 498.5 759.6 498.5 C759.6 498.6 759.5 498.6 759.5 498.6 C759.4 498.7 759.4 498.7 759.4 498.7 C759.3 498.7 759.3 498.7 759.2 498.7 C759.2 498.7 759.1 498.7 759.1 498.7 C759 498.7 759 498.7 759 498.6 C758.9 498.6 758.9 498.6 758.9 498.5 C758.8 498.5 758.8 498.5 758.8 498.4 C758.8 498.4 758.7 498.4 758.7 498.3 C758.7 498.3 758.7 498.2 758.7 498.2 C758.7 498.1 758.7 498.1 758.7 498 C758.7 498 758.8 498 758.8 497.9 C758.8 497.9 758.8 497.8 758.9 497.8 C758.9 497.8 758.9 497.8 759 497.7 C759 497.7 759 497.7 759.1 497.7 C759.1 497.7 759.2 497.7 759.2 497.7 C759.3 497.7 759.3 497.7 759.4 497.7 C759.4 497.7 759.4 497.7 759.5 497.7 C759.5 497.8 759.6 497.8 759.6 497.8 C759.6 497.8 759.7 497.9 759.7 497.9 C759.7 498 759.7 498 759.7 498 C759.7 498.1 759.7 498.1 759.7 498.2Z M760 498.2 C760 498.2 760 498.3 760 498.4 C760 498.4 759.9 498.5 759.9 498.6 C759.9 498.6 759.8 498.7 759.8 498.7 C759.7 498.8 759.7 498.8 759.6 498.9 C759.6 498.9 759.5 498.9 759.4 498.9 C759.4 498.9 759.3 499 759.2 499 C759.2 499 759.1 498.9 759 498.9 C759 498.9 758.9 498.9 758.8 498.9 C758.8 498.8 758.7 498.8 758.7 498.7 C758.6 498.7 758.6 498.6 758.6 498.6 C758.5 498.5 758.5 498.4 758.5 498.4 C758.5 498.3 758.4 498.2 758.4 498.2 C758.4 498.1 758.5 498 758.5 498 C758.5 497.9 758.5 497.9 758.6 497.8 C758.6 497.7 758.6 497.7 758.7 497.6 C758.7 497.6 758.8 497.5 758.8 497.5 C758.9 497.5 759 497.4 759 497.4 C759.1 497.4 759.2 497.4 759.2 497.4 C759.3 497.4 759.4 497.4 759.4 497.4 C759.5 497.4 759.6 497.5 759.6 497.5 C759.7 497.5 759.7 497.6 759.8 497.6 C759.8 497.7 759.9 497.7 759.9 497.8 C759.9 497.9 760 497.9 760 498 C760 498 760 498.1 760 498.2Z M758.7 504.7 C758.7 504.8 758.7 504.9 758.6 505 C758.6 505.1 758.6 505.2 758.5 505.3 C758.5 505.4 758.4 505.5 758.3 505.5 C758.3 505.6 758.2 505.7 758.1 505.7 C758 505.8 757.9 505.8 757.8 505.8 C757.7 505.9 757.6 505.9 757.5 505.9 C757.4 505.9 757.3 505.9 757.2 505.8 C757.1 505.8 757 505.8 756.9 505.7 C756.8 505.7 756.8 505.6 756.7 505.5 C756.6 505.5 756.5 505.4 756.5 505.3 C756.4 505.2 756.4 505.1 756.4 505 C756.4 504.9 756.3 504.8 756.3 504.7 C756.3 504.6 756.4 504.5 756.4 504.4 C756.4 504.3 756.4 504.2 756.5 504.1 C756.5 504.1 756.6 504 756.7 503.9 C756.8 503.8 756.8 503.8 756.9 503.7 C757 503.7 757.1 503.6 757.2 503.6 C757.3 503.6 757.4 503.6 757.5 503.6 C757.6 503.6 757.7 503.6 757.8 503.6 C757.9 503.6 758 503.7 758.1 503.7 C758.2 503.8 758.3 503.8 758.3 503.9 C758.4 504 758.5 504.1 758.5 504.1 C758.6 504.2 758.6 504.3 758.6 504.4 C758.7 504.5 758.7 504.6 758.7 504.7Z M758 504.7 C758 504.8 758 504.8 758 504.9 C758 504.9 758 504.9 758 505 C757.9 505 757.9 505.1 757.9 505.1 C757.8 505.1 757.8 505.2 757.8 505.2 C757.7 505.2 757.7 505.2 757.6 505.2 C757.6 505.2 757.5 505.2 757.5 505.2 C757.5 505.2 757.4 505.2 757.4 505.2 C757.3 505.2 757.3 505.2 757.2 505.2 C757.2 505.2 757.2 505.1 757.1 505.1 C757.1 505.1 757.1 505 757.1 505 C757 504.9 757 504.9 757 504.9 C757 504.8 757 504.8 757 504.7 C757 504.7 757 504.6 757 504.6 C757 504.5 757 504.5 757.1 504.5 C757.1 504.4 757.1 504.4 757.1 504.4 C757.2 504.3 757.2 504.3 757.2 504.3 C757.3 504.3 757.3 504.2 757.4 504.2 C757.4 504.2 757.5 504.2 757.5 504.2 C757.5 504.2 757.6 504.2 757.6 504.2 C757.7 504.2 757.7 504.3 757.8 504.3 C757.8 504.3 757.8 504.3 757.9 504.4 C757.9 504.4 757.9 504.4 758 504.5 C758 504.5 758 504.5 758 504.6 C758 504.6 758 504.7 758 504.7Z M758.3 504.7 C758.3 504.8 758.3 504.9 758.3 504.9 C758.2 505 758.2 505.1 758.2 505.1 C758.1 505.2 758.1 505.2 758.1 505.3 C758 505.3 757.9 505.4 757.9 505.4 C757.8 505.4 757.8 505.5 757.7 505.5 C757.6 505.5 757.6 505.5 757.5 505.5 C757.4 505.5 757.4 505.5 757.3 505.5 C757.2 505.5 757.2 505.4 757.1 505.4 C757.1 505.4 757 505.3 757 505.3 C756.9 505.2 756.9 505.2 756.8 505.1 C756.8 505.1 756.8 505 756.8 504.9 C756.7 504.9 756.7 504.8 756.7 504.7 C756.7 504.7 756.7 504.6 756.8 504.5 C756.8 504.5 756.8 504.4 756.8 504.3 C756.9 504.3 756.9 504.2 757 504.2 C757 504.1 757.1 504.1 757.1 504.1 C757.2 504 757.2 504 757.3 504 C757.4 504 757.4 504 757.5 504 C757.6 504 757.6 504 757.7 504 C757.8 504 757.8 504 757.9 504.1 C757.9 504.1 758 504.1 758.1 504.2 C758.1 504.2 758.1 504.3 758.2 504.3 C758.2 504.4 758.2 504.5 758.3 504.5 C758.3 504.6 758.3 504.7 758.3 504.7Z M760.7 509.5 C760.7 509.6 760.7 509.8 760.7 509.8 C760.7 509.9 760.6 510 760.6 510.1 C760.5 510.2 760.5 510.3 760.4 510.4 C760.3 510.4 760.2 510.5 760.2 510.6 C760.1 510.6 760 510.6 759.9 510.7 C759.8 510.7 759.7 510.7 759.6 510.7 C759.5 510.7 759.4 510.7 759.3 510.7 C759.2 510.6 759.1 510.6 759 510.6 C758.9 510.5 758.8 510.4 758.7 510.4 C758.7 510.3 758.6 510.2 758.6 510.1 C758.5 510 758.5 509.9 758.4 509.8 C758.4 509.8 758.4 509.6 758.4 509.5 C758.4 509.4 758.4 509.3 758.4 509.2 C758.5 509.2 758.5 509.1 758.6 509 C758.6 508.9 758.7 508.8 758.7 508.7 C758.8 508.7 758.9 508.6 759 508.5 C759.1 508.5 759.2 508.5 759.3 508.4 C759.4 508.4 759.5 508.4 759.6 508.4 C759.7 508.4 759.8 508.4 759.9 508.4 C760 508.5 760.1 508.5 760.2 508.5 C760.2 508.6 760.3 508.7 760.4 508.7 C760.5 508.8 760.5 508.9 760.6 509 C760.6 509.1 760.7 509.2 760.7 509.2 C760.7 509.3 760.7 509.4 760.7 509.5Z M760.1 509.5 C760.1 509.6 760.1 509.6 760.1 509.7 C760.1 509.7 760 509.8 760 509.8 C760 509.8 760 509.9 759.9 509.9 C759.9 509.9 759.9 510 759.8 510 C759.8 510 759.7 510 759.7 510 C759.7 510.1 759.6 510.1 759.6 510.1 C759.5 510.1 759.5 510.1 759.4 510 C759.4 510 759.3 510 759.3 510 C759.3 510 759.2 509.9 759.2 509.9 C759.2 509.9 759.1 509.8 759.1 509.8 C759.1 509.8 759.1 509.7 759.1 509.7 C759.1 509.6 759.1 509.6 759.1 509.5 C759.1 509.5 759.1 509.5 759.1 509.4 C759.1 509.4 759.1 509.3 759.1 509.3 C759.1 509.3 759.2 509.2 759.2 509.2 C759.2 509.2 759.3 509.1 759.3 509.1 C759.3 509.1 759.4 509.1 759.4 509 C759.5 509 759.5 509 759.6 509 C759.6 509 759.7 509 759.7 509 C759.7 509.1 759.8 509.1 759.8 509.1 C759.9 509.1 759.9 509.2 759.9 509.2 C760 509.2 760 509.3 760 509.3 C760 509.3 760.1 509.4 760.1 509.4 C760.1 509.5 760.1 509.5 760.1 509.5Z M760.3 509.5 C760.3 509.6 760.3 509.7 760.3 509.7 C760.3 509.8 760.3 509.9 760.2 509.9 C760.2 510 760.2 510 760.1 510.1 C760.1 510.1 760 510.2 760 510.2 C759.9 510.3 759.8 510.3 759.8 510.3 C759.7 510.3 759.6 510.3 759.6 510.3 C759.5 510.3 759.4 510.3 759.4 510.3 C759.3 510.3 759.2 510.3 759.2 510.2 C759.1 510.2 759.1 510.1 759 510.1 C759 510 758.9 510 758.9 509.9 C758.9 509.9 758.8 509.8 758.8 509.7 C758.8 509.7 758.8 509.6 758.8 509.5 C758.8 509.5 758.8 509.4 758.8 509.3 C758.8 509.3 758.9 509.2 758.9 509.2 C758.9 509.1 759 509 759 509 C759.1 509 759.1 508.9 759.2 508.9 C759.2 508.8 759.3 508.8 759.4 508.8 C759.4 508.8 759.5 508.8 759.6 508.8 C759.6 508.8 759.7 508.8 759.8 508.8 C759.8 508.8 759.9 508.8 760 508.9 C760 508.9 760.1 509 760.1 509 C760.2 509 760.2 509.1 760.2 509.2 C760.3 509.2 760.3 509.3 760.3 509.3 C760.3 509.4 760.3 509.5 760.3 509.5Z M790.1 480.3 C790.7 481.4 792.8 484.7 793.7 487.2 C794.6 489.8 795.2 492.7 795.5 495.6 C795.8 498.4 795.7 501.6 795.4 504.6 C795 507.6 794.3 510.7 793.4 513.5 C792.4 516.4 791.1 519.3 789.6 521.8 C788.1 524.3 786.3 526.7 784.4 528.7 C782.5 530.7 780.4 532.5 778.2 533.8 C776 535.1 773.7 536 771.4 536.5 C769.1 537 766.8 537.1 764.6 536.8 C762.4 536.5 760.2 535.7 758.2 534.6 C756.3 533.4 754.4 531.8 752.9 530 C751.3 528.1 750 525.8 748.9 523.4 C747.9 521 747.1 516.7 746.7 515.4 M787.3 480.3 C787.8 481.3 789.8 483.9 790.7 486.1 C791.6 488.2 792.3 490.6 792.7 493.1 C793.2 495.6 793.3 498.3 793.2 500.9 C793.1 503.5 792.8 506.3 792.2 508.9 C791.6 511.6 790.7 514.2 789.6 516.7 C788.5 519.1 787.2 521.5 785.7 523.5 C784.3 525.6 782.6 527.5 780.8 529.1 C779 530.7 777.1 532 775.2 532.9 C773.2 533.9 771.2 534.5 769.2 534.8 C767.2 535 765.2 535 763.3 534.5 C761.5 534.1 759.6 533.3 758 532.2 C756.3 531.1 754.8 529.6 753.5 527.9 C752.2 526.2 751.1 524.2 750.2 522 C749.3 519.8 748.7 517.4 748.3 514.9 C748 512.4 748 508.3 748 507 M791.7 481.8 L794.9 480.3 L796.6 484.2 L794.1 486.8 M795 489.7 L798.2 489.4 L798.9 494 L796 495.6 M796.2 498.8 L799.2 499.8 L798.9 504.6 L795.8 505.2 M795.3 508.4 L797.8 510.5 L796.5 515.2 L793.5 514.6 M792.3 517.7 L794.2 520.8 L791.9 525 L789.4 523.2 M787.6 525.8 L788.6 529.6 L785.6 533 L783.6 530.3 M781.4 532.2 L781.6 536.4 L778 538.5 L776.9 535.1 M774.4 536.2 L773.6 540.4 L769.9 541.3 L769.6 537.4 M767.1 537.5 L765.4 541.4 L761.8 540.9 L762.4 536.9 M753.2 492.4 L750.6 487.7 M755.1 488.9 L753.1 483.8 M757.3 485.7 L755.9 480.3 M759.7 482.9 L759.1 477.3 M762.4 480.5 L762.5 475 M765.3 478.7 L766 473.3 M768.2 477.5 L769.7 472.2 M771.2 476.8 L773.3 471.9 M774.1 476.8 L776.9 472.3 M777 477.3 L780.2 473.4 M779.6 478.5 L783.4 475.2 M782.1 480.2 L786.2 477.6 M784.2 482.4 L788.7 480.6 M731.7 528.9 C731 528.4 728.8 526.8 727.6 525.5 C726.4 524.1 725.3 522.5 724.3 520.8 C723.4 519.1 722.6 517.2 722 515.2 C721.4 513.2 720.9 511 720.7 508.9 C720.4 506.7 720.3 504.4 720.4 502.1 C720.5 499.8 720.8 497.5 721.3 495.2 C721.8 492.9 722.4 490.7 723.2 488.5 C724 486.3 725.6 483.3 726.1 482.3 M760.3 536.3 L743.2 532.1 L741.4 530.6 L758.3 535.3Z M733.6 530.7 L742.2 531.6 L740.4 530.1 L731.6 529.7Z M756 533.8 L739.3 528.5 L737.8 526.5 L754.2 532.3Z M729.4 528 L738.3 528 L736.8 526 L727.7 526.4Z M752.3 530.2 L736.2 523.8 L735.1 521.4 L750.8 528.2Z M725.8 524.1 L735.2 523.3 L734 520.9 L724.4 522.1Z M749.3 525.5 L733.9 518.3 L733.2 515.6 L748.2 523.1Z M722.9 519.3 L732.9 517.8 L732.2 515.1 L722 516.8Z M747.1 520 L732.6 512.1 L732.4 509.2 L746.5 517.3Z M721 513.6 L731.6 511.6 L731.3 508.7 L720.4 510.9Z M746 513.9 L732.3 505.5 L732.5 502.5 L745.7 511Z M720 507.4 L731.3 505 L731.5 501.9 L719.9 504.5Z M745.8 507.4 L733 498.7 L733.7 495.7 L746 504.4Z M720 500.9 L732 498.2 L732.7 495.2 L720.3 497.9Z M726.5 482.3 C727.1 480.6 727.6 475.7 729.9 472 C732.2 468.3 736.5 463.4 740.3 459.9 C744 456.5 748.3 452.9 752.3 451.3 C756.4 449.8 760.7 449.8 764.4 450.5 C768.1 451.2 772.7 453.8 774.7 455.6 C776.8 457.5 776.4 460.7 776.8 461.7 M744.6 494.4 C745.3 492.4 746.7 486.4 748.9 482.3 C751 478.3 754.3 473.7 757.5 470.3 C760.7 466.8 764.7 463.3 767.8 461.7 C770.9 460 774.7 460.5 776.1 460.3 M726.5 482.3 C727.4 483.8 729.7 488.9 731.7 490.9 C733.7 493 736.4 493.8 738.6 494.4 C740.7 495 743.6 494.4 744.6 494.4 M729.9 484.1 C729.6 483.1 731.1 479.4 732.5 477.2 C733.9 475 739.5 467.6 742 465.1 C744.5 462.6 751.6 457 754.1 455.6 C756.5 454.2 761.5 453.1 762.7 453.1 C763.9 453 765.2 454.4 764.4 455.1 C763.6 455.8 758 457.6 755.8 459.1 C753.6 460.6 747.6 465.5 745.4 467.7 C743.3 469.9 738.9 475.9 737.7 478 C736.5 480.1 736 485.1 735.1 485.8 C734.2 486.5 730.2 485.1 729.9 484.1Z M727.4 430.7 C728.3 429.5 739.9 427.5 741.1 428.1 C742.4 428.7 742.2 436.3 742 437.6 C741.8 438.8 739.6 442.4 738.6 442.7 C737.6 443.1 730.9 442.9 729.9 441.9 C729 440.9 726.4 431.8 727.4 430.7Z M729.9 432.4 L739.4 430.7 L739.9 437.6 L737.7 440.7 L731.3 440.1Z M728.2 443.6 L737.7 442.7 L738.6 465.1 L729.1 466Z M729.6 445.3 L736.5 444.4 L737.2 463.7 L730.3 464.4Z M721.3 456.5 L728.2 455.1 M721.3 456.5 L722.2 466.8 L729.9 474.1 L736.8 472 L738.6 465.1 M723.9 463.4 L731.7 461.7 L732.5 469.4 L725.6 470.6Z M717 472 L723.1 477.2 L726.5 475.4 M722.9 476.3 C722.9 476.5 722.9 476.6 722.8 476.8 C722.7 476.9 722.7 477 722.6 477.2 C722.5 477.3 722.3 477.4 722.2 477.5 C722 477.6 721.9 477.7 721.7 477.8 C721.5 477.9 721.3 477.9 721.1 478 C720.9 478 720.7 478 720.5 478 C720.3 478 720.1 478 719.8 478 C719.6 477.9 719.4 477.9 719.3 477.8 C719.1 477.7 718.9 477.6 718.8 477.5 C718.6 477.4 718.5 477.3 718.4 477.2 C718.3 477 718.2 476.9 718.1 476.8 C718.1 476.6 718.1 476.5 718.1 476.3 C718.1 476.2 718.1 476 718.1 475.9 C718.2 475.7 718.3 475.6 718.4 475.4 C718.5 475.3 718.6 475.2 718.8 475.1 C718.9 475 719.1 474.9 719.3 474.8 C719.4 474.7 719.6 474.7 719.8 474.6 C720.1 474.6 720.3 474.6 720.5 474.6 C720.7 474.6 720.9 474.6 721.1 474.6 C721.3 474.7 721.5 474.7 721.7 474.8 C721.9 474.9 722 475 722.2 475.1 C722.3 475.2 722.5 475.3 722.6 475.4 C722.7 475.6 722.7 475.7 722.8 475.9 C722.9 476 722.9 476.2 722.9 476.3Z M705.8 480.6 C705.9 477.5 709.1 475.7 710.1 475.4 C711.2 475.2 715 476.5 716.2 478 C717.4 479.6 721.5 487.9 722.2 490.9 C722.9 494 723.2 505.6 723.1 508.2 C722.9 510.8 721.4 515.6 720.5 516.8 C719.5 518 714.7 521.3 713.6 520.2 C712.5 519.2 710.1 510.4 709.3 506.4 C708.5 502.5 705.7 483.7 705.8 480.6Z M676.6 445.3 C678.9 444.3 685.5 439 690.3 439.3 C695.2 439.6 701 444.4 705.8 447 C710.7 449.7 717.3 453.8 719.6 455.1 M680 450 C682 450.5 688 451.1 692.1 453.1 C696.1 455 701.8 457.1 704.1 461.7 C706.4 466.3 705.5 477.5 705.8 480.6 M680 454.8 C681.4 455.2 686.2 455.4 688.6 457.4 C691.1 459.4 693.3 462.7 694.6 466.8 C695.9 471 696.1 479.8 696.4 482.3 M669.7 549.5 L719.6 524 L722.2 516.8 M669.7 559.8 L723.1 534.3 L723.9 513.3 M697.2 528.8 L700.7 521.9 L703.3 523.7 M676.6 551.2 L687.8 546.1 L688.6 549.8 L677.4 555.5Z M690.3 439.3 L720.5 455.6 L721.3 466.8 M705.8 447 L704.1 461.7 M641.5 386 L611.3 417 L570.9 468.7 M688.8 380 L673.3 397.2 L613.1 464.4 M651.8 395.8 L613.1 439.4 L580.3 476.4 M659.6 402.7 L615.1 454.4 M613.1 464.4 L610.5 469.6 L611.3 473.9 M610.5 423.1 C607.2 425.4 595.7 432 590.7 436.8 C585.6 441.7 583.8 445.7 580.3 452.3 C576.9 458.9 571.7 472.4 570 476.4 M646.6 426.2 L661.3 439.4 L663 448 L663.9 462.7 L616.5 466.1 L613.1 464.4 M645.8 431.7 L657 444.1 L621.7 460.9Z M652.7 421.3 L663.9 438.6 L665.1 448.9 L664.4 462.7 M613.5 430.3 C613.4 430.2 613.3 429.9 613.2 429.7 C613.2 429.4 613.2 429.2 613.2 428.9 C613.3 428.7 613.4 428.4 613.5 428.2 C613.6 427.9 613.8 427.6 614 427.4 C614.1 427.1 614.4 426.8 614.6 426.6 C614.9 426.3 615.2 426.1 615.5 425.9 C615.8 425.7 616.1 425.5 616.4 425.4 C616.7 425.2 617 425.1 617.3 425 C617.7 424.9 618 424.8 618.3 424.8 C618.6 424.8 618.8 424.8 619.1 424.8 C619.3 424.9 619.6 425 619.8 425.1 C619.9 425.2 620.2 425.4 620.2 425.5 M613.9 430.8 L620.3 426.2 M670.1 419.1 C670.7 418.2 672.4 415.4 673.8 413.8 C675.1 412.2 676.6 410.8 678.2 409.7 C679.7 408.7 681.4 407.8 683 407.3 C684.7 406.7 686.4 406.5 688 406.6 C689.6 406.6 691.2 407 692.7 407.7 C694.1 408.3 695.5 409.3 696.8 410.5 C698 411.7 699.1 413.2 700 414.9 C700.8 416.6 701.5 418.5 702 420.5 C702.5 422.5 702.8 424.7 702.8 426.9 C702.8 429.1 702.6 431.4 702.2 433.6 C701.8 435.9 700.7 439.1 700.4 440.2 M670.6 422.5 C671.1 421.7 672.5 418.9 673.6 417.4 C674.7 415.8 676 414.4 677.3 413.3 C678.7 412.1 680.1 411.2 681.5 410.5 C683 409.9 684.5 409.5 685.9 409.3 C687.4 409.2 688.9 409.4 690.2 409.8 C691.5 410.2 692.9 410.9 694 411.9 C695.2 412.8 696.2 414 697.1 415.4 C698 416.7 698.7 418.4 699.2 420.1 C699.8 421.8 700.1 423.7 700.3 425.7 C700.4 427.6 700.4 429.7 700.1 431.7 C699.9 433.7 699.1 436.8 698.8 437.8 M672.8 415 L672 411.3 L674.3 408.8 L676 411.5 M677.7 410.1 L677.8 406.1 L680.5 404.6 L681.3 408 M683.2 407.2 L684.2 403.2 L686.9 402.8 L686.9 406.6 M688.8 406.6 L690.6 403 L693.2 403.8 L692.3 407.5 M694 408.4 L696.4 405.5 L698.6 407.3 L697 410.7 M698.3 412.3 L701.1 410.4 L702.7 413.1 L700.4 415.9 M701.3 418 L704.3 417.3 L705 420.6 L702.4 422.5 M702.7 425 L705.5 425.5 L705.5 429.2 L702.7 430 M702.4 432.6 L704.9 434.3 L704 438 L701.3 437.6 M672.5 431.8 C672.8 431.3 673.6 429.5 674.4 428.5 C675.1 427.5 675.9 426.6 676.8 425.8 C677.7 425.1 678.8 424.5 679.8 424 C680.8 423.6 681.9 423.3 683 423.2 C684 423.1 685.1 423.2 686.1 423.5 C687.2 423.7 688.2 424.2 689.1 424.7 C689.9 425.3 690.8 426.1 691.5 427 C692.2 427.8 692.8 428.9 693.2 429.9 C693.7 431 694 432.2 694.2 433.4 C694.4 434.7 694.2 436.6 694.3 437.2 M675 433.8 C675.3 433.4 675.9 432.1 676.4 431.3 C677 430.5 677.6 429.8 678.3 429.2 C679 428.6 679.8 428.1 680.6 427.8 C681.3 427.5 682.2 427.2 683 427.2 C683.8 427.1 684.6 427.1 685.4 427.3 C686.2 427.5 686.9 427.9 687.6 428.3 C688.3 428.8 688.9 429.3 689.4 430 C690 430.7 690.4 431.5 690.7 432.3 C691.1 433.1 691.3 434.1 691.5 435 C691.6 436 691.5 437.5 691.5 437.9 M673.1 429.1 L672.3 422.3 M675.9 425.5 L676.7 417.6 M679.4 423 L681.7 414.8 M683.2 421.9 L686.9 414.2 M687 422.3 L691.6 415.8 M690.4 424.1 L695.4 419.5 M693 427.2 L698 425 M694.6 431.2 L699.1 431.6 M695.1 435.8 L698.6 438.7 M674.1 427.6 L670.5 425.2 M676.8 424.6 L674 420.2 M680.1 422.7 L678.2 416.5 M683.6 421.9 L682.8 414.5 M687 422.3 L687.4 414.3 M690.1 423.9 L691.7 415.9 M692.6 426.5 L695.2 419.2 M694.3 430 L697.7 423.9 M695 434 L699 429.7 M684.5 434.9 C684.6 434.6 684.8 433.8 685 433.4 C685.3 432.9 685.5 432.4 685.8 432 C686.1 431.6 686.5 431.3 686.8 431 C687.2 430.7 687.6 430.4 688 430.2 C688.4 430 688.8 429.9 689.2 429.9 C689.6 429.8 690 429.9 690.3 430 C690.7 430.1 691.1 430.2 691.4 430.4 C691.7 430.7 692 431 692.3 431.3 C692.6 431.6 692.8 432.1 693 432.5 C693.1 432.9 693.3 433.4 693.4 433.9 C693.4 434.4 693.5 434.9 693.4 435.5 C693.4 436 693.2 436.8 693.2 437.1 M686.2 435.3 C686.2 435.1 686.4 434.6 686.5 434.3 C686.7 434 686.8 433.7 687 433.4 C687.2 433.1 687.4 432.9 687.7 432.7 C687.9 432.5 688.1 432.3 688.4 432.2 C688.6 432 688.9 432 689.1 431.9 C689.4 431.9 689.6 431.9 689.8 432 C690.1 432 690.3 432.1 690.5 432.3 C690.7 432.4 690.9 432.6 691 432.8 C691.2 433.1 691.3 433.3 691.4 433.6 C691.5 433.9 691.6 434.2 691.7 434.5 C691.7 434.9 691.7 435.2 691.7 435.6 C691.7 435.9 691.5 436.5 691.5 436.6 M666.4 440.3 L673.3 438.6 L697.4 438.2 L718.1 452.3 M664.7 448.9 L680.2 446.3 L687.1 448.9 L663.9 462.7 M697.4 438.2 L707.8 442 L730 456.6 M687.1 448.9 L704.3 457.5 L730 476.4 M613.1 473.9 C615.6 473.2 633.8 468.3 638.9 467 C644 465.7 658.9 462.4 663.9 460.9 C668.9 459.5 685.8 452.9 688.8 452.3 C691.9 451.8 693.6 454.1 694.3 455.8 C695.1 457.5 696.4 468.2 696.6 469.6 M614.8 476.4 C617.5 475.8 637.2 470.9 642.3 469.6 C647.5 468.3 662 464.8 666.4 463.5 C670.9 462.3 684.7 457.6 687.1 457.2 C689.5 456.8 690 458.2 690.6 459.6 C691.1 461 692.5 469.6 692.3 471.3 C692.1 473 692.8 474.4 688.8 476.4 C684.9 478.5 656.3 490.4 652.7 491.9 M696.6 469.6 C696.3 470.2 695.6 475.1 694 476.4 C692.4 477.8 684.5 481.4 680.2 483.3 C675.9 485.2 653.9 494.2 650.9 495.4 M704.3 457.5 C704.7 458.7 707.6 467.3 707.8 469.6 C708 471.8 707.8 477.8 706.1 479.9 C704.3 482 694.5 488.2 690.6 490.2 C686.6 492.3 670.2 499 666.4 500.6 C662.7 502.1 654 505.2 652.7 505.7 M609.6 493.7 C610.5 494.8 613.5 497.4 614.8 500.6 C616.1 503.7 616.8 509.7 617.4 512.6 C617.9 515.5 618.1 516.9 618.2 517.8 M606.2 495.4 C607 496.8 610 500.3 611.3 504 C612.6 507.7 613.5 515.5 613.9 517.8 M659.6 500.6 C660.3 499.6 665.2 497.6 666.4 497.1 C667.7 496.6 670.9 495.6 671.6 495.7 C672.3 495.9 673.4 498.1 673.3 498.8 C673.3 499.6 671.7 502.4 670.8 503.1 C669.8 503.9 665.1 506.2 663.9 506.6 C662.7 506.9 659.1 507.2 658.7 506.6 C658.3 506 658.8 501.5 659.6 500.6Z M662.1 501.4 C662.4 500.9 666.4 499.1 667.3 498.8 C668.2 498.5 670.5 498.2 670.8 498.5 C671 498.8 670.5 501.4 669.9 501.9 C669.3 502.5 665.5 504.4 664.7 504.3 C664 504.3 661.9 502 662.1 501.4Z M706.1 478.2 C706.1 475.2 709.3 474.5 710.4 474.4 C711.4 474.3 715.3 475.7 716.4 477.3 C717.5 478.9 720.9 487.2 721.6 490.2 C722.2 493.2 723.4 504.9 723.3 507.4 C723.2 510 721.6 514.8 720.7 516.1 C719.8 517.3 714.9 521.1 713.8 519.8 C712.7 518.6 710.3 508.2 709.5 504 C708.7 499.8 706 481.1 706.1 478.2Z M647.5 491.1 C647.5 491.4 647.4 491.8 647.2 492.1 C647 492.4 646.7 492.7 646.3 493 C646 493.3 645.5 493.5 645 493.8 C644.5 494 643.8 494.2 643.2 494.4 C642.6 494.5 641.8 494.7 641.1 494.7 C640.4 494.8 639.6 494.9 638.9 494.9 C638.1 494.9 637.4 494.8 636.7 494.7 C635.9 494.7 635.2 494.5 634.6 494.4 C633.9 494.2 633.3 494 632.8 493.8 C632.3 493.5 631.8 493.3 631.4 493 C631.1 492.7 630.8 492.4 630.6 492.1 C630.4 491.8 630.3 491.4 630.3 491.1 C630.3 490.8 630.4 490.4 630.6 490.1 C630.8 489.8 631.1 489.5 631.4 489.2 C631.8 488.9 632.3 488.6 632.8 488.4 C633.3 488.2 633.9 488 634.6 487.8 C635.2 487.6 635.9 487.5 636.7 487.4 C637.4 487.3 638.1 487.3 638.9 487.3 C639.6 487.3 640.4 487.3 641.1 487.4 C641.8 487.5 642.6 487.6 643.2 487.8 C643.8 488 644.5 488.2 645 488.4 C645.5 488.6 646 488.9 646.3 489.2 C646.7 489.5 647 489.8 647.2 490.1 C647.4 490.4 647.5 490.8 647.5 491.1Z M647.8 494.5 C647.8 494.7 647.7 495.2 647.5 495.5 C647.3 495.8 647 496.1 646.6 496.4 C646.3 496.7 645.8 497 645.2 497.2 C644.7 497.4 644 497.6 643.4 497.8 C642.7 498 642 498.1 641.2 498.2 C640.5 498.3 639.7 498.3 638.9 498.3 C638.1 498.3 637.3 498.3 636.6 498.2 C635.8 498.1 635.1 498 634.4 497.8 C633.7 497.6 633.1 497.4 632.6 497.2 C632 497 631.5 496.7 631.1 496.4 C630.7 496.1 630.4 495.8 630.2 495.5 C630 495.2 630 494.7 629.9 494.5 M630.3 491.1 L629.9 494.5 M647.5 491.1 L647.8 494.5 M648.5 498.8 C648.5 499 648.4 499.5 648.2 499.8 C648 500.1 647.7 500.4 647.3 500.7 C646.9 501 646.4 501.3 645.8 501.5 C645.2 501.7 644.6 502 643.9 502.1 C643.2 502.3 642.4 502.4 641.6 502.5 C640.9 502.6 640 502.6 639.2 502.6 C638.4 502.6 637.6 502.6 636.8 502.5 C636.1 502.4 635.3 502.3 634.6 502.1 C633.9 502 633.2 501.7 632.7 501.5 C632.1 501.3 631.6 501 631.2 500.7 C630.8 500.4 630.5 500.1 630.3 499.8 C630 499.5 630 499 629.9 498.8 M648.8 501.7 C648.9 501.9 649.3 502.5 649.4 502.8 C649.4 503.2 649.4 503.6 649.2 504 C649 504.3 648.7 504.7 648.3 505 C647.9 505.4 647.4 505.7 646.8 506 C646.2 506.2 645.5 506.5 644.8 506.7 C644 506.9 643.2 507 642.4 507.1 C641.5 507.2 640.6 507.3 639.8 507.3 C638.9 507.3 638 507.2 637.1 507.1 C636.3 507 635.5 506.9 634.7 506.7 C634 506.5 633.3 506.2 632.7 506 C632.1 505.7 631.6 505.4 631.2 505 C630.8 504.7 630.5 504.3 630.3 504 C630.1 503.6 630.1 503.2 630.1 502.8 C630.2 502.5 630.6 501.9 630.7 501.7 M648.4 506.6 C648.3 506.7 648.3 507.2 648.1 507.5 C647.9 507.8 647.6 508.1 647.2 508.3 C646.8 508.6 646.4 508.8 645.8 509 C645.3 509.2 644.7 509.4 644.1 509.6 C643.4 509.7 642.7 509.8 642 509.9 C641.3 510 640.5 510 639.8 510 C639 510 638.2 510 637.5 509.9 C636.8 509.8 636.1 509.7 635.4 509.6 C634.8 509.4 634.2 509.2 633.7 509 C633.1 508.8 632.7 508.6 632.3 508.3 C631.9 508.1 631.6 507.8 631.4 507.5 C631.2 507.2 631.2 506.7 631.1 506.6 M642.3 510 C642.9 510.5 645.6 511 645.8 512.6 C645.9 514.2 644.1 517.2 643.2 519.5 C642.3 521.8 641 525.2 640.6 526.4 M645.8 509.2 C646.2 509.9 648.4 511.6 648.4 513.5 C648.4 515.3 646.6 517.9 645.8 520.4 C644.9 522.8 643.6 526.8 643.2 528.1 M639.4 490.7 C639.4 490.8 639.4 490.9 639.4 490.9 C639.4 491 639.3 491 639.3 491.1 C639.3 491.1 639.2 491.2 639.2 491.2 C639.1 491.3 639 491.3 639 491.3 C638.9 491.4 638.8 491.4 638.8 491.4 C638.7 491.4 638.6 491.4 638.5 491.4 C638.5 491.4 638.4 491.4 638.3 491.4 C638.3 491.4 638.2 491.4 638.1 491.3 C638.1 491.3 638 491.3 637.9 491.2 C637.9 491.2 637.8 491.1 637.8 491.1 C637.8 491 637.7 491 637.7 490.9 C637.7 490.9 637.7 490.8 637.7 490.7 C637.7 490.7 637.7 490.6 637.7 490.6 C637.7 490.5 637.8 490.4 637.8 490.4 C637.8 490.3 637.9 490.3 637.9 490.3 C638 490.2 638.1 490.2 638.1 490.1 C638.2 490.1 638.3 490.1 638.3 490.1 C638.4 490.1 638.5 490.1 638.5 490.1 C638.6 490.1 638.7 490.1 638.8 490.1 C638.8 490.1 638.9 490.1 639 490.1 C639 490.2 639.1 490.2 639.2 490.3 C639.2 490.3 639.3 490.3 639.3 490.4 C639.3 490.4 639.4 490.5 639.4 490.6 C639.4 490.6 639.4 490.7 639.4 490.7Z M609.6 486.8 C609.9 486.1 613.6 484.9 614.8 485.1 C616 485.2 620.8 487.6 621.7 488.5 C622.5 489.4 623.7 493 623.4 493.7 C623 494.4 619.3 495.6 618.2 495.4 C617.1 495.2 613.1 492.8 612.2 491.9 C611.3 491.1 609.4 487.5 609.6 486.8Z M629.2 487.6 C629.2 488 629.2 488.3 629.2 488.6 C629.1 488.9 629 489.3 628.9 489.5 C628.8 489.8 628.7 490.1 628.5 490.3 C628.4 490.6 628.2 490.8 628 490.9 C627.9 491.1 627.7 491.2 627.5 491.3 C627.3 491.4 627 491.4 626.8 491.4 C626.6 491.4 626.4 491.4 626.2 491.3 C626 491.2 625.8 491.1 625.6 490.9 C625.4 490.8 625.3 490.6 625.1 490.3 C625 490.1 624.9 489.8 624.7 489.5 C624.6 489.3 624.6 488.9 624.5 488.6 C624.5 488.3 624.4 488 624.4 487.6 C624.4 487.3 624.5 487 624.5 486.7 C624.6 486.3 624.6 486 624.7 485.7 C624.9 485.5 625 485.2 625.1 485 C625.3 484.7 625.4 484.5 625.6 484.4 C625.8 484.2 626 484.1 626.2 484 C626.4 483.9 626.6 483.9 626.8 483.9 C627 483.9 627.3 483.9 627.5 484 C627.7 484.1 627.9 484.2 628 484.4 C628.2 484.5 628.4 484.7 628.5 485 C628.7 485.2 628.8 485.5 628.9 485.7 C629 486 629.1 486.3 629.2 486.7 C629.2 487 629.2 487.3 629.2 487.6Z M626.8 488.2 C626.8 488.5 626.8 488.8 626.8 489.1 C626.7 489.3 626.6 489.6 626.6 489.9 C626.5 490.1 626.4 490.4 626.2 490.6 C626.1 490.8 626 491 625.8 491.1 C625.6 491.3 625.5 491.4 625.3 491.5 C625.1 491.6 624.9 491.6 624.8 491.6 C624.6 491.6 624.4 491.6 624.2 491.5 C624.1 491.4 623.9 491.3 623.7 491.1 C623.6 491 623.4 490.8 623.3 490.6 C623.2 490.4 623.1 490.1 623 489.9 C622.9 489.6 622.8 489.3 622.8 489.1 C622.7 488.8 622.7 488.5 622.7 488.2 C622.7 487.9 622.7 487.6 622.8 487.3 C622.8 487 622.9 486.7 623 486.4 C623.1 486.2 623.2 485.9 623.3 485.7 C623.4 485.5 623.6 485.3 623.7 485.2 C623.9 485 624.1 484.9 624.2 484.8 C624.4 484.8 624.6 484.7 624.8 484.7 C624.9 484.7 625.1 484.8 625.3 484.8 C625.5 484.9 625.6 485 625.8 485.2 C626 485.3 626.1 485.5 626.2 485.7 C626.4 485.9 626.5 486.2 626.6 486.4 C626.6 486.7 626.7 487 626.8 487.3 C626.8 487.6 626.8 487.9 626.8 488.2Z M606.2 476.4 L612.2 479.9 L613.9 485.1 M621.7 481.6 L626.8 483.3 L629.4 490.2 M613.9 479 C613.9 479.2 613.9 479.3 613.9 479.4 C613.8 479.5 613.8 479.6 613.7 479.7 C613.6 479.8 613.5 479.9 613.4 480 C613.3 480.1 613.2 480.2 613.1 480.2 C612.9 480.3 612.8 480.3 612.6 480.4 C612.5 480.4 612.3 480.4 612.2 480.4 C612 480.4 611.9 480.4 611.8 480.4 C611.6 480.3 611.5 480.3 611.3 480.2 C611.2 480.2 611.1 480.1 611 480 C610.9 479.9 610.8 479.8 610.7 479.7 C610.6 479.6 610.6 479.5 610.5 479.4 C610.5 479.3 610.5 479.2 610.5 479 C610.5 478.9 610.5 478.8 610.5 478.7 C610.6 478.6 610.6 478.4 610.7 478.3 C610.8 478.2 610.9 478.1 611 478.1 C611.1 478 611.2 477.9 611.3 477.8 C611.5 477.8 611.6 477.7 611.8 477.7 C611.9 477.7 612 477.7 612.2 477.7 C612.3 477.7 612.5 477.7 612.6 477.7 C612.8 477.7 612.9 477.8 613.1 477.8 C613.2 477.9 613.3 478 613.4 478.1 C613.5 478.1 613.6 478.2 613.7 478.3 C613.8 478.4 613.8 478.6 613.9 478.7 C613.9 478.8 613.9 478.9 613.9 479Z M624.9 482 C624.9 482.1 624.9 482.2 624.9 482.3 C624.9 482.4 624.8 482.5 624.7 482.6 C624.7 482.8 624.6 482.8 624.5 482.9 C624.4 483 624.3 483.1 624.2 483.2 C624 483.2 623.9 483.3 623.8 483.3 C623.7 483.3 623.5 483.3 623.4 483.3 C623.3 483.3 623.1 483.3 623 483.3 C622.9 483.3 622.7 483.2 622.6 483.2 C622.5 483.1 622.4 483 622.3 482.9 C622.2 482.8 622.1 482.8 622 482.6 C622 482.5 621.9 482.4 621.9 482.3 C621.9 482.2 621.8 482.1 621.8 482 C621.8 481.8 621.9 481.7 621.9 481.6 C621.9 481.5 622 481.4 622 481.3 C622.1 481.2 622.2 481.1 622.3 481 C622.4 480.9 622.5 480.8 622.6 480.8 C622.7 480.7 622.9 480.7 623 480.6 C623.1 480.6 623.3 480.6 623.4 480.6 C623.5 480.6 623.7 480.6 623.8 480.6 C623.9 480.7 624 480.7 624.2 480.8 C624.3 480.8 624.4 480.9 624.5 481 C624.6 481.1 624.7 481.2 624.7 481.3 C624.8 481.4 624.9 481.5 624.9 481.6 C624.9 481.7 624.9 481.8 624.9 482Z M608.8 474.7 L610.5 483.3 M624.3 479.9 L626 490.2 M718.1 452.3 L721.6 462.7 L725 476.4 M721.6 460.9 C723 460.5 728.6 456.9 730 458.4 C731.4 459.8 731.1 467.4 730 469.6 C728.9 471.7 724.4 471 723.3 471.3 M690.6 529.8 L700.9 522.9 L725 517.8 M700.4 522.9 C700.4 523.1 700.4 523.2 700.3 523.3 C700.3 523.4 700.2 523.5 700.1 523.6 C700 523.7 699.9 523.8 699.8 523.9 C699.6 524 699.5 524.1 699.3 524.1 C699.2 524.2 699 524.2 698.8 524.3 C698.7 524.3 698.5 524.3 698.3 524.3 C698.1 524.3 697.9 524.3 697.8 524.3 C697.6 524.2 697.4 524.2 697.3 524.1 C697.1 524.1 697 524 696.8 523.9 C696.7 523.8 696.6 523.7 696.5 523.6 C696.4 523.5 696.4 523.4 696.3 523.3 C696.3 523.2 696.2 523.1 696.2 522.9 C696.2 522.8 696.3 522.7 696.3 522.6 C696.4 522.5 696.4 522.4 696.5 522.3 C696.6 522.2 696.7 522.1 696.8 522 C697 521.9 697.1 521.8 697.3 521.8 C697.4 521.7 697.6 521.6 697.8 521.6 C697.9 521.6 698.1 521.6 698.3 521.6 C698.5 521.6 698.7 521.6 698.8 521.6 C699 521.6 699.2 521.7 699.3 521.8 C699.5 521.8 699.6 521.9 699.8 522 C699.9 522.1 700 522.2 700.1 522.3 C700.2 522.4 700.3 522.5 700.3 522.6 C700.4 522.7 700.4 522.8 700.4 522.9Z M490.3 518.9 C489.9 521 488 526.7 487.8 531 C487.5 535.3 487.6 540.5 488.6 544.8 C489.6 549.1 490.9 553.4 493.8 556.8 C496.6 560.3 501 563.4 505.8 565.4 C510.7 567.5 519 568.8 523.1 569.2 C527.1 569.7 528.8 568.2 529.9 568 M521.3 522.4 C521.5 525 522.1 533 522.4 537.9 C522.7 542.8 522.1 547.6 523.1 551.7 C524 555.7 527.4 560.6 528.2 562.3 M498.9 522.4 C498.7 524.4 497.2 530.4 497.2 534.4 C497.3 538.5 497.9 542.8 499.3 546.5 C500.7 550.2 502.7 554 505.8 556.8 C508.9 559.7 515.9 562.6 517.9 563.7 M492.9 520.7 C493.8 520.9 497.6 521.5 499.8 522.4 C502 523.3 507.4 526.9 509.3 527.2 C511.2 527.5 512.3 525.3 513.9 524.5 C515.6 523.6 520.6 521.5 521.7 521 M491.9 523.4 C492.9 523.7 497.1 524.3 499.5 525.1 C501.8 526 507.3 529.7 509.3 530 C511.2 530.2 512.3 528.1 513.9 527.2 C515.6 526.3 520.6 523.9 521.7 523.4 M492.9 520.7 L491.2 521.7 L491.9 523.4 M490.6 527 C491.6 527.3 495.3 527.9 497.5 528.8 C499.7 529.6 504.8 533.4 507 533.6 C509.2 533.8 512 531.2 513.9 530.3 C515.9 529.4 520.6 527.3 521.7 526.9 M489.6 529.8 C490.6 530 494.9 530.6 497.2 531.5 C499.5 532.4 504.8 536.1 507 536.3 C509.2 536.5 512 534 513.9 533.1 C515.9 532.1 520.6 529.8 521.7 529.3 M490.6 527 L488.9 528.1 L489.6 529.8 M489.1 533.4 C490 533.6 493.8 534.3 496 535.1 C498.2 536 503.1 539.8 505.5 540 C507.9 540.1 511.8 537.1 513.9 536.2 C516.1 535.2 520.6 533.2 521.7 532.7 M488.1 536.2 C489.1 536.4 493.3 537 495.7 537.9 C498 538.8 503 542.6 505.5 542.7 C507.9 542.9 511.8 539.9 513.9 538.9 C516.1 537.9 520.6 535.6 521.7 535.1 M489.1 533.4 L487.4 534.4 L488.1 536.2 M488.4 539.8 C489.3 540 493.1 540.6 495.3 541.5 C497.4 542.4 502.2 546.3 504.7 546.3 C507.2 546.4 511.7 543.1 513.9 542 C516.2 541 520.6 539 521.7 538.6 M487.3 542.5 C488.3 542.8 492.6 543.4 494.9 544.3 C497.2 545.1 502.2 549 504.7 549.1 C507.3 549.2 511.7 545.9 513.9 544.8 C516.2 543.7 520.6 541.5 521.7 541 M488.4 539.8 L486.6 540.8 L487.3 542.5 M488.4 546.2 C489.3 546.4 493.1 547 495.3 547.9 C497.4 548.8 502.2 552.7 504.7 552.7 C507.2 552.7 511.7 549 513.9 547.9 C516.2 546.8 520.6 544.9 521.7 544.4 M487.3 548.9 C488.3 549.1 492.6 549.8 494.9 550.6 C497.2 551.5 502.2 555.5 504.7 555.5 C507.3 555.5 511.7 551.8 513.9 550.6 C516.2 549.5 520.6 547.4 521.7 546.8 M488.4 546.2 L486.6 547.2 L487.3 548.9 M492.2 552.5 C493.1 552.8 496.9 553.4 499.1 554.3 C501.3 555.1 506.6 559.1 508.6 559.1 C510.6 559 512.2 554.9 513.9 553.7 C515.7 552.6 520.6 550.7 521.7 550.3 M491.2 555.3 C492.2 555.5 496.4 556.1 498.8 557 C501.1 557.9 506.6 561.9 508.6 561.8 C510.6 561.8 512.2 557.7 513.9 556.5 C515.7 555.3 520.6 553.2 521.7 552.7 M492.2 552.5 L490.5 553.6 L491.2 555.3 M496.8 558.9 C497.8 559.1 501.5 559.8 503.7 560.6 C505.9 561.5 511.6 565.6 513.2 565.4 C514.8 565.3 514.6 560.8 516 559.6 C517.4 558.4 522.7 556.6 523.7 556.1 M495.8 561.7 C496.8 561.9 501.1 562.5 503.4 563.4 C505.7 564.3 511.5 568.3 513.2 568.2 C514.9 568.1 514.6 563.6 516 562.3 C517.4 561.1 522.7 559.1 523.7 558.6 M496.8 558.9 L495.1 559.9 L495.8 561.7 M502.2 565.3 C503.1 565.5 506.9 566.1 509.1 567 C511.3 567.9 517.4 572 518.6 571.8 C519.8 571.6 517.1 566.8 518.1 565.4 C519 564.1 524.8 562.5 525.8 562 M501.2 568 C502.2 568.3 506.4 568.9 508.8 569.8 C511.1 570.6 517.3 574.8 518.6 574.6 C519.8 574.4 517.1 569.6 518.1 568.2 C519 566.8 524.8 564.9 525.8 564.4 M502.2 565.3 L500.5 566.3 L501.2 568 M490.3 517.2 C491.8 517.7 494.9 519.5 498.9 520.3 C503 521.2 510.7 522.3 514.4 522.4 C518.2 522.4 520.2 521 521.3 520.7 M877.5 558.4 C877.3 559.1 877.2 561 876.6 562.2 C875.9 563.4 875 564.6 873.8 565.7 C872.6 566.8 871.1 567.8 869.4 568.7 C867.7 569.6 865.7 570.3 863.6 571 C861.5 571.6 859.2 572.1 856.9 572.4 C854.6 572.7 852.1 572.9 849.7 572.9 C847.3 572.9 844.9 572.7 842.5 572.4 C840.2 572.1 837.9 571.6 835.8 571 C833.8 570.3 831.8 569.6 830.1 568.7 C828.4 567.8 826.9 566.8 825.7 565.7 C824.5 564.6 823.5 563.4 822.9 562.2 C822.3 561 822.1 559.1 822 558.4 M874.3 558.4 C874.3 559.5 874 560.6 873.4 561.6 C872.9 562.7 872 563.7 871 564.6 C869.9 565.6 868.6 566.5 867.1 567.2 C865.6 568 863.8 568.6 862 569.2 C860.2 569.7 858.1 570.1 856.1 570.4 C854 570.7 851.8 570.8 849.7 570.8 C847.6 570.8 845.4 570.7 843.4 570.4 C841.3 570.1 839.3 569.7 837.5 569.2 C835.6 568.6 833.9 568 832.4 567.2 C830.9 566.5 829.5 565.6 828.5 564.6 C827.4 563.7 826.6 562.7 826 561.6 C825.5 560.6 825.2 559.5 825.2 558.4 C825.2 557.4 825.5 556.3 826 555.2 C826.6 554.2 827.4 553.2 828.5 552.2 C829.5 551.3 830.9 550.4 832.4 549.7 C833.9 548.9 835.6 548.2 837.5 547.7 C839.3 547.2 841.3 546.7 843.4 546.5 C845.4 546.2 847.6 546 849.7 546 C851.8 546 854 546.2 856.1 546.5 C858.1 546.7 860.2 547.2 862 547.7 C863.8 548.2 865.6 548.9 867.1 549.7 C868.6 550.4 869.9 551.3 871 552.2 C872 553.2 872.9 554.2 873.4 555.2 C874 556.3 874.3 557.4 874.3 558.4Z M874 563.7 C873.5 564.2 872.1 565.9 870.7 566.9 C869.4 567.9 867.7 568.8 865.9 569.5 C864.2 570.3 862.1 570.9 860 571.4 C857.8 571.9 855.5 572.2 853.2 572.4 C850.9 572.6 848.5 572.6 846.2 572.4 C843.9 572.2 841.6 571.9 839.5 571.4 C837.4 570.9 835.3 570.3 833.5 569.5 C831.7 568.8 830.1 567.9 828.7 566.9 C827.4 565.9 826 564.2 825.5 563.7 M822 558.4 L822.7 575.2 M877.5 558.4 L878.3 570.7 M881.7 573.1 C881.7 573.8 882.1 575.8 881.8 577.1 C881.4 578.4 880.7 579.8 879.6 581 C878.6 582.2 877.1 583.4 875.4 584.5 C873.7 585.5 871.7 586.5 869.5 587.3 C867.3 588.1 864.7 588.8 862.1 589.3 C859.6 589.8 856.7 590.2 854 590.3 C851.2 590.5 848.3 590.5 845.5 590.3 C842.7 590.2 839.9 589.8 837.3 589.3 C834.7 588.8 832.2 588.1 830 587.3 C827.8 586.5 825.7 585.5 824 584.5 C822.3 583.4 820.9 582.2 819.8 581 C818.8 579.8 818 578.4 817.7 577.1 C817.3 575.8 817.7 573.8 817.8 573.1 M882 576.5 C881.8 577.2 881.6 579.3 880.9 580.6 C880.2 581.9 879.1 583.2 877.7 584.4 C876.3 585.6 874.5 586.7 872.6 587.7 C870.6 588.6 868.3 589.5 865.9 590.2 C863.5 590.9 860.8 591.4 858.1 591.7 C855.4 592.1 852.5 592.3 849.7 592.3 C846.9 592.3 844.1 592.1 841.4 591.7 C838.7 591.4 836 590.9 833.6 590.2 C831.2 589.5 828.9 588.6 826.9 587.7 C824.9 586.7 823.2 585.6 821.8 584.4 C820.4 583.2 819.3 581.9 818.5 580.6 C817.8 579.3 817.6 577.2 817.4 576.5 M880.1 581 C879.8 581.6 879.2 583.6 878.3 584.8 C877.3 586 876 587.2 874.4 588.2 C872.8 589.3 870.9 590.3 868.8 591.1 C866.6 591.9 864.2 592.5 861.7 593.1 C859.2 593.6 856.5 593.9 853.8 594.1 C851.1 594.3 848.3 594.3 845.6 594.1 C842.9 593.9 840.2 593.6 837.7 593.1 C835.2 592.5 832.8 591.9 830.7 591.1 C828.6 590.3 826.6 589.3 825 588.2 C823.5 587.2 822.1 586 821.2 584.8 C820.2 583.6 819.7 581.6 819.4 581 M875.8 586.5 C875.4 587 874.6 588.8 873.5 589.8 C872.5 590.9 871 591.9 869.4 592.7 C867.8 593.6 865.8 594.4 863.8 595 C861.7 595.6 859.4 596.1 857 596.4 C854.7 596.8 852.2 596.9 849.7 596.9 C847.3 596.9 844.8 596.8 842.4 596.4 C840.1 596.1 837.8 595.6 835.7 595 C833.6 594.4 831.7 593.6 830.1 592.7 C828.4 591.9 827 590.9 825.9 589.8 C824.9 588.8 824 587 823.7 586.5 M874.7 589.4 C874.3 589.9 873.2 591.4 872.1 592.3 C871 593.3 869.6 594.1 868 594.9 C866.4 595.6 864.6 596.3 862.6 596.8 C860.7 597.4 858.6 597.8 856.4 598.1 C854.3 598.3 852 598.5 849.7 598.5 C847.5 598.5 845.2 598.3 843 598.1 C840.9 597.8 838.7 597.4 836.8 596.8 C834.9 596.3 833 595.6 831.5 594.9 C829.9 594.1 828.5 593.3 827.4 592.3 C826.2 591.4 825.2 589.9 824.8 589.4 M874.6 588.6 L874 590.4 M873.4 590 L872.8 591.7 M871.9 591.2 L871.3 593 M870 592.4 L869.5 594.1 M867.9 593.5 L867.5 595.1 M865.5 594.4 L865.2 596.1 M863 595.2 L862.6 596.8 M860.2 595.9 L860 597.5 M857.3 596.4 L857.1 598 M854.3 596.7 L854.2 598.3 M851.3 596.9 L851.2 598.5 M848.2 596.9 L848.2 598.5 M845.1 596.7 L845.2 598.3 M842.1 596.4 L842.3 598 M839.2 595.9 L839.5 597.5 M836.5 595.2 L836.8 596.8 M833.9 594.4 L834.3 596.1 M831.6 593.5 L832 595.1 M829.4 592.4 L829.9 594.1 M827.6 591.2 L828.1 593 M826.1 590 L826.6 591.7 M824.8 588.6 L825.5 590.4 M836.8 597.8 C837.1 598.7 837.6 601.6 838.8 603 C839.9 604.4 841.1 605.7 843.9 606.2 C846.7 606.8 852.7 606.8 855.5 606.2 C858.3 605.7 859.4 604.4 860.7 603 C862 601.6 862.9 598.7 863.3 597.8 M849.3 599.1 L849.3 606.2 M843.9 600.4 L844.6 605.8 M855.5 600.4 L855.3 605.8 M830.4 573.3 L837.5 575.9 L837.5 584.9 L831 583Z M849.1 552.6 L848.8 556.5 M851.7 543.8 L855.5 538.2 L863.9 538.2 M880.1 561.4 L920 559.7 L929.8 559.5 M880.1 561.4 L920 563 L929.8 563.3 M820.2 613.3 C820.2 613.5 820.1 613.7 820.1 613.8 C820 614 820 614.1 819.9 614.2 C819.8 614.4 819.7 614.5 819.5 614.6 C819.4 614.7 819.3 614.8 819.1 614.9 C819 615 818.8 615 818.6 615.1 C818.4 615.1 818.3 615.1 818.1 615.1 C817.9 615.1 817.7 615.1 817.5 615.1 C817.4 615 817.2 615 817.1 614.9 C816.9 614.8 816.7 614.7 816.6 614.6 C816.5 614.5 816.4 614.4 816.3 614.2 C816.2 614.1 816.1 614 816.1 613.8 C816 613.7 816 613.5 816 613.3 C816 613.2 816 613 816.1 612.9 C816.1 612.7 816.2 612.6 816.3 612.4 C816.4 612.3 816.5 612.2 816.6 612.1 C816.7 611.9 816.9 611.8 817.1 611.8 C817.2 611.7 817.4 611.6 817.5 611.6 C817.7 611.5 817.9 611.5 818.1 611.5 C818.3 611.5 818.4 611.5 818.6 611.6 C818.8 611.6 819 611.7 819.1 611.8 C819.3 611.8 819.4 611.9 819.5 612.1 C819.7 612.2 819.8 612.3 819.9 612.4 C820 612.6 820 612.7 820.1 612.9 C820.1 613 820.2 613.2 820.2 613.3Z M828.8 608.8 C828.8 609 828.8 609.3 828.7 609.5 C828.7 609.7 828.6 609.9 828.5 610.1 C828.4 610.3 828.3 610.5 828.1 610.6 C828 610.8 827.8 610.9 827.6 611.1 C827.5 611.2 827.3 611.3 827.1 611.3 C826.9 611.4 826.7 611.4 826.5 611.4 C826.3 611.4 826.1 611.4 825.9 611.3 C825.7 611.3 825.5 611.2 825.3 611.1 C825.1 610.9 825 610.8 824.8 610.6 C824.7 610.5 824.6 610.3 824.5 610.1 C824.4 609.9 824.3 609.7 824.2 609.5 C824.2 609.3 824.2 609 824.2 608.8 C824.2 608.6 824.2 608.4 824.2 608.1 C824.3 607.9 824.4 607.7 824.5 607.5 C824.6 607.3 824.7 607.1 824.8 607 C825 606.8 825.1 606.7 825.3 606.6 C825.5 606.5 825.7 606.4 825.9 606.3 C826.1 606.3 826.3 606.2 826.5 606.2 C826.7 606.2 826.9 606.3 827.1 606.3 C827.3 606.4 827.5 606.5 827.6 606.6 C827.8 606.7 828 606.8 828.1 607 C828.3 607.1 828.4 607.3 828.5 607.5 C828.6 607.7 828.7 607.9 828.7 608.1 C828.8 608.4 828.8 608.6 828.8 608.8Z M827.8 608.8 C827.8 608.9 827.8 609.1 827.7 609.2 C827.7 609.3 827.7 609.5 827.6 609.6 C827.5 609.7 827.5 609.8 827.4 609.9 C827.3 610 827.2 610.1 827.1 610.2 C827 610.2 826.9 610.3 826.8 610.3 C826.7 610.3 826.6 610.4 826.5 610.4 C826.4 610.4 826.3 610.3 826.1 610.3 C826 610.3 825.9 610.2 825.8 610.2 C825.7 610.1 825.6 610 825.6 609.9 C825.5 609.8 825.4 609.7 825.4 609.6 C825.3 609.5 825.3 609.3 825.2 609.2 C825.2 609.1 825.2 608.9 825.2 608.8 C825.2 608.7 825.2 608.5 825.2 608.4 C825.3 608.3 825.3 608.2 825.4 608 C825.4 607.9 825.5 607.8 825.6 607.7 C825.6 607.6 825.7 607.5 825.8 607.5 C825.9 607.4 826 607.4 826.1 607.3 C826.3 607.3 826.4 607.3 826.5 607.3 C826.6 607.3 826.7 607.3 826.8 607.3 C826.9 607.4 827 607.4 827.1 607.5 C827.2 607.5 827.3 607.6 827.4 607.7 C827.5 607.8 827.5 607.9 827.6 608 C827.7 608.2 827.7 608.3 827.7 608.4 C827.8 608.5 827.8 608.7 827.8 608.8Z M831.8 606.2 C831.8 606.4 831.8 606.5 831.7 606.6 C831.7 606.8 831.7 606.9 831.6 607 C831.6 607.1 831.5 607.2 831.5 607.3 C831.4 607.4 831.3 607.5 831.3 607.6 C831.2 607.6 831.1 607.7 831 607.7 C830.9 607.8 830.8 607.8 830.7 607.8 C830.7 607.8 830.6 607.8 830.5 607.7 C830.4 607.7 830.3 607.6 830.2 607.6 C830.1 607.5 830.1 607.4 830 607.3 C829.9 607.2 829.9 607.1 829.8 607 C829.8 606.9 829.8 606.8 829.7 606.6 C829.7 606.5 829.7 606.4 829.7 606.2 C829.7 606.1 829.7 606 829.7 605.8 C829.8 605.7 829.8 605.6 829.8 605.5 C829.9 605.3 829.9 605.2 830 605.1 C830.1 605 830.1 605 830.2 604.9 C830.3 604.8 830.4 604.8 830.5 604.7 C830.6 604.7 830.7 604.7 830.7 604.7 C830.8 604.7 830.9 604.7 831 604.7 C831.1 604.8 831.2 604.8 831.3 604.9 C831.3 605 831.4 605 831.5 605.1 C831.5 605.2 831.6 605.3 831.6 605.5 C831.7 605.6 831.7 605.7 831.7 605.8 C831.8 606 831.8 606.1 831.8 606.2Z M819.4 612.3 L823.9 610.1 M820 614.1 L824.5 611.5 M818.3 614 C818.3 614.1 818.3 614.2 818.3 614.3 C818.3 614.3 818.2 614.4 818.2 614.5 C818.1 614.6 818 614.7 818 614.7 C817.9 614.8 817.8 614.8 817.7 614.9 C817.6 614.9 817.5 615 817.4 615 C817.3 615 817.2 615 817.1 615 C816.9 615 816.8 615 816.7 615 C816.6 615 816.5 614.9 816.4 614.9 C816.3 614.8 816.2 614.8 816.1 614.7 C816.1 614.7 816 614.6 815.9 614.5 C815.9 614.4 815.8 614.3 815.8 614.3 C815.8 614.2 815.8 614.1 815.8 614 C815.8 613.9 815.8 613.8 815.8 613.7 C815.8 613.6 815.9 613.5 815.9 613.5 C816 613.4 816.1 613.3 816.1 613.3 C816.2 613.2 816.3 613.1 816.4 613.1 C816.5 613 816.6 613 816.7 613 C816.8 613 816.9 612.9 817.1 612.9 C817.2 612.9 817.3 613 817.4 613 C817.5 613 817.6 613 817.7 613.1 C817.8 613.1 817.9 613.2 818 613.3 C818 613.3 818.1 613.4 818.2 613.5 C818.2 613.5 818.3 613.6 818.3 613.7 C818.3 613.8 818.3 613.9 818.3 614Z M1002.3 539.4 C1002.1 540 1002 541.8 1001.3 543 C1000.7 544.2 999.8 545.3 998.6 546.4 C997.4 547.4 995.9 548.4 994.3 549.3 C992.6 550.1 990.6 550.9 988.6 551.5 C986.5 552.1 984.3 552.6 982 552.9 C979.7 553.2 977.3 553.3 974.9 553.3 C972.5 553.3 970.1 553.2 967.8 552.9 C965.5 552.6 963.3 552.1 961.2 551.5 C959.2 550.9 957.2 550.1 955.5 549.3 C953.9 548.4 952.4 547.4 951.2 546.4 C950 545.3 949.1 544.2 948.4 543 C947.8 541.8 947.7 540 947.5 539.4 M998.9 539 C998.9 540 998.6 541.1 998.1 542.1 C997.6 543.1 996.7 544.1 995.7 545 C994.7 545.9 993.4 546.8 991.9 547.5 C990.4 548.2 988.7 548.9 986.9 549.4 C985.1 549.9 983.1 550.3 981.1 550.6 C979.1 550.9 977 551 974.9 551 C972.8 551 970.7 550.9 968.7 550.6 C966.7 550.3 964.7 549.9 962.9 549.4 C961.1 548.9 959.4 548.2 957.9 547.5 C956.4 546.8 955.1 545.9 954.1 545 C953.1 544.1 952.2 543.1 951.7 542.1 C951.2 541.1 950.9 540 950.9 539 C950.9 538 951.2 536.9 951.7 535.9 C952.2 534.9 953.1 533.9 954.1 533 C955.1 532.1 956.4 531.2 957.9 530.5 C959.4 529.8 961.1 529.1 962.9 528.6 C964.7 528.1 966.7 527.7 968.7 527.4 C970.7 527.1 972.8 527 974.9 527 C977 527 979.1 527.1 981.1 527.4 C983.1 527.7 985.1 528.1 986.9 528.6 C988.7 529.1 990.4 529.8 991.9 530.5 C993.4 531.2 994.7 532.1 995.7 533 C996.7 533.9 997.6 534.9 998.1 535.9 C998.6 536.9 998.9 538 998.9 539Z M998.7 544.5 C998.2 545 996.8 546.6 995.5 547.6 C994.2 548.5 992.6 549.4 990.8 550.1 C989 550.8 987 551.4 984.9 551.9 C982.8 552.4 980.6 552.7 978.3 552.8 C976.1 553 973.7 553 971.5 552.8 C969.2 552.7 966.9 552.4 964.9 551.9 C962.8 551.4 960.8 550.8 959 550.1 C957.2 549.4 955.6 548.5 954.3 547.6 C953 546.6 951.6 545 951.1 544.5 M947.5 539.4 L947.9 553 M1002.3 539.4 L1002.7 551 M1002.5 552.3 C1002.4 552.9 1002.2 554.8 1001.6 556 C1001 557.2 1000 558.4 998.8 559.4 C997.6 560.5 996.1 561.5 994.4 562.4 C992.8 563.2 990.8 564 988.7 564.6 C986.7 565.2 984.4 565.7 982.1 566 C979.7 566.4 977.3 566.5 974.9 566.5 C972.5 566.5 970 566.4 967.7 566 C965.4 565.7 963.1 565.2 961.1 564.6 C959 564 957 563.2 955.4 562.4 C953.7 561.5 952.2 560.5 951 559.4 C949.8 558.4 948.8 557.2 948.2 556 C947.6 554.8 947.4 552.9 947.3 552.3 M1004.8 550.8 C1005 551.7 1006.1 554.3 1006.3 556 C1006.4 557.7 1006.1 559.6 1005.5 561.2 C1004.8 562.9 1003.8 564.6 1002.4 566.1 C1001.1 567.7 999.3 569.1 997.4 570.4 C995.4 571.6 993.1 572.7 990.7 573.6 C988.2 574.5 985.5 575.2 982.8 575.6 C980.1 576 977.2 576.2 974.3 576.2 C971.5 576.2 968.6 575.9 965.9 575.4 C963.3 574.9 960.6 574.2 958.2 573.2 C955.8 572.3 953.6 571.2 951.7 569.9 C949.8 568.6 948.1 567.1 946.9 565.5 C945.6 564 944.6 562.3 944.1 560.6 C943.6 558.9 943.4 557.1 943.6 555.3 C943.8 553.6 945.1 551.1 945.4 550.2 M1004.2 554.2 C1004.2 555.1 1004.3 557.6 1003.8 559.2 C1003.3 560.7 1002.4 562.4 1001.2 563.8 C1000 565.3 998.4 566.6 996.6 567.8 C994.8 569 992.6 570.1 990.4 571 C988.1 571.8 985.5 572.5 982.9 573 C980.4 573.4 977.6 573.6 974.9 573.6 C972.2 573.6 969.4 573.4 966.9 573 C964.3 572.5 961.7 571.8 959.4 571 C957.2 570.1 955 569 953.2 567.8 C951.4 566.6 949.8 565.3 948.6 563.8 C947.4 562.4 946.5 560.7 946 559.2 C945.5 557.6 945.6 555.1 945.6 554.2 M1003.5 556.3 C1003.2 557.1 1002.7 559.3 1001.8 560.7 C1000.9 562.1 999.6 563.4 998.1 564.6 C996.6 565.8 994.8 566.9 992.8 567.8 C990.8 568.7 988.5 569.5 986.2 570.1 C983.8 570.7 981.3 571.1 978.8 571.3 C976.2 571.5 973.6 571.5 971 571.3 C968.5 571.1 966 570.7 963.6 570.1 C961.3 569.5 959 568.7 957 567.8 C955 566.9 953.2 565.8 951.7 564.6 C950.2 563.4 948.9 562.1 948 560.7 C947.1 559.3 946.6 557.1 946.3 556.3 M968.4 558.1 L976.6 559.4 L976.6 567.8 L968.4 569.1Z M980.7 512.9 L985.9 515.2 L997.5 515.2 M999.4 532.3 L1004 530.7 L1011.1 530.7 M935.2 544.6 L935.2 538.5 L943.9 538.5 M1014.9 562.4 L1024 562.4 M976.2 605.9 L987.2 616 L997.5 616 M976.8 514.2 C976.8 514.3 976.8 514.4 976.8 514.5 C976.7 514.7 976.7 514.8 976.6 514.9 C976.6 515 976.5 515 976.4 515.1 C976.3 515.2 976.2 515.3 976.1 515.3 C975.9 515.4 975.8 515.4 975.7 515.5 C975.6 515.5 975.4 515.5 975.3 515.5 C975.2 515.5 975 515.5 974.9 515.5 C974.8 515.4 974.6 515.4 974.5 515.3 C974.4 515.3 974.3 515.2 974.2 515.1 C974.1 515 974 515 973.9 514.9 C973.9 514.8 973.8 514.7 973.8 514.5 C973.8 514.4 973.7 514.3 973.7 514.2 C973.7 514.1 973.8 514 973.8 513.9 C973.8 513.8 973.9 513.7 973.9 513.6 C974 513.5 974.1 513.4 974.2 513.3 C974.3 513.2 974.4 513.1 974.5 513.1 C974.6 513 974.8 513 974.9 513 C975 512.9 975.2 512.9 975.3 512.9 C975.4 512.9 975.6 512.9 975.7 513 C975.8 513 975.9 513 976.1 513.1 C976.2 513.1 976.3 513.2 976.4 513.3 C976.5 513.4 976.6 513.5 976.6 513.6 C976.7 513.7 976.7 513.8 976.8 513.9 C976.8 514 976.8 514.1 976.8 514.2Z M976.8 511.6 L979.4 511 L979.7 512.9 M987.2 591.1 C987.2 591.8 987 592.5 986.7 593.1 C986.4 593.8 985.9 594.5 985.4 595.1 C984.8 595.7 984 596.2 983.2 596.7 C982.4 597.2 981.4 597.7 980.4 598 C979.4 598.3 978.2 598.6 977.1 598.8 C976 599 974.8 599.1 973.6 599.1 C972.4 599.1 971.2 599 970.1 598.8 C969 598.6 967.8 598.3 966.8 598 C965.8 597.7 964.8 597.2 964 596.7 C963.2 596.2 962.4 595.7 961.9 595.1 C961.3 594.5 960.8 593.8 960.5 593.1 C960.2 592.5 960 591.8 960 591.1 C960 590.4 960.2 589.7 960.5 589 C960.8 588.3 961.3 587.7 961.9 587.1 C962.4 586.5 963.2 585.9 964 585.4 C964.8 584.9 965.8 584.5 966.8 584.1 C967.8 583.8 969 583.5 970.1 583.3 C971.2 583.2 972.4 583.1 973.6 583.1 C974.8 583.1 976 583.2 977.1 583.3 C978.2 583.5 979.4 583.8 980.4 584.1 C981.4 584.5 982.4 584.9 983.2 585.4 C984 585.9 984.8 586.5 985.4 587.1 C985.9 587.7 986.4 588.3 986.7 589 C987 589.7 987.2 590.4 987.2 591.1Z M961 592.7 C961.1 592.4 961.4 591.5 961.7 591 C962.1 590.5 962.7 589.9 963.4 589.5 C964 589 964.8 588.6 965.7 588.2 C966.6 587.9 967.6 587.6 968.6 587.3 C969.7 587.1 970.8 586.9 971.9 586.9 C973 586.8 974.2 586.8 975.3 586.9 C976.4 586.9 977.6 587.1 978.6 587.3 C979.6 587.6 980.6 587.9 981.5 588.2 C982.4 588.6 983.2 589 983.9 589.5 C984.5 589.9 985.1 590.5 985.5 591 C985.9 591.5 986.1 592.4 986.2 592.7 M987.2 593.6 C987.1 594 987 595.1 986.7 595.7 C986.4 596.4 985.9 597.1 985.4 597.7 C984.8 598.3 984 598.8 983.2 599.3 C982.4 599.8 981.4 600.2 980.4 600.6 C979.4 600.9 978.2 601.2 977.1 601.4 C976 601.6 974.8 601.7 973.6 601.7 C972.4 601.7 971.2 601.6 970.1 601.4 C969 601.2 967.8 600.9 966.8 600.6 C965.8 600.2 964.8 599.8 964 599.3 C963.2 598.8 962.4 598.3 961.9 597.7 C961.3 597.1 960.8 596.4 960.5 595.7 C960.2 595.1 960.1 594 960 593.6 M960 591.1 L960 593.6 M987.2 591.1 L987.2 593.6 M961.1 590.1 L961.1 591 M962.3 588.6 L962.3 589.5 M964 587.2 L964 588.1 M966.4 586.1 L966.4 587 M969.1 585.3 L969.1 586.2 M972.1 584.9 L972.1 585.8 M975.1 584.9 L975.1 585.8 M978.1 585.3 L978.1 586.2 M980.8 586.1 L980.8 587 M983.2 587.2 L983.2 588.1 M984.9 588.6 L984.9 589.5 M986.1 590.1 L986.1 591 M965.2 609.8 C965.2 609.2 965.3 605.8 967.1 604.6 C969 603.5 985.1 596.9 987.2 596.2 C989.3 595.6 992 596.6 992.3 596.9 C992.7 597.2 992.6 599.2 991.7 599.7 C990.8 600.3 984 602.6 982 603.6 C980 604.6 969.2 610.8 967.8 611.3 C966.4 611.9 965.3 610.4 965.2 609.8Z M968.4 607.9 L987.2 598.8 M992.9 596.6 C992.9 596.8 992.8 597.1 992.8 597.3 C992.7 597.5 992.6 597.7 992.5 597.9 C992.3 598.1 992.2 598.3 992 598.4 C991.8 598.6 991.6 598.7 991.4 598.9 C991.2 599 991 599.1 990.7 599.1 C990.5 599.2 990.3 599.2 990 599.2 C989.8 599.2 989.5 599.2 989.3 599.1 C989 599.1 988.8 599 988.6 598.9 C988.4 598.7 988.2 598.6 988 598.4 C987.8 598.3 987.7 598.1 987.5 597.9 C987.4 597.7 987.3 597.5 987.3 597.3 C987.2 597.1 987.2 596.8 987.2 596.6 C987.2 596.4 987.2 596.2 987.3 596 C987.3 595.7 987.4 595.5 987.5 595.3 C987.7 595.1 987.8 595 988 594.8 C988.2 594.6 988.4 594.5 988.6 594.4 C988.8 594.3 989 594.2 989.3 594.1 C989.5 594.1 989.8 594 990 594 C990.3 594 990.5 594.1 990.7 594.1 C991 594.2 991.2 594.3 991.4 594.4 C991.6 594.5 991.8 594.6 992 594.8 C992.2 595 992.3 595.1 992.5 595.3 C992.6 595.5 992.7 595.7 992.8 596 C992.8 596.2 992.9 596.4 992.9 596.6Z M978.8 600.1 L980.7 603.3 M980.7 599.2 L982.8 602.3"/>
<path stroke="#111" stroke-width="1.1" d="M822 558.4 C822.1 557.8 822.3 555.9 822.9 554.7 C823.5 553.5 824.5 552.3 825.7 551.2 C826.9 550.1 828.4 549.1 830.1 548.2 C831.8 547.3 833.8 546.5 835.8 545.9 C837.9 545.3 840.2 544.8 842.5 544.5 C844.9 544.1 847.3 544 849.7 544 C852.1 544 854.6 544.1 856.9 544.5 C859.2 544.8 861.5 545.3 863.6 545.9 C865.7 546.5 867.7 547.3 869.4 548.2 C871.1 549.1 872.6 550.1 873.8 551.2 C875 552.3 875.9 553.5 876.6 554.7 C877.2 555.9 877.3 557.8 877.5 558.4 M819.8 580.9 C819.7 580.8 819.2 580.2 819 579.9 C818.7 579.5 818.5 579.2 818.3 578.8 C818.1 578.4 818 578.1 817.9 577.7 C817.7 577.3 817.6 576.9 817.6 576.6 C817.5 576.2 817.5 575.8 817.4 575.4 C817.4 575.1 817.4 574.7 817.5 574.3 C817.5 573.9 817.6 573.5 817.7 573.2 C817.8 572.8 818.1 572.2 818.1 572.1 M819.9 580.4 C819.8 580.2 819.4 579.7 819.2 579.4 C819 579.1 818.9 578.8 818.7 578.5 C818.6 578.2 818.4 577.8 818.3 577.5 C818.2 577.2 818.1 576.9 818.1 576.5 C818 576.2 818 575.9 818 575.6 C817.9 575.2 818 574.9 818 574.6 C818 574.3 818.1 573.9 818.1 573.6 C818.2 573.3 818.4 572.8 818.4 572.6 M881.1 571.5 C881.1 571.7 881.3 572 881.4 572.3 C881.5 572.5 881.6 572.7 881.7 573 C881.7 573.2 881.8 573.5 881.9 573.7 C881.9 573.9 882 574.2 882 574.4 C882 574.7 882 574.9 882 575.2 C882 575.4 882 575.7 882 575.9 C882 576.1 881.9 576.4 881.9 576.6 C881.8 576.9 881.7 577.2 881.7 577.4 M880.8 572.1 C880.9 572.2 881 572.5 881 572.7 C881.1 572.9 881.2 573.1 881.2 573.3 C881.3 573.5 881.3 573.7 881.4 573.9 C881.4 574.1 881.4 574.3 881.5 574.4 C881.5 574.6 881.5 574.8 881.5 575 C881.5 575.2 881.5 575.4 881.5 575.6 C881.5 575.8 881.5 576 881.4 576.2 C881.4 576.4 881.4 576.7 881.3 576.8 M830.7 573.6 L831.3 583 M845.9 555.5 L848.4 552.4 L853 552 L852.3 555.2 L849.7 557.1 L846.5 557.1Z M947.5 539.4 C947.7 538.8 947.8 536.9 948.4 535.8 C949.1 534.6 950 533.5 951.2 532.4 C952.4 531.4 953.9 530.4 955.5 529.5 C957.2 528.7 959.2 527.9 961.2 527.3 C963.3 526.7 965.5 526.2 967.8 525.9 C970.1 525.6 972.5 525.4 974.9 525.4 C977.3 525.4 979.7 525.6 982 525.9 C984.3 526.2 986.5 526.7 988.6 527.3 C990.6 527.9 992.6 528.7 994.3 529.5 C995.9 530.4 997.4 531.4 998.6 532.4 C999.8 533.5 1000.7 534.6 1001.3 535.8 C1002 536.9 1002.1 538.8 1002.3 539.4 M976.1 537.7 C976.1 537.8 976 537.8 976 537.9 C976 537.9 976 538 975.9 538 C975.9 538.1 975.9 538.1 975.8 538.2 C975.7 538.2 975.7 538.2 975.6 538.3 C975.5 538.3 975.5 538.3 975.4 538.3 C975.3 538.4 975.2 538.4 975.2 538.4 C975.1 538.4 975 538.4 974.9 538.3 C974.8 538.3 974.8 538.3 974.7 538.3 C974.6 538.2 974.6 538.2 974.5 538.2 C974.5 538.1 974.4 538.1 974.4 538 C974.3 538 974.3 537.9 974.3 537.9 C974.3 537.8 974.3 537.8 974.3 537.7 C974.3 537.7 974.3 537.6 974.3 537.6 C974.3 537.5 974.3 537.4 974.4 537.4 C974.4 537.3 974.5 537.3 974.5 537.3 C974.6 537.2 974.6 537.2 974.7 537.2 C974.8 537.1 974.8 537.1 974.9 537.1 C975 537.1 975.1 537.1 975.2 537.1 C975.2 537.1 975.3 537.1 975.4 537.1 C975.5 537.1 975.5 537.1 975.6 537.2 C975.7 537.2 975.7 537.2 975.8 537.3 C975.9 537.3 975.9 537.3 975.9 537.4 C976 537.4 976 537.5 976 537.6 C976 537.6 976.1 537.7 976.1 537.7Z M975.5 537.7 C975.5 537.7 975.5 537.8 975.5 537.8 C975.5 537.8 975.5 537.8 975.5 537.8 C975.5 537.9 975.5 537.9 975.4 537.9 C975.4 537.9 975.4 537.9 975.3 537.9 C975.3 538 975.3 538 975.3 538 C975.2 538 975.2 538 975.2 538 C975.1 538 975.1 538 975.1 538 C975 538 975 538 975 537.9 C974.9 537.9 974.9 537.9 974.9 537.9 C974.9 537.9 974.8 537.9 974.8 537.8 C974.8 537.8 974.8 537.8 974.8 537.8 C974.8 537.8 974.8 537.7 974.8 537.7 C974.8 537.7 974.8 537.7 974.8 537.7 C974.8 537.6 974.8 537.6 974.8 537.6 C974.8 537.6 974.9 537.6 974.9 537.5 C974.9 537.5 974.9 537.5 975 537.5 C975 537.5 975 537.5 975.1 537.5 C975.1 537.5 975.1 537.5 975.2 537.5 C975.2 537.5 975.2 537.5 975.3 537.5 C975.3 537.5 975.3 537.5 975.3 537.5 C975.4 537.5 975.4 537.5 975.4 537.5 C975.5 537.6 975.5 537.6 975.5 537.6 C975.5 537.6 975.5 537.6 975.5 537.7 C975.5 537.7 975.5 537.7 975.5 537.7Z M1005.8 560.2 C1005.4 561.1 1004.4 563.8 1003.1 565.4 C1001.8 567 1000 568.6 998.1 569.9 C996.1 571.2 993.7 572.4 991.3 573.4 C988.8 574.3 985.9 575.1 983.1 575.5 C980.3 576 977.3 576.2 974.3 576.2 C971.4 576.2 968.4 575.9 965.6 575.3 C962.8 574.8 960.1 574 957.6 573 C955.2 572 952.9 570.8 951 569.4 C949.1 568 947.5 566.4 946.3 564.8 C945.1 563.1 944.2 560.4 943.8 559.5 M968.7 558.4 L968.7 569 M971.7 514.2 C971.8 513.7 973.1 512.2 973.6 511.9 C974.1 511.6 976.3 511.3 976.8 511.4 C977.4 511.5 978.7 512.5 978.8 512.9 C978.8 513.4 977.9 515.3 977.5 515.8 C977 516.2 974.8 517 974.3 517.1 C973.7 517.1 972.2 516.8 971.9 516.5 C971.7 516.2 971.5 514.7 971.7 514.2Z M936.1 544.6 C936.4 544.7 937.8 545.2 938.1 545.9 C938.4 546.5 938.6 548.7 938.3 549.7 C938.1 550.7 936.7 553 936.1 553.2 C935.6 553.4 934.5 551.3 934.2 551 M935.5 545.9 C935.3 546.2 934 547.7 934 548.4 C933.9 549.2 935.1 551.2 935.2 551.7 M936.5 545.2 C936.8 545.6 938.7 546.9 938.9 547.8 C939 548.7 938 551.2 937.8 551.7 M1011.1 563.9 C1011.5 564.1 1013.7 564.6 1014.3 565.2 C1014.9 565.8 1015.5 567.5 1015.3 568.5 C1015.2 569.4 1013.6 571.8 1013 572.1 C1012.4 572.4 1011 571 1010.7 570.8 M1012 565.2 C1011.8 565.5 1010.4 566.6 1010.4 567.2 C1010.5 567.8 1012.1 569.4 1012.4 569.8 M1012.7 564.3 C1013.2 564.7 1015.6 566.3 1015.8 567.2 C1016.1 568.1 1014.5 570.5 1014.3 571"/>
<path stroke="#1a1a1a" stroke-width="0.68" d="M649.3 501.5 L807.5 580.4 M648.9 502.4 L807.5 584.3"/>
<path stroke="#222" stroke-width="0.85" d="M578.2 393 L612.6 414.3 M545.4 429.5 L567 440.7 M545.8 430.4 L567.3 441.6 M537.7 424.8 C537.4 426.1 535.4 434.2 534.8 437.2 C534.2 440.3 531.7 452.7 531.7 455.3 C531.7 457.9 534 462 534.8 463.1 C535.5 464.1 536.2 465.1 539.4 466.2 C542.6 467.2 563.7 473.1 567 473.7 C570.2 474.4 571.3 473 572.1 472.5 C573 472.1 574.9 471.2 575.6 469.1 C576.3 466.9 578.4 453.9 579 451 C579.6 448.1 581.4 441.4 581.6 440.3"/>
<path stroke="#777" stroke-width="0.5" d="M585.1 391.6 L600.6 386.4 M590.2 395.1 L616.1 389 M593.7 400.2 L622.9 395.1 M600.6 404.5 L626.4 400.2 M607.4 408.8 L624.7 403.7 M586.8 389 L597.1 385.6 M536.8 445 C538.3 444.1 542.9 440.1 545.4 439.8 C548 439.6 549.8 443.6 552.3 443.3 C554.9 443 559.5 439 560.9 438.1 M538.6 451.9 C540.3 450.9 545.7 446.3 548.9 445.9 C552 445.4 554.1 449.7 557.5 449.3 C560.9 448.9 567.5 444.3 569.6 443.3 M642.3 438.6 L650.9 435.1 M638.9 445.4 L652.7 440.3 M635.4 452.3 L650.9 447.2 M807.5 557.1 L807.5 599.1 M929.4 513.6 L929.4 559.4 L920 559.7 M920 563.3 L929.4 563.3 L929.4 609.8"/>
<text x="859.2" y="537.5" font-family="Liberation Sans, sans-serif" font-size="7.8px" text-anchor="middle" fill="#222" stroke="none">1</text>
<text x="993.0" y="514.5" font-family="Liberation Sans, sans-serif" font-size="7.8px" text-anchor="middle" fill="#222" stroke="none">3</text>
<text x="1006.8" y="530.1" font-family="Liberation Sans, sans-serif" font-size="7.8px" text-anchor="middle" fill="#222" stroke="none">2</text>
<text x="939.4" y="537.7" font-family="Liberation Sans, sans-serif" font-size="7.8px" text-anchor="middle" fill="#222" stroke="none">4</text>
<text x="1019.5" y="561.6" font-family="Liberation Sans, sans-serif" font-size="7.8px" text-anchor="middle" fill="#222" stroke="none">4</text>
<text x="993.0" y="615.3" font-family="Liberation Sans, sans-serif" font-size="7.8px" text-anchor="middle" fill="#222" stroke="none">5</text>
</svg>
<!--DRAW-END-->
<div id="bottombar"></div>
<div class="abs" style="left:791px;top:904px;width:141px;height:22px;background:#fff;border:1px solid #adadad;box-sizing:border-box;"></div>
<div class="ar" style="left:798px;top:906.5px;font-size:15px;line-height:18px;color:#000">17 / 1060</div>
<svg class="abs" style="left:730px;top:900px" width="340" height="29" viewBox="730 900 340 29">
<path d="M734.5 915.3 L745 907 V923.6 Z M745 915.3 L750.2 907.4 V923.2 Z" fill="#1a1a1a"/>
<path d="M767.8 915.3 L777.3 907 V923.6 Z" fill="#1a1a1a"/>
<path d="M921.4 913.4 H928.2 L924.8 917.4 Z" fill="#1a1a1a"/>
<path d="M953.4 915.4 L943.8 907 V923.8 Z" fill="#1a1a1a"/>
<path d="M978 915.4 L972.7 907.4 V923.4 Z M987.6 915.4 L978 907 V923.8 Z" fill="#1a1a1a"/>
<!-- icon 1 -->
<rect x="1002.5" y="906.5" width="10" height="12" fill="#fff" stroke="#555" stroke-width="1"/>
<rect x="1002" y="906" width="11" height="2.4" fill="#3a6fb5"/>
<rect x="1009" y="914" width="12.5" height="11" fill="#fff" stroke="#777" stroke-width="1.2"/>
<rect x="1008.4" y="913.4" width="13.7" height="2.6" fill="#555"/>
<path d="M1021.5 909.3 H1015 M1017.2 906.2 L1013.2 909.3 L1017.2 912.4" stroke="#4aa36c" stroke-width="1.7" fill="none"/>
<!-- icon 2 (disabled) -->
<rect x="1034.5" y="906.5" width="13" height="13" fill="#f4f4f4" stroke="#c8c8c8" stroke-width="1"/>
<rect x="1034" y="906" width="14" height="2.2" fill="#d0d0d0"/>
<rect x="1040.5" y="912.5" width="13.5" height="12.5" fill="#f6f6f6" stroke="#cfcfd4" stroke-width="1"/>
<rect x="1040" y="912" width="14.5" height="2.4" fill="#c3cfe3"/>
<path d="M1034.5 921.4 H1040 M1038.4 918.8 L1041.4 921.4 L1038.4 924" stroke="#b9dcc6" stroke-width="1.5" fill="none"/>
</svg>
<!-- splitter grip -->
<svg class="abs" style="left:316px;top:385px" width="10" height="52" viewBox="316 384 10 52" shape-rendering="crispEdges">
<g fill="#6a6a6a">
<rect x="319" y="388" width="1" height="1.4"/><rect x="321" y="388" width="1" height="1.4"/><rect x="319" y="391" width="1" height="1.4"/><rect x="321" y="391" width="1" height="1.4"/><rect x="319" y="394" width="1" height="1.4"/><rect x="321" y="394" width="1" height="1.4"/><rect x="319" y="397" width="1" height="1.4"/><rect x="321" y="397" width="1" height="1.4"/><rect x="319" y="400" width="1" height="1.4"/><rect x="321" y="400" width="1" height="1.4"/><rect x="319" y="403" width="1" height="1.4"/><rect x="321" y="403" width="1" height="1.4"/><rect x="319" y="406" width="1" height="1.4"/><rect x="321" y="406" width="1" height="1.4"/><rect x="319" y="409" width="1" height="1.4"/><rect x="321" y="409" width="1" height="1.4"/><rect x="319" y="412" width="1" height="1.4"/><rect x="321" y="412" width="1" height="1.4"/><rect x="319" y="415" width="1" height="1.4"/><rect x="321" y="415" width="1" height="1.4"/><rect x="319" y="418" width="1" height="1.4"/><rect x="321" y="418" width="1" height="1.4"/><rect x="319" y="421" width="1" height="1.4"/><rect x="321" y="421" width="1" height="1.4"/><rect x="319" y="424" width="1" height="1.4"/><rect x="321" y="424" width="1" height="1.4"/><rect x="319" y="427" width="1" height="1.4"/><rect x="321" y="427" width="1" height="1.4"/><rect x="319" y="430" width="1" height="1.4"/><rect x="321" y="430" width="1" height="1.4"/>
</g>
</svg>
</body>
</html>
